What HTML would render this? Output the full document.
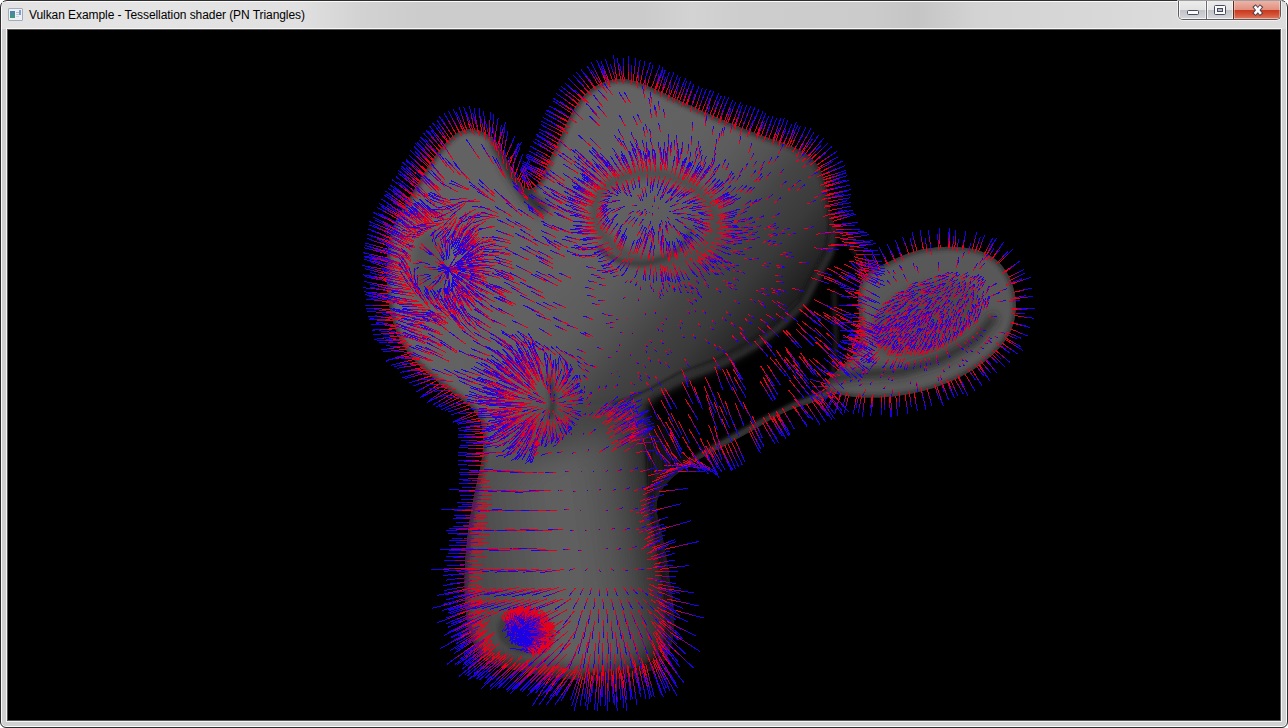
<!DOCTYPE html>
<html><head><meta charset="utf-8"><title>Vulkan Example - Tessellation shader (PN Triangles)</title>
<style>
html,body{margin:0;padding:0;background:#fff;}
body{width:1288px;height:728px;overflow:hidden;position:relative;font-family:"Liberation Sans",sans-serif;}
#win{position:absolute;left:0;top:0;width:1286px;height:726px;border:1px solid #2e2e2e;border-radius:7px 7px 6px 6px;
 background:#d1d1d1;box-shadow:inset 0 0 0 1px #fafafa;}
#tb{position:absolute;left:1px;top:1px;width:1284px;height:27px;background:linear-gradient(90deg,#e3e3e3 0,#e4e4e4 150px,#e0e0e0 300px,#d2d2d2 360px,#cccccc 420px,#cbcbcb 640px,#d3d3d3 690px,#cdcdcd 740px,#cbcbcb 870px,#c5c5c5 915px,#d3d3d3 975px,#d8d8d8 1100px,#dcdcdc 1180px,#dddddd 1284px);}
#title{position:absolute;left:28px;top:7px;font-size:12px;line-height:15px;color:#000;white-space:nowrap;letter-spacing:-0.07px;}
#icon{position:absolute;left:7px;top:7px;width:13px;height:11px;border:1px solid #a4abb9;background:#eef0f5;border-radius:1px;}
#icon i{position:absolute;left:1px;top:2px;width:5px;height:7px;background:linear-gradient(180deg,#4f7fb5,#3f9a74);}
#icon b{position:absolute;left:10px;top:1px;width:2px;height:5px;background:#7aa0d0;}
#icon u{position:absolute;left:7px;top:3px;width:3px;height:1px;background:#b8bcc6;box-shadow:0 2px 0 #c4c8d0,0 4px 0 #d0d3da;}
#client{position:absolute;left:6px;top:28px;width:1272px;height:690px;border:1px solid #555;outline:1px solid #f6f6f6;background:#000;}
#client svg{position:absolute;left:0;top:0;}
#btns{position:absolute;left:1177px;top:0px;width:101px;height:18px;border:1px solid #5a5a5f;border-top:none;border-radius:0 0 5px 5px;overflow:hidden;
 box-shadow:0 0 0 1px rgba(255,255,255,.55);}
#btns div{position:absolute;top:0;height:18px;box-sizing:border-box;}
.gb{background:linear-gradient(180deg,#ececec 0,#e2e2e3 9px,#c3c4c9 9.5px,#cfd0d4 15px,#dadbde 19px);box-shadow:inset 1px 0 0 rgba(255,255,255,.8),inset -1px 0 0 rgba(255,255,255,.5),inset 0 -1px 0 rgba(255,255,255,.7);}
#bmin{left:0;width:28px;border-right:1px solid #6a6a70;}
#bmax{left:28px;width:27px;border-right:1px solid #5a2a22;}
#bcls{left:55px;width:46px;background:linear-gradient(180deg,#eeb3a6 0,#e08f7f 9px,#c9391c 9.5px,#d4553a 14px,#e0846c 19px);box-shadow:inset 1px 0 0 rgba(255,255,255,.35),inset -1px 0 0 rgba(255,255,255,.35),inset 0 -1px 0 rgba(255,220,200,.6);}
#btns svg{position:absolute;left:0;top:0;}
</style></head><body>
<div id="win">
<div id="tb"></div>
<div id="icon"><i></i><u></u><b></b></div>
<div id="title">Vulkan Example - Tessellation shader (PN Triangles)</div>
<div id="btns"><div id="bmin" class="gb"></div><div id="bmax" class="gb"></div><div id="bcls"></div><svg width="101" height="18" viewBox="1179 1 101 18">
<rect x="1187.5" y="10.5" width="11" height="4" rx="1" fill="#fbfbfb" stroke="#454a5e" stroke-width="1"/>
<rect x="1214.5" y="5.5" width="11" height="9" rx="1" fill="#fbfbfb" stroke="#454a5e" stroke-width="1"/>
<rect x="1217.5" y="8.5" width="5" height="3" fill="#b9bbc4" stroke="#454a5e" stroke-width="1"/>
<g stroke-linecap="butt" fill="none"><line x1="1254.0" y1="5.6" x2="1261.6" y2="14.7" stroke="#4d414b" stroke-width="4.4"/><line x1="1261.6" y1="5.6" x2="1254.0" y2="14.7" stroke="#4d414b" stroke-width="4.4"/><line x1="1254.7" y1="6.4" x2="1260.9" y2="13.9" stroke="#fdfdfd" stroke-width="2.5"/><line x1="1260.9" y1="6.4" x2="1254.7" y2="13.9" stroke="#fdfdfd" stroke-width="2.5"/></g>
</svg></div>
<div id="client"><svg width="1272" height="690" viewBox="8 30 1272 690">
<defs>
<filter id="b1" filterUnits="userSpaceOnUse" x="300" y="30" width="800" height="700"><feGaussianBlur stdDeviation="0.8"/></filter>
<filter id="b2" filterUnits="userSpaceOnUse" x="300" y="30" width="800" height="700"><feGaussianBlur stdDeviation="2"/></filter>
<filter id="b4" filterUnits="userSpaceOnUse" x="300" y="30" width="800" height="700"><feGaussianBlur stdDeviation="4"/></filter>
<filter id="b8" filterUnits="userSpaceOnUse" x="300" y="30" width="800" height="700"><feGaussianBlur stdDeviation="8"/></filter>
<filter id="b14" filterUnits="userSpaceOnUse" x="300" y="30" width="800" height="700"><feGaussianBlur stdDeviation="14"/></filter>
<clipPath id="ch"><path d="M386.9 261.5 L387.1 258.4 L387.3 255.3 L387.6 252.3 L387.9 249.2 L388.3 246.2 L388.8 243.2 L389.3 240.3 L390.0 237.3 L390.7 234.4 L391.6 231.5 L392.5 228.6 L393.6 225.8 L394.8 223.0 L396.1 220.2 L397.5 217.4 L399.1 214.6 L400.7 211.9 L402.4 209.2 L404.1 206.5 L405.8 203.8 L407.5 201.0 L409.1 198.3 L410.7 195.6 L412.3 192.9 L413.9 190.3 L415.5 187.6 L417.1 184.9 L418.6 182.2 L420.2 179.6 L421.7 176.9 L423.3 174.3 L424.9 171.6 L426.5 169.0 L428.1 166.4 L429.7 163.8 L431.4 161.3 L433.1 158.7 L434.9 156.2 L436.7 153.7 L438.6 151.2 L440.5 148.8 L442.6 146.4 L444.7 144.0 L446.9 141.7 L449.2 139.4 L451.6 137.2 L454.1 135.2 L456.7 133.3 L459.4 131.7 L462.2 130.5 L465.2 129.7 L468.2 129.3 L471.3 129.2 L474.4 129.5 L477.5 130.1 L480.5 131.1 L483.4 132.2 L486.1 133.7 L488.7 135.3 L491.0 137.2 L493.2 139.2 L495.3 141.4 L497.2 143.7 L499.1 146.2 L500.8 148.8 L502.4 151.5 L504.0 154.2 L505.5 157.0 L507.0 159.9 L508.4 162.8 L509.9 165.7 L511.4 168.6 L512.9 171.5 L514.5 174.3 L516.1 177.1 L517.8 179.8 L519.7 182.4 L521.6 184.8 L523.7 186.9 L526.0 188.3 L528.4 189.0 L531.0 188.7 L533.6 187.7 L536.0 186.0 L538.2 183.9 L540.0 181.4 L541.6 178.6 L543.1 175.6 L544.3 172.5 L545.6 169.3 L546.8 166.1 L548.0 163.1 L549.3 160.1 L550.6 157.3 L551.9 154.6 L553.3 151.9 L554.7 149.3 L556.0 146.6 L557.4 143.9 L558.7 141.1 L560.0 138.3 L561.2 135.4 L562.5 132.6 L563.8 129.7 L565.0 126.8 L566.4 123.9 L567.7 121.1 L569.1 118.2 L570.5 115.4 L571.9 112.6 L573.5 109.9 L575.1 107.3 L576.8 104.7 L578.5 102.1 L580.4 99.7 L582.4 97.4 L584.4 95.1 L586.6 93.0 L588.9 91.0 L591.3 89.1 L593.8 87.3 L596.5 85.7 L599.3 84.2 L602.2 82.9 L605.3 81.7 L608.4 80.7 L611.6 80.0 L614.7 79.4 L617.9 79.1 L621.0 79.1 L624.0 79.2 L627.1 79.6 L630.1 80.1 L633.1 80.8 L636.0 81.6 L639.0 82.6 L641.9 83.7 L644.8 84.8 L647.6 86.1 L650.5 87.3 L653.4 88.6 L656.2 89.9 L659.1 91.2 L661.9 92.5 L664.8 93.8 L667.6 95.2 L670.4 96.5 L673.2 97.8 L676.1 99.1 L678.9 100.4 L681.7 101.7 L684.5 103.0 L687.3 104.2 L690.1 105.5 L693.0 106.8 L695.8 108.1 L698.6 109.4 L701.4 110.6 L704.2 111.9 L707.0 113.1 L709.9 114.4 L712.7 115.6 L715.5 116.9 L718.3 118.1 L721.2 119.3 L724.0 120.5 L726.9 121.7 L729.7 122.9 L732.6 124.1 L735.5 125.3 L738.3 126.5 L741.2 127.7 L744.1 128.8 L747.0 129.9 L749.9 131.1 L752.8 132.2 L755.8 133.3 L758.7 134.4 L761.7 135.5 L764.6 136.6 L767.6 137.6 L770.6 138.7 L773.6 139.7 L776.6 140.7 L779.6 141.8 L782.6 142.8 L785.6 143.9 L788.5 145.0 L791.4 146.2 L794.3 147.4 L797.0 148.7 L799.8 150.1 L802.4 151.5 L804.9 153.1 L807.4 154.8 L809.7 156.6 L811.9 158.6 L814.0 160.7 L815.9 163.0 L817.7 165.5 L819.3 168.1 L820.8 170.9 L822.1 173.8 L823.3 176.8 L824.4 179.9 L825.3 183.1 L826.2 186.3 L826.9 189.5 L827.6 192.8 L828.1 196.0 L828.6 199.2 L829.0 202.3 L829.4 205.4 L829.7 208.4 L830.2 211.3 L830.7 214.2 L831.4 217.0 L832.3 219.8 L833.5 222.5 L834.9 225.2 L836.6 227.8 L838.5 230.4 L840.5 232.9 L842.6 235.4 L844.8 237.8 L846.9 240.2 L849.0 242.5 L851.0 244.9 L852.9 247.3 L854.7 249.7 L856.3 252.3 L857.8 254.9 L859.0 257.7 L860.1 260.6 L861.0 263.6 L861.7 266.7 L862.3 269.8 L862.7 273.0 L863.1 276.2 L863.3 279.5 L863.5 282.6 L863.5 285.8 L863.5 289.0 L863.5 292.1 L863.4 295.2 L863.2 298.3 L862.9 301.4 L862.6 304.4 L862.3 307.5 L861.9 310.5 L861.4 313.6 L860.9 316.6 L860.3 319.6 L859.7 322.6 L859.1 325.6 L858.4 328.6 L857.7 331.6 L856.9 334.6 L856.2 337.6 L855.4 340.6 L854.6 343.6 L853.7 346.6 L852.8 349.6 L852.0 352.6 L851.1 355.6 L850.2 358.7 L849.3 361.7 L848.3 364.8 L847.4 367.8 L846.5 370.9 L845.6 374.0 L844.6 377.1 L843.6 380.1 L842.4 382.9 L841.1 385.6 L839.6 388.1 L837.8 390.4 L835.8 392.3 L833.6 394.0 L831.2 395.4 L828.6 396.8 L825.9 398.0 L823.1 399.2 L820.1 400.2 L817.1 401.2 L814.1 402.1 L811.0 403.1 L807.8 404.0 L804.7 404.9 L801.6 405.8 L798.5 406.8 L795.4 407.8 L792.4 408.9 L789.5 410.1 L786.6 411.4 L783.8 412.7 L781.0 414.1 L778.2 415.5 L775.5 417.0 L772.8 418.5 L770.1 420.0 L767.5 421.6 L764.8 423.1 L762.1 424.7 L759.5 426.3 L756.8 427.8 L754.1 429.4 L751.4 431.0 L748.7 432.5 L746.0 434.0 L743.3 435.6 L740.5 437.1 L737.8 438.6 L735.1 440.1 L732.3 441.6 L729.6 443.1 L726.8 444.6 L724.1 446.0 L721.3 447.5 L718.6 448.9 L715.8 450.3 L713.1 451.8 L710.4 453.2 L707.6 454.6 L704.9 456.0 L702.2 457.5 L699.5 459.0 L696.8 460.5 L694.1 462.1 L691.5 463.7 L688.9 465.3 L686.3 467.0 L683.7 468.8 L681.1 470.7 L678.6 472.6 L676.1 474.6 L673.6 476.6 L671.2 478.8 L668.9 481.1 L666.7 483.4 L664.7 485.8 L662.8 488.3 L661.2 490.8 L659.7 493.5 L658.5 496.2 L657.6 499.0 L656.9 501.8 L656.6 504.8 L656.5 507.8 L656.7 510.8 L657.1 513.9 L657.6 517.0 L658.3 520.2 L659.1 523.4 L659.9 526.5 L660.7 529.7 L661.4 532.8 L662.2 535.9 L662.8 539.0 L663.5 542.1 L664.1 545.2 L664.7 548.3 L665.2 551.3 L665.8 554.4 L666.3 557.4 L666.8 560.4 L667.3 563.5 L667.7 566.5 L668.2 569.5 L668.6 572.5 L669.1 575.6 L669.5 578.6 L670.0 581.7 L670.4 584.7 L670.9 587.8 L671.3 590.9 L671.8 593.9 L672.2 597.0 L672.6 600.1 L673.0 603.2 L673.3 606.3 L673.6 609.5 L673.8 612.6 L673.9 615.7 L674.0 618.8 L674.1 621.9 L674.0 625.0 L673.8 628.1 L673.6 631.3 L673.2 634.4 L672.8 637.5 L672.2 640.6 L671.5 643.7 L670.7 646.7 L669.7 649.8 L668.6 652.8 L667.3 655.7 L665.7 658.4 L664.0 661.0 L662.0 663.3 L659.8 665.3 L657.3 667.0 L654.6 668.6 L651.8 669.9 L648.9 671.1 L645.9 672.2 L642.9 673.2 L639.9 674.1 L636.9 674.9 L633.8 675.7 L630.8 676.4 L627.7 677.1 L624.7 677.6 L621.6 678.1 L618.5 678.6 L615.4 679.0 L612.3 679.3 L609.2 679.6 L606.1 679.8 L603.0 680.0 L599.9 680.1 L596.8 680.2 L593.7 680.2 L590.6 680.2 L587.5 680.1 L584.3 680.0 L581.2 679.9 L578.1 679.7 L575.0 679.5 L571.9 679.2 L568.8 679.0 L565.7 678.7 L562.6 678.3 L559.5 678.0 L556.4 677.6 L553.3 677.2 L550.3 676.7 L547.2 676.3 L544.1 675.8 L541.1 675.3 L538.1 674.8 L535.0 674.3 L532.0 673.8 L529.0 673.2 L525.9 672.6 L522.9 672.0 L519.9 671.3 L516.8 670.6 L513.8 669.8 L510.7 669.1 L507.6 668.2 L504.6 667.3 L501.5 666.4 L498.4 665.4 L495.4 664.2 L492.5 663.0 L489.7 661.5 L487.1 660.0 L484.6 658.2 L482.3 656.2 L480.2 654.0 L478.3 651.6 L476.6 649.1 L475.1 646.3 L473.7 643.5 L472.5 640.5 L471.4 637.5 L470.5 634.5 L469.6 631.4 L468.8 628.3 L468.1 625.2 L467.5 622.2 L467.0 619.1 L466.5 616.0 L466.1 612.9 L465.8 609.8 L465.5 606.7 L465.3 603.6 L465.1 600.5 L464.9 597.4 L464.8 594.4 L464.7 591.3 L464.7 588.2 L464.7 585.1 L464.7 582.0 L464.7 578.8 L464.7 575.7 L464.8 572.6 L464.9 569.5 L465.1 566.4 L465.2 563.3 L465.4 560.2 L465.6 557.1 L465.9 554.0 L466.1 550.9 L466.4 547.8 L466.7 544.7 L467.0 541.6 L467.4 538.5 L467.7 535.4 L468.1 532.4 L468.5 529.3 L468.9 526.2 L469.4 523.1 L469.8 520.0 L470.3 516.9 L470.8 513.9 L471.3 510.8 L471.9 507.7 L472.4 504.7 L473.0 501.6 L473.6 498.6 L474.3 495.5 L474.9 492.5 L475.6 489.4 L476.2 486.4 L476.9 483.4 L477.6 480.3 L478.3 477.3 L479.0 474.3 L479.6 471.2 L480.2 468.2 L480.8 465.2 L481.3 462.1 L481.8 459.0 L482.3 456.0 L482.6 452.9 L482.9 449.8 L483.1 446.7 L483.3 443.5 L483.3 440.4 L483.2 437.2 L483.1 434.1 L482.8 430.9 L482.3 427.7 L481.7 424.6 L480.8 421.6 L479.7 418.8 L478.3 416.2 L476.7 413.7 L474.8 411.4 L472.8 409.1 L470.6 407.0 L468.3 405.0 L465.9 403.0 L463.4 401.1 L460.9 399.2 L458.4 397.3 L455.8 395.4 L453.3 393.5 L450.7 391.6 L448.1 389.7 L445.6 387.8 L443.1 385.9 L440.6 383.9 L438.1 382.0 L435.6 380.0 L433.1 378.0 L430.7 376.0 L428.3 374.0 L426.0 371.9 L423.7 369.8 L421.5 367.7 L419.3 365.5 L417.1 363.3 L415.0 361.1 L413.0 358.8 L411.0 356.4 L409.2 354.0 L407.3 351.6 L405.6 349.1 L404.0 346.6 L402.4 344.0 L400.9 341.3 L399.5 338.6 L398.2 335.8 L397.0 333.0 L395.8 330.2 L394.8 327.3 L393.8 324.3 L392.8 321.3 L392.0 318.3 L391.2 315.3 L390.5 312.2 L389.9 309.1 L389.3 306.0 L388.8 302.8 L388.3 299.7 L387.9 296.5 L387.6 293.3 L387.3 290.1 L387.1 286.9 L386.9 283.7 L386.8 280.5 L386.7 277.3 L386.6 274.1 L386.7 271.0 L386.7 267.8 L386.8 264.7Z"/></clipPath>
<clipPath id="ce"><path d="M865.8 274.8 L867.1 273.7 L868.5 272.5 L870.0 271.4 L871.6 270.4 L873.3 269.4 L875.0 268.5 L876.8 267.6 L878.6 266.7 L880.4 265.9 L882.2 265.0 L884.0 264.2 L885.8 263.3 L887.5 262.5 L889.2 261.7 L891.0 260.8 L892.7 260.0 L894.4 259.3 L896.1 258.5 L897.7 257.7 L899.4 257.0 L901.1 256.2 L902.7 255.5 L904.4 254.9 L906.1 254.2 L907.7 253.6 L909.4 253.0 L911.1 252.4 L912.8 251.9 L914.4 251.4 L916.1 250.9 L917.8 250.4 L919.6 250.0 L921.3 249.6 L923.0 249.3 L924.8 248.9 L926.5 248.6 L928.3 248.4 L930.1 248.1 L931.9 247.9 L933.7 247.7 L935.5 247.5 L937.3 247.3 L939.2 247.2 L941.0 247.1 L942.9 247.0 L944.8 246.9 L946.7 246.8 L948.6 246.8 L950.6 246.8 L952.5 246.8 L954.4 246.9 L956.4 247.0 L958.3 247.1 L960.2 247.2 L962.1 247.4 L964.0 247.6 L966.0 247.9 L967.8 248.2 L969.7 248.5 L971.6 248.8 L973.4 249.3 L975.3 249.7 L977.1 250.2 L978.8 250.7 L980.6 251.3 L982.3 252.0 L984.0 252.7 L985.7 253.4 L987.3 254.2 L988.9 255.0 L990.5 255.9 L992.0 256.9 L993.5 257.9 L994.9 259.0 L996.3 260.1 L997.6 261.3 L998.9 262.5 L1000.2 263.8 L1001.4 265.1 L1002.5 266.5 L1003.6 267.9 L1004.7 269.4 L1005.7 270.9 L1006.7 272.4 L1007.6 274.0 L1008.5 275.6 L1009.4 277.3 L1010.1 278.9 L1010.9 280.6 L1011.6 282.4 L1012.2 284.1 L1012.8 285.9 L1013.3 287.7 L1013.8 289.5 L1014.3 291.3 L1014.6 293.1 L1015.0 295.0 L1015.3 296.8 L1015.5 298.7 L1015.7 300.6 L1015.8 302.4 L1015.9 304.3 L1015.9 306.2 L1015.9 308.1 L1015.8 309.9 L1015.6 311.8 L1015.4 313.6 L1015.2 315.5 L1014.9 317.3 L1014.5 319.1 L1014.1 320.9 L1013.6 322.7 L1013.1 324.4 L1012.5 326.1 L1011.9 327.9 L1011.2 329.5 L1010.5 331.2 L1009.7 332.8 L1008.8 334.4 L1007.9 336.0 L1007.0 337.6 L1006.0 339.1 L1005.0 340.7 L1003.9 342.1 L1002.8 343.6 L1001.6 345.1 L1000.5 346.5 L999.2 347.9 L998.0 349.3 L996.7 350.6 L995.4 352.0 L994.1 353.3 L992.7 354.6 L991.3 355.9 L989.9 357.1 L988.4 358.3 L987.0 359.5 L985.5 360.7 L984.0 361.9 L982.5 363.0 L981.0 364.2 L979.5 365.3 L977.9 366.3 L976.4 367.4 L974.8 368.4 L973.2 369.4 L971.7 370.4 L970.1 371.4 L968.5 372.4 L966.9 373.3 L965.3 374.2 L963.6 375.1 L962.0 376.0 L960.4 376.8 L958.7 377.6 L957.1 378.5 L955.4 379.3 L953.8 380.0 L952.1 380.8 L950.4 381.5 L948.7 382.3 L947.0 383.0 L945.3 383.6 L943.6 384.3 L941.9 385.0 L940.2 385.6 L938.5 386.2 L936.8 386.8 L935.0 387.4 L933.3 387.9 L931.6 388.5 L929.8 389.0 L928.1 389.5 L926.3 390.0 L924.5 390.5 L922.8 390.9 L921.0 391.4 L919.2 391.8 L917.5 392.2 L915.7 392.6 L913.9 393.0 L912.1 393.4 L910.3 393.7 L908.5 394.1 L906.7 394.4 L904.9 394.7 L903.1 395.0 L901.3 395.3 L899.5 395.5 L897.7 395.8 L895.9 396.0 L894.1 396.3 L892.3 396.5 L890.5 396.7 L888.6 396.8 L886.8 397.0 L885.0 397.1 L883.1 397.3 L881.3 397.4 L879.5 397.5 L877.6 397.5 L875.8 397.6 L873.9 397.6 L872.1 397.7 L870.2 397.6 L868.3 397.6 L866.5 397.6 L864.6 397.5 L862.7 397.4 L860.8 397.3 L858.9 397.2 L857.0 397.0 L855.1 396.9 L853.2 396.7 L851.2 396.4 L849.3 396.2 L847.4 395.9 L845.4 395.6 L843.5 395.3 L841.5 394.9 L839.5 394.5 L837.5 394.1 L835.6 393.7 L833.7 393.2 L831.9 392.7 L830.2 392.1 L828.7 391.4 L827.4 390.6 L826.3 389.8 L825.6 388.8 L825.2 387.8 L825.1 386.6 L825.3 385.3 L825.8 383.9 L826.5 382.5 L827.5 381.0 L828.6 379.5 L829.9 377.9 L831.3 376.3 L832.8 374.7 L834.4 373.2 L835.9 371.7 L837.5 370.2 L839.1 368.7 L840.6 367.3 L842.1 365.9 L843.6 364.6 L845.0 363.2 L846.4 361.9 L847.8 360.5 L849.1 359.2 L850.4 357.8 L851.6 356.5 L852.7 355.1 L853.8 353.7 L854.7 352.3 L855.6 350.8 L856.4 349.3 L857.2 347.8 L857.8 346.2 L858.3 344.6 L858.8 343.0 L859.2 341.3 L859.5 339.6 L859.7 337.8 L859.9 336.0 L860.0 334.2 L860.1 332.4 L860.2 330.5 L860.1 328.7 L860.1 326.8 L860.0 324.8 L859.9 322.9 L859.8 321.0 L859.6 319.0 L859.4 317.0 L859.3 315.0 L859.1 313.1 L858.9 311.1 L858.7 309.1 L858.6 307.1 L858.4 305.1 L858.3 303.2 L858.3 301.2 L858.2 299.3 L858.2 297.4 L858.3 295.5 L858.4 293.7 L858.5 291.9 L858.7 290.1 L859.0 288.3 L859.4 286.6 L859.9 285.0 L860.4 283.4 L861.0 281.8 L861.8 280.3 L862.6 278.8 L863.5 277.4 L864.6 276.1Z"/></clipPath>
<linearGradient id="gf" gradientUnits="userSpaceOnUse" x1="425.6" y1="364.0" x2="623.2" y2="533.0"><stop offset="0.000" stop-color="rgb(98,98,98)"/><stop offset="0.192" stop-color="rgb(97,97,97)"/><stop offset="0.346" stop-color="rgb(92,92,92)"/><stop offset="0.473" stop-color="rgb(82,82,82)"/><stop offset="0.577" stop-color="rgb(69,69,69)"/><stop offset="0.731" stop-color="rgb(58,58,58)"/><stop offset="0.827" stop-color="rgb(44,44,44)"/><stop offset="0.923" stop-color="rgb(30,30,30)"/><stop offset="1.000" stop-color="rgb(22,22,22)"/></linearGradient>
<linearGradient id="gm" gradientUnits="userSpaceOnUse" x1="466" y1="500" x2="672" y2="475"><stop offset="0.000" stop-color="rgb(72,72,72)"/><stop offset="0.092" stop-color="rgb(78,78,78)"/><stop offset="0.262" stop-color="rgb(88,88,88)"/><stop offset="0.437" stop-color="rgb(98,98,98)"/><stop offset="0.641" stop-color="rgb(88,88,88)"/><stop offset="0.777" stop-color="rgb(70,70,70)"/><stop offset="0.859" stop-color="rgb(46,46,46)"/><stop offset="0.922" stop-color="rgb(26,26,26)"/><stop offset="1.000" stop-color="rgb(14,14,14)"/></linearGradient>
<radialGradient id="ge" gradientUnits="userSpaceOnUse" cx="940" cy="320" r="90"><stop offset="0" stop-color="#626262"/><stop offset="1" stop-color="#505050"/></radialGradient>
</defs>
<path d="M386.9 261.5 L387.1 258.4 L387.3 255.3 L387.6 252.3 L387.9 249.2 L388.3 246.2 L388.8 243.2 L389.3 240.3 L390.0 237.3 L390.7 234.4 L391.6 231.5 L392.5 228.6 L393.6 225.8 L394.8 223.0 L396.1 220.2 L397.5 217.4 L399.1 214.6 L400.7 211.9 L402.4 209.2 L404.1 206.5 L405.8 203.8 L407.5 201.0 L409.1 198.3 L410.7 195.6 L412.3 192.9 L413.9 190.3 L415.5 187.6 L417.1 184.9 L418.6 182.2 L420.2 179.6 L421.7 176.9 L423.3 174.3 L424.9 171.6 L426.5 169.0 L428.1 166.4 L429.7 163.8 L431.4 161.3 L433.1 158.7 L434.9 156.2 L436.7 153.7 L438.6 151.2 L440.5 148.8 L442.6 146.4 L444.7 144.0 L446.9 141.7 L449.2 139.4 L451.6 137.2 L454.1 135.2 L456.7 133.3 L459.4 131.7 L462.2 130.5 L465.2 129.7 L468.2 129.3 L471.3 129.2 L474.4 129.5 L477.5 130.1 L480.5 131.1 L483.4 132.2 L486.1 133.7 L488.7 135.3 L491.0 137.2 L493.2 139.2 L495.3 141.4 L497.2 143.7 L499.1 146.2 L500.8 148.8 L502.4 151.5 L504.0 154.2 L505.5 157.0 L507.0 159.9 L508.4 162.8 L509.9 165.7 L511.4 168.6 L512.9 171.5 L514.5 174.3 L516.1 177.1 L517.8 179.8 L519.7 182.4 L521.6 184.8 L523.7 186.9 L526.0 188.3 L528.4 189.0 L531.0 188.7 L533.6 187.7 L536.0 186.0 L538.2 183.9 L540.0 181.4 L541.6 178.6 L543.1 175.6 L544.3 172.5 L545.6 169.3 L546.8 166.1 L548.0 163.1 L549.3 160.1 L550.6 157.3 L551.9 154.6 L553.3 151.9 L554.7 149.3 L556.0 146.6 L557.4 143.9 L558.7 141.1 L560.0 138.3 L561.2 135.4 L562.5 132.6 L563.8 129.7 L565.0 126.8 L566.4 123.9 L567.7 121.1 L569.1 118.2 L570.5 115.4 L571.9 112.6 L573.5 109.9 L575.1 107.3 L576.8 104.7 L578.5 102.1 L580.4 99.7 L582.4 97.4 L584.4 95.1 L586.6 93.0 L588.9 91.0 L591.3 89.1 L593.8 87.3 L596.5 85.7 L599.3 84.2 L602.2 82.9 L605.3 81.7 L608.4 80.7 L611.6 80.0 L614.7 79.4 L617.9 79.1 L621.0 79.1 L624.0 79.2 L627.1 79.6 L630.1 80.1 L633.1 80.8 L636.0 81.6 L639.0 82.6 L641.9 83.7 L644.8 84.8 L647.6 86.1 L650.5 87.3 L653.4 88.6 L656.2 89.9 L659.1 91.2 L661.9 92.5 L664.8 93.8 L667.6 95.2 L670.4 96.5 L673.2 97.8 L676.1 99.1 L678.9 100.4 L681.7 101.7 L684.5 103.0 L687.3 104.2 L690.1 105.5 L693.0 106.8 L695.8 108.1 L698.6 109.4 L701.4 110.6 L704.2 111.9 L707.0 113.1 L709.9 114.4 L712.7 115.6 L715.5 116.9 L718.3 118.1 L721.2 119.3 L724.0 120.5 L726.9 121.7 L729.7 122.9 L732.6 124.1 L735.5 125.3 L738.3 126.5 L741.2 127.7 L744.1 128.8 L747.0 129.9 L749.9 131.1 L752.8 132.2 L755.8 133.3 L758.7 134.4 L761.7 135.5 L764.6 136.6 L767.6 137.6 L770.6 138.7 L773.6 139.7 L776.6 140.7 L779.6 141.8 L782.6 142.8 L785.6 143.9 L788.5 145.0 L791.4 146.2 L794.3 147.4 L797.0 148.7 L799.8 150.1 L802.4 151.5 L804.9 153.1 L807.4 154.8 L809.7 156.6 L811.9 158.6 L814.0 160.7 L815.9 163.0 L817.7 165.5 L819.3 168.1 L820.8 170.9 L822.1 173.8 L823.3 176.8 L824.4 179.9 L825.3 183.1 L826.2 186.3 L826.9 189.5 L827.6 192.8 L828.1 196.0 L828.6 199.2 L829.0 202.3 L829.4 205.4 L829.7 208.4 L830.2 211.3 L830.7 214.2 L831.4 217.0 L832.3 219.8 L833.5 222.5 L834.9 225.2 L836.6 227.8 L838.5 230.4 L840.5 232.9 L842.6 235.4 L844.8 237.8 L846.9 240.2 L849.0 242.5 L851.0 244.9 L852.9 247.3 L854.7 249.7 L856.3 252.3 L857.8 254.9 L859.0 257.7 L860.1 260.6 L861.0 263.6 L861.7 266.7 L862.3 269.8 L862.7 273.0 L863.1 276.2 L863.3 279.5 L863.5 282.6 L863.5 285.8 L863.5 289.0 L863.5 292.1 L863.4 295.2 L863.2 298.3 L862.9 301.4 L862.6 304.4 L862.3 307.5 L861.9 310.5 L861.4 313.6 L860.9 316.6 L860.3 319.6 L859.7 322.6 L859.1 325.6 L858.4 328.6 L857.7 331.6 L856.9 334.6 L856.2 337.6 L855.4 340.6 L854.6 343.6 L853.7 346.6 L852.8 349.6 L852.0 352.6 L851.1 355.6 L850.2 358.7 L849.3 361.7 L848.3 364.8 L847.4 367.8 L846.5 370.9 L845.6 374.0 L844.6 377.1 L843.6 380.1 L842.4 382.9 L841.1 385.6 L839.6 388.1 L837.8 390.4 L835.8 392.3 L833.6 394.0 L831.2 395.4 L828.6 396.8 L825.9 398.0 L823.1 399.2 L820.1 400.2 L817.1 401.2 L814.1 402.1 L811.0 403.1 L807.8 404.0 L804.7 404.9 L801.6 405.8 L798.5 406.8 L795.4 407.8 L792.4 408.9 L789.5 410.1 L786.6 411.4 L783.8 412.7 L781.0 414.1 L778.2 415.5 L775.5 417.0 L772.8 418.5 L770.1 420.0 L767.5 421.6 L764.8 423.1 L762.1 424.7 L759.5 426.3 L756.8 427.8 L754.1 429.4 L751.4 431.0 L748.7 432.5 L746.0 434.0 L743.3 435.6 L740.5 437.1 L737.8 438.6 L735.1 440.1 L732.3 441.6 L729.6 443.1 L726.8 444.6 L724.1 446.0 L721.3 447.5 L718.6 448.9 L715.8 450.3 L713.1 451.8 L710.4 453.2 L707.6 454.6 L704.9 456.0 L702.2 457.5 L699.5 459.0 L696.8 460.5 L694.1 462.1 L691.5 463.7 L688.9 465.3 L686.3 467.0 L683.7 468.8 L681.1 470.7 L678.6 472.6 L676.1 474.6 L673.6 476.6 L671.2 478.8 L668.9 481.1 L666.7 483.4 L664.7 485.8 L662.8 488.3 L661.2 490.8 L659.7 493.5 L658.5 496.2 L657.6 499.0 L656.9 501.8 L656.6 504.8 L656.5 507.8 L656.7 510.8 L657.1 513.9 L657.6 517.0 L658.3 520.2 L659.1 523.4 L659.9 526.5 L660.7 529.7 L661.4 532.8 L662.2 535.9 L662.8 539.0 L663.5 542.1 L664.1 545.2 L664.7 548.3 L665.2 551.3 L665.8 554.4 L666.3 557.4 L666.8 560.4 L667.3 563.5 L667.7 566.5 L668.2 569.5 L668.6 572.5 L669.1 575.6 L669.5 578.6 L670.0 581.7 L670.4 584.7 L670.9 587.8 L671.3 590.9 L671.8 593.9 L672.2 597.0 L672.6 600.1 L673.0 603.2 L673.3 606.3 L673.6 609.5 L673.8 612.6 L673.9 615.7 L674.0 618.8 L674.1 621.9 L674.0 625.0 L673.8 628.1 L673.6 631.3 L673.2 634.4 L672.8 637.5 L672.2 640.6 L671.5 643.7 L670.7 646.7 L669.7 649.8 L668.6 652.8 L667.3 655.7 L665.7 658.4 L664.0 661.0 L662.0 663.3 L659.8 665.3 L657.3 667.0 L654.6 668.6 L651.8 669.9 L648.9 671.1 L645.9 672.2 L642.9 673.2 L639.9 674.1 L636.9 674.9 L633.8 675.7 L630.8 676.4 L627.7 677.1 L624.7 677.6 L621.6 678.1 L618.5 678.6 L615.4 679.0 L612.3 679.3 L609.2 679.6 L606.1 679.8 L603.0 680.0 L599.9 680.1 L596.8 680.2 L593.7 680.2 L590.6 680.2 L587.5 680.1 L584.3 680.0 L581.2 679.9 L578.1 679.7 L575.0 679.5 L571.9 679.2 L568.8 679.0 L565.7 678.7 L562.6 678.3 L559.5 678.0 L556.4 677.6 L553.3 677.2 L550.3 676.7 L547.2 676.3 L544.1 675.8 L541.1 675.3 L538.1 674.8 L535.0 674.3 L532.0 673.8 L529.0 673.2 L525.9 672.6 L522.9 672.0 L519.9 671.3 L516.8 670.6 L513.8 669.8 L510.7 669.1 L507.6 668.2 L504.6 667.3 L501.5 666.4 L498.4 665.4 L495.4 664.2 L492.5 663.0 L489.7 661.5 L487.1 660.0 L484.6 658.2 L482.3 656.2 L480.2 654.0 L478.3 651.6 L476.6 649.1 L475.1 646.3 L473.7 643.5 L472.5 640.5 L471.4 637.5 L470.5 634.5 L469.6 631.4 L468.8 628.3 L468.1 625.2 L467.5 622.2 L467.0 619.1 L466.5 616.0 L466.1 612.9 L465.8 609.8 L465.5 606.7 L465.3 603.6 L465.1 600.5 L464.9 597.4 L464.8 594.4 L464.7 591.3 L464.7 588.2 L464.7 585.1 L464.7 582.0 L464.7 578.8 L464.7 575.7 L464.8 572.6 L464.9 569.5 L465.1 566.4 L465.2 563.3 L465.4 560.2 L465.6 557.1 L465.9 554.0 L466.1 550.9 L466.4 547.8 L466.7 544.7 L467.0 541.6 L467.4 538.5 L467.7 535.4 L468.1 532.4 L468.5 529.3 L468.9 526.2 L469.4 523.1 L469.8 520.0 L470.3 516.9 L470.8 513.9 L471.3 510.8 L471.9 507.7 L472.4 504.7 L473.0 501.6 L473.6 498.6 L474.3 495.5 L474.9 492.5 L475.6 489.4 L476.2 486.4 L476.9 483.4 L477.6 480.3 L478.3 477.3 L479.0 474.3 L479.6 471.2 L480.2 468.2 L480.8 465.2 L481.3 462.1 L481.8 459.0 L482.3 456.0 L482.6 452.9 L482.9 449.8 L483.1 446.7 L483.3 443.5 L483.3 440.4 L483.2 437.2 L483.1 434.1 L482.8 430.9 L482.3 427.7 L481.7 424.6 L480.8 421.6 L479.7 418.8 L478.3 416.2 L476.7 413.7 L474.8 411.4 L472.8 409.1 L470.6 407.0 L468.3 405.0 L465.9 403.0 L463.4 401.1 L460.9 399.2 L458.4 397.3 L455.8 395.4 L453.3 393.5 L450.7 391.6 L448.1 389.7 L445.6 387.8 L443.1 385.9 L440.6 383.9 L438.1 382.0 L435.6 380.0 L433.1 378.0 L430.7 376.0 L428.3 374.0 L426.0 371.9 L423.7 369.8 L421.5 367.7 L419.3 365.5 L417.1 363.3 L415.0 361.1 L413.0 358.8 L411.0 356.4 L409.2 354.0 L407.3 351.6 L405.6 349.1 L404.0 346.6 L402.4 344.0 L400.9 341.3 L399.5 338.6 L398.2 335.8 L397.0 333.0 L395.8 330.2 L394.8 327.3 L393.8 324.3 L392.8 321.3 L392.0 318.3 L391.2 315.3 L390.5 312.2 L389.9 309.1 L389.3 306.0 L388.8 302.8 L388.3 299.7 L387.9 296.5 L387.6 293.3 L387.3 290.1 L387.1 286.9 L386.9 283.7 L386.8 280.5 L386.7 277.3 L386.6 274.1 L386.7 271.0 L386.7 267.8 L386.8 264.7Z" fill="url(#gf)"/>
<g clip-path="url(#ch)">
<path transform="translate(-4 0)" filter="url(#b4)" fill="#060606" d="M836 100 L840 225 L836 255 L824 278 L810 305 L788 328 L760 349 L728 367 L690 382 L660 397 L648 410 L652 440 L658 480 L900 480 L900 100Z"/>
<path transform="translate(-4 0)" filter="url(#b2)" fill="none" stroke="#333" stroke-width="4" d="M835 160 L839 225 L835 252 L823 274 L808 303 L786 325 L759 346 L728 363 L688 378 L660 393"/>
<path transform="translate(-4 0)" fill="none" stroke="#1c1c1c" stroke-width="1.6" opacity=".9" d="M822 110 L827 150 L831 190 L833 225 L829 250 L818 269 L803 299 L782 320 L755 340 L725 357 L685 372 L655 388 L637 397 L615 404" filter="url(#b1)"/>
<path filter="url(#b2)" fill="none" stroke="#484848" stroke-width="9" d="M668 478 L690 464 L720 447 L760 425 L795 407 L832 393"/>
<path filter="url(#b2)" fill="none" stroke="#2c2c2c" stroke-width="3" d="M834 290 L836 340 L832 388"/>
<path filter="url(#b14)" fill="url(#gm)" d="M430 468 L540 458 L590 432 L640 420 L668 445 L700 470 L700 720 L430 720Z"/>
<path filter="url(#b8)" fill="#000" opacity=".45" d="M455 640 L480 652 L520 662 L580 668 L640 660 L660 640 L700 700 L440 700Z"/>
<path filter="url(#b2)" fill="none" stroke="#0c0c0c" stroke-width="5" d="M648 440 L652 505 L660 546 L666 583 L670 621 L667 646 L659 659 L645 669 L620 675 L585 677"/>
<path d="M386.9 261.5 L387.1 258.4 L387.3 255.3 L387.6 252.3 L387.9 249.2 L388.3 246.2 L388.8 243.2 L389.3 240.3 L390.0 237.3 L390.7 234.4 L391.6 231.5 L392.5 228.6 L393.6 225.8 L394.8 223.0 L396.1 220.2 L397.5 217.4 L399.1 214.6 L400.7 211.9 L402.4 209.2 L404.1 206.5 L405.8 203.8 L407.5 201.0 L409.1 198.3 L410.7 195.6 L412.3 192.9 L413.9 190.3 L415.5 187.6 L417.1 184.9 L418.6 182.2 L420.2 179.6 L421.7 176.9 L423.3 174.3 L424.9 171.6 L426.5 169.0 L428.1 166.4 L429.7 163.8 L431.4 161.3 L433.1 158.7 L434.9 156.2 L436.7 153.7 L438.6 151.2 L440.5 148.8 L442.6 146.4 L444.7 144.0 L446.9 141.7 L449.2 139.4 L451.6 137.2 L454.1 135.2 L456.7 133.3 L459.4 131.7 L462.2 130.5 L465.2 129.7 L468.2 129.3 L471.3 129.2 L474.4 129.5 L477.5 130.1 L480.5 131.1 L483.4 132.2 L486.1 133.7 L488.7 135.3 L491.0 137.2 L493.2 139.2 L495.3 141.4 L497.2 143.7 L499.1 146.2 L500.8 148.8 L502.4 151.5 L504.0 154.2 L505.5 157.0 L507.0 159.9 L508.4 162.8 L509.9 165.7 L511.4 168.6 L512.9 171.5 L514.5 174.3 L516.1 177.1 L517.8 179.8 L519.7 182.4 L521.6 184.8 L523.7 186.9 L526.0 188.3 L528.4 189.0 L531.0 188.7 L533.6 187.7 L536.0 186.0 L538.2 183.9 L540.0 181.4 L541.6 178.6 L543.1 175.6 L544.3 172.5 L545.6 169.3 L546.8 166.1 L548.0 163.1 L549.3 160.1 L550.6 157.3 L551.9 154.6 L553.3 151.9 L554.7 149.3 L556.0 146.6 L557.4 143.9 L558.7 141.1 L560.0 138.3 L561.2 135.4 L562.5 132.6 L563.8 129.7 L565.0 126.8 L566.4 123.9 L567.7 121.1 L569.1 118.2 L570.5 115.4 L571.9 112.6 L573.5 109.9 L575.1 107.3 L576.8 104.7 L578.5 102.1 L580.4 99.7 L582.4 97.4 L584.4 95.1 L586.6 93.0 L588.9 91.0 L591.3 89.1 L593.8 87.3 L596.5 85.7 L599.3 84.2 L602.2 82.9 L605.3 81.7 L608.4 80.7 L611.6 80.0 L614.7 79.4 L617.9 79.1 L621.0 79.1 L624.0 79.2 L627.1 79.6 L630.1 80.1 L633.1 80.8 L636.0 81.6 L639.0 82.6 L641.9 83.7 L644.8 84.8 L647.6 86.1 L650.5 87.3 L653.4 88.6 L656.2 89.9 L659.1 91.2 L661.9 92.5 L664.8 93.8 L667.6 95.2 L670.4 96.5 L673.2 97.8 L676.1 99.1 L678.9 100.4 L681.7 101.7 L684.5 103.0 L687.3 104.2 L690.1 105.5 L693.0 106.8 L695.8 108.1 L698.6 109.4 L701.4 110.6 L704.2 111.9 L707.0 113.1 L709.9 114.4 L712.7 115.6 L715.5 116.9 L718.3 118.1 L721.2 119.3 L724.0 120.5 L726.9 121.7 L729.7 122.9 L732.6 124.1 L735.5 125.3 L738.3 126.5 L741.2 127.7 L744.1 128.8 L747.0 129.9 L749.9 131.1 L752.8 132.2 L755.8 133.3 L758.7 134.4 L761.7 135.5 L764.6 136.6 L767.6 137.6 L770.6 138.7 L773.6 139.7 L776.6 140.7 L779.6 141.8 L782.6 142.8 L785.6 143.9 L788.5 145.0 L791.4 146.2 L794.3 147.4 L797.0 148.7 L799.8 150.1 L802.4 151.5 L804.9 153.1 L807.4 154.8 L809.7 156.6 L811.9 158.6 L814.0 160.7 L815.9 163.0 L817.7 165.5 L819.3 168.1 L820.8 170.9 L822.1 173.8 L823.3 176.8 L824.4 179.9 L825.3 183.1 L826.2 186.3 L826.9 189.5 L827.6 192.8 L828.1 196.0 L828.6 199.2 L829.0 202.3 L829.4 205.4 L829.7 208.4 L830.2 211.3 L830.7 214.2 L831.4 217.0 L832.3 219.8 L833.5 222.5 L834.9 225.2 L836.6 227.8 L838.5 230.4 L840.5 232.9 L842.6 235.4 L844.8 237.8 L846.9 240.2 L849.0 242.5 L851.0 244.9 L852.9 247.3 L854.7 249.7 L856.3 252.3 L857.8 254.9 L859.0 257.7 L860.1 260.6 L861.0 263.6 L861.7 266.7 L862.3 269.8 L862.7 273.0 L863.1 276.2 L863.3 279.5 L863.5 282.6 L863.5 285.8 L863.5 289.0 L863.5 292.1 L863.4 295.2 L863.2 298.3 L862.9 301.4 L862.6 304.4 L862.3 307.5 L861.9 310.5 L861.4 313.6 L860.9 316.6 L860.3 319.6 L859.7 322.6 L859.1 325.6 L858.4 328.6 L857.7 331.6 L856.9 334.6 L856.2 337.6 L855.4 340.6 L854.6 343.6 L853.7 346.6 L852.8 349.6 L852.0 352.6 L851.1 355.6 L850.2 358.7 L849.3 361.7 L848.3 364.8 L847.4 367.8 L846.5 370.9 L845.6 374.0 L844.6 377.1 L843.6 380.1 L842.4 382.9 L841.1 385.6 L839.6 388.1 L837.8 390.4 L835.8 392.3 L833.6 394.0 L831.2 395.4 L828.6 396.8 L825.9 398.0 L823.1 399.2 L820.1 400.2 L817.1 401.2 L814.1 402.1 L811.0 403.1 L807.8 404.0 L804.7 404.9 L801.6 405.8 L798.5 406.8 L795.4 407.8 L792.4 408.9 L789.5 410.1 L786.6 411.4 L783.8 412.7 L781.0 414.1 L778.2 415.5 L775.5 417.0 L772.8 418.5 L770.1 420.0 L767.5 421.6 L764.8 423.1 L762.1 424.7 L759.5 426.3 L756.8 427.8 L754.1 429.4 L751.4 431.0 L748.7 432.5 L746.0 434.0 L743.3 435.6 L740.5 437.1 L737.8 438.6 L735.1 440.1 L732.3 441.6 L729.6 443.1 L726.8 444.6 L724.1 446.0 L721.3 447.5 L718.6 448.9 L715.8 450.3 L713.1 451.8 L710.4 453.2 L707.6 454.6 L704.9 456.0 L702.2 457.5 L699.5 459.0 L696.8 460.5 L694.1 462.1 L691.5 463.7 L688.9 465.3 L686.3 467.0 L683.7 468.8 L681.1 470.7 L678.6 472.6 L676.1 474.6 L673.6 476.6 L671.2 478.8 L668.9 481.1 L666.7 483.4 L664.7 485.8 L662.8 488.3 L661.2 490.8 L659.7 493.5 L658.5 496.2 L657.6 499.0 L656.9 501.8 L656.6 504.8 L656.5 507.8 L656.7 510.8 L657.1 513.9 L657.6 517.0 L658.3 520.2 L659.1 523.4 L659.9 526.5 L660.7 529.7 L661.4 532.8 L662.2 535.9 L662.8 539.0 L663.5 542.1 L664.1 545.2 L664.7 548.3 L665.2 551.3 L665.8 554.4 L666.3 557.4 L666.8 560.4 L667.3 563.5 L667.7 566.5 L668.2 569.5 L668.6 572.5 L669.1 575.6 L669.5 578.6 L670.0 581.7 L670.4 584.7 L670.9 587.8 L671.3 590.9 L671.8 593.9 L672.2 597.0 L672.6 600.1 L673.0 603.2 L673.3 606.3 L673.6 609.5 L673.8 612.6 L673.9 615.7 L674.0 618.8 L674.1 621.9 L674.0 625.0 L673.8 628.1 L673.6 631.3 L673.2 634.4 L672.8 637.5 L672.2 640.6 L671.5 643.7 L670.7 646.7 L669.7 649.8 L668.6 652.8 L667.3 655.7 L665.7 658.4 L664.0 661.0 L662.0 663.3 L659.8 665.3 L657.3 667.0 L654.6 668.6 L651.8 669.9 L648.9 671.1 L645.9 672.2 L642.9 673.2 L639.9 674.1 L636.9 674.9 L633.8 675.7 L630.8 676.4 L627.7 677.1 L624.7 677.6 L621.6 678.1 L618.5 678.6 L615.4 679.0 L612.3 679.3 L609.2 679.6 L606.1 679.8 L603.0 680.0 L599.9 680.1 L596.8 680.2 L593.7 680.2 L590.6 680.2 L587.5 680.1 L584.3 680.0 L581.2 679.9 L578.1 679.7 L575.0 679.5 L571.9 679.2 L568.8 679.0 L565.7 678.7 L562.6 678.3 L559.5 678.0 L556.4 677.6 L553.3 677.2 L550.3 676.7 L547.2 676.3 L544.1 675.8 L541.1 675.3 L538.1 674.8 L535.0 674.3 L532.0 673.8 L529.0 673.2 L525.9 672.6 L522.9 672.0 L519.9 671.3 L516.8 670.6 L513.8 669.8 L510.7 669.1 L507.6 668.2 L504.6 667.3 L501.5 666.4 L498.4 665.4 L495.4 664.2 L492.5 663.0 L489.7 661.5 L487.1 660.0 L484.6 658.2 L482.3 656.2 L480.2 654.0 L478.3 651.6 L476.6 649.1 L475.1 646.3 L473.7 643.5 L472.5 640.5 L471.4 637.5 L470.5 634.5 L469.6 631.4 L468.8 628.3 L468.1 625.2 L467.5 622.2 L467.0 619.1 L466.5 616.0 L466.1 612.9 L465.8 609.8 L465.5 606.7 L465.3 603.6 L465.1 600.5 L464.9 597.4 L464.8 594.4 L464.7 591.3 L464.7 588.2 L464.7 585.1 L464.7 582.0 L464.7 578.8 L464.7 575.7 L464.8 572.6 L464.9 569.5 L465.1 566.4 L465.2 563.3 L465.4 560.2 L465.6 557.1 L465.9 554.0 L466.1 550.9 L466.4 547.8 L466.7 544.7 L467.0 541.6 L467.4 538.5 L467.7 535.4 L468.1 532.4 L468.5 529.3 L468.9 526.2 L469.4 523.1 L469.8 520.0 L470.3 516.9 L470.8 513.9 L471.3 510.8 L471.9 507.7 L472.4 504.7 L473.0 501.6 L473.6 498.6 L474.3 495.5 L474.9 492.5 L475.6 489.4 L476.2 486.4 L476.9 483.4 L477.6 480.3 L478.3 477.3 L479.0 474.3 L479.6 471.2 L480.2 468.2 L480.8 465.2 L481.3 462.1 L481.8 459.0 L482.3 456.0 L482.6 452.9 L482.9 449.8 L483.1 446.7 L483.3 443.5 L483.3 440.4 L483.2 437.2 L483.1 434.1 L482.8 430.9 L482.3 427.7 L481.7 424.6 L480.8 421.6 L479.7 418.8 L478.3 416.2 L476.7 413.7 L474.8 411.4 L472.8 409.1 L470.6 407.0 L468.3 405.0 L465.9 403.0 L463.4 401.1 L460.9 399.2 L458.4 397.3 L455.8 395.4 L453.3 393.5 L450.7 391.6 L448.1 389.7 L445.6 387.8 L443.1 385.9 L440.6 383.9 L438.1 382.0 L435.6 380.0 L433.1 378.0 L430.7 376.0 L428.3 374.0 L426.0 371.9 L423.7 369.8 L421.5 367.7 L419.3 365.5 L417.1 363.3 L415.0 361.1 L413.0 358.8 L411.0 356.4 L409.2 354.0 L407.3 351.6 L405.6 349.1 L404.0 346.6 L402.4 344.0 L400.9 341.3 L399.5 338.6 L398.2 335.8 L397.0 333.0 L395.8 330.2 L394.8 327.3 L393.8 324.3 L392.8 321.3 L392.0 318.3 L391.2 315.3 L390.5 312.2 L389.9 309.1 L389.3 306.0 L388.8 302.8 L388.3 299.7 L387.9 296.5 L387.6 293.3 L387.3 290.1 L387.1 286.9 L386.9 283.7 L386.8 280.5 L386.7 277.3 L386.6 274.1 L386.7 271.0 L386.7 267.8 L386.8 264.7Z" fill="none" stroke="#202020" stroke-width="6" filter="url(#b2)" opacity=".75"/>
<ellipse cx="430" cy="267" rx="17" ry="36" fill="#555" filter="url(#b4)"/>
<path d="M452 250 Q457 268 450 288" fill="none" stroke="#6a6a6a" stroke-width="5" filter="url(#b2)"/>
<ellipse cx="655" cy="218" rx="61" ry="44" transform="rotate(12 655 218)" fill="none" stroke="#484848" stroke-width="9" filter="url(#b4)"/>
<path d="M692 230 Q682 258 642 264 Q612 264 598 246" fill="none" stroke="#3a3a3a" stroke-width="5" filter="url(#b2)"/>
<path filter="url(#b4)" fill="none" stroke="#2c2c2c" stroke-width="12" d="M496 140 L512 172 L528 196 L545 212"/>
<path filter="url(#b2)" fill="none" stroke="#333" stroke-width="5" d="M548 376 Q557 398 550 418"/>
<ellipse cx="525" cy="632" rx="28" ry="22" transform="rotate(15 525 632)" fill="#3a3a3a" filter="url(#b2)"/>
</g>
<path d="M865.8 274.8 L867.1 273.7 L868.5 272.5 L870.0 271.4 L871.6 270.4 L873.3 269.4 L875.0 268.5 L876.8 267.6 L878.6 266.7 L880.4 265.9 L882.2 265.0 L884.0 264.2 L885.8 263.3 L887.5 262.5 L889.2 261.7 L891.0 260.8 L892.7 260.0 L894.4 259.3 L896.1 258.5 L897.7 257.7 L899.4 257.0 L901.1 256.2 L902.7 255.5 L904.4 254.9 L906.1 254.2 L907.7 253.6 L909.4 253.0 L911.1 252.4 L912.8 251.9 L914.4 251.4 L916.1 250.9 L917.8 250.4 L919.6 250.0 L921.3 249.6 L923.0 249.3 L924.8 248.9 L926.5 248.6 L928.3 248.4 L930.1 248.1 L931.9 247.9 L933.7 247.7 L935.5 247.5 L937.3 247.3 L939.2 247.2 L941.0 247.1 L942.9 247.0 L944.8 246.9 L946.7 246.8 L948.6 246.8 L950.6 246.8 L952.5 246.8 L954.4 246.9 L956.4 247.0 L958.3 247.1 L960.2 247.2 L962.1 247.4 L964.0 247.6 L966.0 247.9 L967.8 248.2 L969.7 248.5 L971.6 248.8 L973.4 249.3 L975.3 249.7 L977.1 250.2 L978.8 250.7 L980.6 251.3 L982.3 252.0 L984.0 252.7 L985.7 253.4 L987.3 254.2 L988.9 255.0 L990.5 255.9 L992.0 256.9 L993.5 257.9 L994.9 259.0 L996.3 260.1 L997.6 261.3 L998.9 262.5 L1000.2 263.8 L1001.4 265.1 L1002.5 266.5 L1003.6 267.9 L1004.7 269.4 L1005.7 270.9 L1006.7 272.4 L1007.6 274.0 L1008.5 275.6 L1009.4 277.3 L1010.1 278.9 L1010.9 280.6 L1011.6 282.4 L1012.2 284.1 L1012.8 285.9 L1013.3 287.7 L1013.8 289.5 L1014.3 291.3 L1014.6 293.1 L1015.0 295.0 L1015.3 296.8 L1015.5 298.7 L1015.7 300.6 L1015.8 302.4 L1015.9 304.3 L1015.9 306.2 L1015.9 308.1 L1015.8 309.9 L1015.6 311.8 L1015.4 313.6 L1015.2 315.5 L1014.9 317.3 L1014.5 319.1 L1014.1 320.9 L1013.6 322.7 L1013.1 324.4 L1012.5 326.1 L1011.9 327.9 L1011.2 329.5 L1010.5 331.2 L1009.7 332.8 L1008.8 334.4 L1007.9 336.0 L1007.0 337.6 L1006.0 339.1 L1005.0 340.7 L1003.9 342.1 L1002.8 343.6 L1001.6 345.1 L1000.5 346.5 L999.2 347.9 L998.0 349.3 L996.7 350.6 L995.4 352.0 L994.1 353.3 L992.7 354.6 L991.3 355.9 L989.9 357.1 L988.4 358.3 L987.0 359.5 L985.5 360.7 L984.0 361.9 L982.5 363.0 L981.0 364.2 L979.5 365.3 L977.9 366.3 L976.4 367.4 L974.8 368.4 L973.2 369.4 L971.7 370.4 L970.1 371.4 L968.5 372.4 L966.9 373.3 L965.3 374.2 L963.6 375.1 L962.0 376.0 L960.4 376.8 L958.7 377.6 L957.1 378.5 L955.4 379.3 L953.8 380.0 L952.1 380.8 L950.4 381.5 L948.7 382.3 L947.0 383.0 L945.3 383.6 L943.6 384.3 L941.9 385.0 L940.2 385.6 L938.5 386.2 L936.8 386.8 L935.0 387.4 L933.3 387.9 L931.6 388.5 L929.8 389.0 L928.1 389.5 L926.3 390.0 L924.5 390.5 L922.8 390.9 L921.0 391.4 L919.2 391.8 L917.5 392.2 L915.7 392.6 L913.9 393.0 L912.1 393.4 L910.3 393.7 L908.5 394.1 L906.7 394.4 L904.9 394.7 L903.1 395.0 L901.3 395.3 L899.5 395.5 L897.7 395.8 L895.9 396.0 L894.1 396.3 L892.3 396.5 L890.5 396.7 L888.6 396.8 L886.8 397.0 L885.0 397.1 L883.1 397.3 L881.3 397.4 L879.5 397.5 L877.6 397.5 L875.8 397.6 L873.9 397.6 L872.1 397.7 L870.2 397.6 L868.3 397.6 L866.5 397.6 L864.6 397.5 L862.7 397.4 L860.8 397.3 L858.9 397.2 L857.0 397.0 L855.1 396.9 L853.2 396.7 L851.2 396.4 L849.3 396.2 L847.4 395.9 L845.4 395.6 L843.5 395.3 L841.5 394.9 L839.5 394.5 L837.5 394.1 L835.6 393.7 L833.7 393.2 L831.9 392.7 L830.2 392.1 L828.7 391.4 L827.4 390.6 L826.3 389.8 L825.6 388.8 L825.2 387.8 L825.1 386.6 L825.3 385.3 L825.8 383.9 L826.5 382.5 L827.5 381.0 L828.6 379.5 L829.9 377.9 L831.3 376.3 L832.8 374.7 L834.4 373.2 L835.9 371.7 L837.5 370.2 L839.1 368.7 L840.6 367.3 L842.1 365.9 L843.6 364.6 L845.0 363.2 L846.4 361.9 L847.8 360.5 L849.1 359.2 L850.4 357.8 L851.6 356.5 L852.7 355.1 L853.8 353.7 L854.7 352.3 L855.6 350.8 L856.4 349.3 L857.2 347.8 L857.8 346.2 L858.3 344.6 L858.8 343.0 L859.2 341.3 L859.5 339.6 L859.7 337.8 L859.9 336.0 L860.0 334.2 L860.1 332.4 L860.2 330.5 L860.1 328.7 L860.1 326.8 L860.0 324.8 L859.9 322.9 L859.8 321.0 L859.6 319.0 L859.4 317.0 L859.3 315.0 L859.1 313.1 L858.9 311.1 L858.7 309.1 L858.6 307.1 L858.4 305.1 L858.3 303.2 L858.3 301.2 L858.2 299.3 L858.2 297.4 L858.3 295.5 L858.4 293.7 L858.5 291.9 L858.7 290.1 L859.0 288.3 L859.4 286.6 L859.9 285.0 L860.4 283.4 L861.0 281.8 L861.8 280.3 L862.6 278.8 L863.5 277.4 L864.6 276.1Z" fill="#585858"/>
<g clip-path="url(#ce)">
<ellipse cx="925" cy="318" rx="58" ry="34" transform="rotate(-24 925 318)" fill="#4a4a4a" filter="url(#b4)"/>
<path filter="url(#b4)" fill="none" stroke="#262626" stroke-width="8" d="M826 380 L860 374 L900 372 L940 360 L975 340 L995 316"/>
<path d="M865.8 274.8 L867.1 273.7 L868.5 272.5 L870.0 271.4 L871.6 270.4 L873.3 269.4 L875.0 268.5 L876.8 267.6 L878.6 266.7 L880.4 265.9 L882.2 265.0 L884.0 264.2 L885.8 263.3 L887.5 262.5 L889.2 261.7 L891.0 260.8 L892.7 260.0 L894.4 259.3 L896.1 258.5 L897.7 257.7 L899.4 257.0 L901.1 256.2 L902.7 255.5 L904.4 254.9 L906.1 254.2 L907.7 253.6 L909.4 253.0 L911.1 252.4 L912.8 251.9 L914.4 251.4 L916.1 250.9 L917.8 250.4 L919.6 250.0 L921.3 249.6 L923.0 249.3 L924.8 248.9 L926.5 248.6 L928.3 248.4 L930.1 248.1 L931.9 247.9 L933.7 247.7 L935.5 247.5 L937.3 247.3 L939.2 247.2 L941.0 247.1 L942.9 247.0 L944.8 246.9 L946.7 246.8 L948.6 246.8 L950.6 246.8 L952.5 246.8 L954.4 246.9 L956.4 247.0 L958.3 247.1 L960.2 247.2 L962.1 247.4 L964.0 247.6 L966.0 247.9 L967.8 248.2 L969.7 248.5 L971.6 248.8 L973.4 249.3 L975.3 249.7 L977.1 250.2 L978.8 250.7 L980.6 251.3 L982.3 252.0 L984.0 252.7 L985.7 253.4 L987.3 254.2 L988.9 255.0 L990.5 255.9 L992.0 256.9 L993.5 257.9 L994.9 259.0 L996.3 260.1 L997.6 261.3 L998.9 262.5 L1000.2 263.8 L1001.4 265.1 L1002.5 266.5 L1003.6 267.9 L1004.7 269.4 L1005.7 270.9 L1006.7 272.4 L1007.6 274.0 L1008.5 275.6 L1009.4 277.3 L1010.1 278.9 L1010.9 280.6 L1011.6 282.4 L1012.2 284.1 L1012.8 285.9 L1013.3 287.7 L1013.8 289.5 L1014.3 291.3 L1014.6 293.1 L1015.0 295.0 L1015.3 296.8 L1015.5 298.7 L1015.7 300.6 L1015.8 302.4 L1015.9 304.3 L1015.9 306.2 L1015.9 308.1 L1015.8 309.9 L1015.6 311.8 L1015.4 313.6 L1015.2 315.5 L1014.9 317.3 L1014.5 319.1 L1014.1 320.9 L1013.6 322.7 L1013.1 324.4 L1012.5 326.1 L1011.9 327.9 L1011.2 329.5 L1010.5 331.2 L1009.7 332.8 L1008.8 334.4 L1007.9 336.0 L1007.0 337.6 L1006.0 339.1 L1005.0 340.7 L1003.9 342.1 L1002.8 343.6 L1001.6 345.1 L1000.5 346.5 L999.2 347.9 L998.0 349.3 L996.7 350.6 L995.4 352.0 L994.1 353.3 L992.7 354.6 L991.3 355.9 L989.9 357.1 L988.4 358.3 L987.0 359.5 L985.5 360.7 L984.0 361.9 L982.5 363.0 L981.0 364.2 L979.5 365.3 L977.9 366.3 L976.4 367.4 L974.8 368.4 L973.2 369.4 L971.7 370.4 L970.1 371.4 L968.5 372.4 L966.9 373.3 L965.3 374.2 L963.6 375.1 L962.0 376.0 L960.4 376.8 L958.7 377.6 L957.1 378.5 L955.4 379.3 L953.8 380.0 L952.1 380.8 L950.4 381.5 L948.7 382.3 L947.0 383.0 L945.3 383.6 L943.6 384.3 L941.9 385.0 L940.2 385.6 L938.5 386.2 L936.8 386.8 L935.0 387.4 L933.3 387.9 L931.6 388.5 L929.8 389.0 L928.1 389.5 L926.3 390.0 L924.5 390.5 L922.8 390.9 L921.0 391.4 L919.2 391.8 L917.5 392.2 L915.7 392.6 L913.9 393.0 L912.1 393.4 L910.3 393.7 L908.5 394.1 L906.7 394.4 L904.9 394.7 L903.1 395.0 L901.3 395.3 L899.5 395.5 L897.7 395.8 L895.9 396.0 L894.1 396.3 L892.3 396.5 L890.5 396.7 L888.6 396.8 L886.8 397.0 L885.0 397.1 L883.1 397.3 L881.3 397.4 L879.5 397.5 L877.6 397.5 L875.8 397.6 L873.9 397.6 L872.1 397.7 L870.2 397.6 L868.3 397.6 L866.5 397.6 L864.6 397.5 L862.7 397.4 L860.8 397.3 L858.9 397.2 L857.0 397.0 L855.1 396.9 L853.2 396.7 L851.2 396.4 L849.3 396.2 L847.4 395.9 L845.4 395.6 L843.5 395.3 L841.5 394.9 L839.5 394.5 L837.5 394.1 L835.6 393.7 L833.7 393.2 L831.9 392.7 L830.2 392.1 L828.7 391.4 L827.4 390.6 L826.3 389.8 L825.6 388.8 L825.2 387.8 L825.1 386.6 L825.3 385.3 L825.8 383.9 L826.5 382.5 L827.5 381.0 L828.6 379.5 L829.9 377.9 L831.3 376.3 L832.8 374.7 L834.4 373.2 L835.9 371.7 L837.5 370.2 L839.1 368.7 L840.6 367.3 L842.1 365.9 L843.6 364.6 L845.0 363.2 L846.4 361.9 L847.8 360.5 L849.1 359.2 L850.4 357.8 L851.6 356.5 L852.7 355.1 L853.8 353.7 L854.7 352.3 L855.6 350.8 L856.4 349.3 L857.2 347.8 L857.8 346.2 L858.3 344.6 L858.8 343.0 L859.2 341.3 L859.5 339.6 L859.7 337.8 L859.9 336.0 L860.0 334.2 L860.1 332.4 L860.2 330.5 L860.1 328.7 L860.1 326.8 L860.0 324.8 L859.9 322.9 L859.8 321.0 L859.6 319.0 L859.4 317.0 L859.3 315.0 L859.1 313.1 L858.9 311.1 L858.7 309.1 L858.6 307.1 L858.4 305.1 L858.3 303.2 L858.3 301.2 L858.2 299.3 L858.2 297.4 L858.3 295.5 L858.4 293.7 L858.5 291.9 L858.7 290.1 L859.0 288.3 L859.4 286.6 L859.9 285.0 L860.4 283.4 L861.0 281.8 L861.8 280.3 L862.6 278.8 L863.5 277.4 L864.6 276.1Z" fill="none" stroke="#202020" stroke-width="5" filter="url(#b2)" opacity=".75"/>
</g>
<g fill="none" stroke-width="1" shape-rendering="crispEdges" transform="scale(0.25)">
<path stroke="#e6001c" stroke-width="4" d="M0 0m2437 329l-11-29m2 70l-14-19m204 25l6-26m65 45l11-29m7 36l12-29m-2 37l10-29m-99 85l-2-12m154-16l10-29m0 46l8-25m-6 13l11-29m36 47l12-29m-983 89l-11-31m418-3l-28-15m319 21l-6-13m350 14l11-29m33 45l11-30m-1174 90l-20-26m77 1l-16-28m34 21l-14-29m125 57l5-32m255 42l-27-16m39-16l-28-15m384 24l-2-12m281 5l2-11m73 10l6-20m-1206 81l-22-25m491 5l-28-16m41 25l-25-16m146 5l-16-15m195 40l-7-16m15 30l-8-16m40 1l-4-15m127-15l0-12m47 50l1-13m39-4l1-12m65 36l1-11m136 0l4-10m116-16l10-24m3 28l11-24m-4 14l11-28m26 56l13-22m-4 8l15-28m1 34l16-29m9 46l18-26m-1504 50l-22-24m47 13l-20-25m48 62l-19-25m43-3l-17-27m123 23l-18-26m305 22l-28-16m110 42l-19-14m83 27l-18-15m102 15l-16-17m28 10l-15-17m53-1l-12-18m69 41l-8-22m15 1l-7-19m78 34l-1-21m86 14l2-17m9 18l3-17m92 24l5-13m72 20l5-11m341-34l21-25m-1546 112l-22-23m39-13l-22-24m112 38l-19-24m247 12l12-30m123 40l-29-14m267 15l-16-18m30 30l-19-17m28-6l-15-18m78 59l4 11m21-39l-12-23m26 24l-8-25m19 38l2 14m17-32l-5-25m9 10l-5-23m14 23l-4-23m8 39l-2-25m4 32l-1 16m13-28l-3-24m41 21l2-23m24 27l2-23m17 33l5-23m8 30l6-24m12 28l8-23m23 34l11-21m14 4l8-17m23 9l7-15m-1131 52l-25-21m103 58l-21-22m42 3l-22-20m28 19l-20-22m320 19l10-30m2 42l-1-32m33 32l-13-30m44 8l-26-19m124 10l-20-14m74 25l-20-13m88 17l-20-16m44 35l-22-17m70 7l7 7m4-5l7 8m16-10l6 9m-5-25l5 11m13-1l6 11m56 1l3 12m31-37l0 15m113-1l-10 13m63-31l11-20m12 24l13-17m45 56l15-14m289 9l9-8m13-10l9-8m110-16l30-10m-1673 95l-25-20m49 12l-24-21m52 17l-22-23m33 13l-21-23m93 56l-24-12m190-19l-23-15m51 35l-24-13m24-5l-22-18m138 0l-10-28m27 54l-18-21m112 11l-20-14m48 34l-21-12m149-4l-23-13m33 36l-24-12m38-13l-24-14m43 13l10 0m203-3l-1 8m181-11l-16 8m18 9l-17 6m23-12l-17 6m53-6l18-14m-3 35l20-12m-17 7l18-12m10-20l12-11m81 9l8-8m269 26l15-7m14-14l27-8m-12 22l30-7m-1709 53l-27-18m31 33l-26-19m35 19l-26-19m49-6l-25-20m106 18l-24-19m33 63l-22-21m44 4l-24-16m75 28l-18 17m60-25l-14 23m54-10l-18 19m74-46l-25-4m33 32l-24 3m235-45l-21-13m27 9l-21-13m60 34l-20-12m86 28l-21-11m44-26l-22-11m24 58l-22-9m79-30l-26-9m62 36l13-7m123 6l6-3m25-7l3-1m1 13l3-3m-2 12l3-4m186-36l-15 4m44 36l-17-1m28-32l-17 2m29 7l-18 1m77 18l22-6m97-29l10-7m-9 6l9-8m-1413 86l-28-15m40 19l-28-15m31-11l-28-16m44 15l-26-18m67 52l-25-18m48 5l-26-18m41 21l-25-20m112 0l-23-5m49-3l-16 19m81 17l-14 25m100-29l-23 7m33-5l-24 4m41-42l-24-7m318 23l-21-9m140 1l12-11m71 34l10-11m148 12l-2-7m33-11l-5-5m162 23l-18-5m50-13l23-5m-16 20l23-2m414-21l27-7m-11 19l31-10m-1773 46l-29-14m116 42l-21-2m28-34l-26-18m26 38l-25-4m31 8l-19 1m98-4l5 20m100-31l-13 26m32 4l-20 22m45-28l-19 19m23-15l-20 18m101-20l-24 1m249-34l-20-11m196 9l11-15m8 33l10-17m126 39l8-16m26-25l4-9m124 37l-9-13m73 3l-16-9m61 22l-16-11m32-3l-17-8m24 2l-18-6m35-1l24 2m-12 10l22 2m15 3l17 0m13-21l15-2m43 43l11-2m38-39l10-2m16 33l10-2m16-5l10-2m33 5l11-3m180 11l32 5m6 0l32-5m-1857 49l-32-9m125 13l-19-12m57-14l13 14m39-11l11 17m53-25l-2 22m50-16l-13 23m62-11l-26 12m41-9l-26 17m35-6l-23 10m41-6l-22 11m56-45l-23 7m35-19l-24 5m189 15l-21-12m66 15l-21-9m97 16l-19-9m69-21l-20-5m175 30l8-20m-5 0l9-18m289 54l-10-18m38-21l-15-12m54 19l22 9m54-19l16 1m133 16l10-1m-6-7l10-1m187 26l19 3m-2-2l22 0m3-14l29 1m25-15l32 4m325 26l-3-25m40 19l-2-27m33 33l1-23m26 19l2-25m-2271 64l-32-7m33 22l-32-7m103-15l-30-11m61 41l12-1m4-11l17 5m78-9l12 16m78-28l-21 18m31-14l-24 15m24 9l-28 8m82-25l-30 6m42-33l-22 10m33 14l-23 5m23-23l-23 8m125-8l-24-5m173 43l-19-12m209-17l-17-2m149-2l8-20m-1 28l-14 17m102-3l3-21m29 32l2 23m32-29l-3-21m79-10l-9-18m25 16l-10-18m249 37l10 0m408 18l31 10m-23-30l32 5m85 18l-11-23m170-23l-2-20m230 28l12-22m37 59l16-16m-2449 23l-32-8m34 44l-32-8m47-10l-30-11m40 8l-29-13m87 39l-19-19m200 13l-18-16m108 10l-29-6m36-21l-30 1m56 11l-21-1m27-18l-22 2m43 8l-23 2m71 18l-23-6m55-23l-23-7m31 25l-23-9m422 12l-11 2m65-2l-8 9m102-31l-1 21m21-12l1 20m132-23l11 15m102 4l9 5m33-28l10 4m4-5l10 2m-4 20l9 3m15 3l9 2m141-26l11 1m151 31l29 10m41-38l29 13m12-22l29 15m36-11l33 5m-32 11l32 7m19-2l-13-22m100 38l-3-6m96 0l-3-9m82-1l0-12m-2206 44l-33-5m97 11l-30-8m218 38l-3-22m60 24l-18-21m33-10l-24-14m27 33l-23-16m55 8l-27-13m35 8l-28-13m36-4l-30-6m145 11l-23-7m35-2l-23-8m157 27l-20-10m399 28l-1 6m79-2l2 7m131-13l6 6m114-26l7 4m547 8l-23-10m53-17l-14-14m165 35l-5-11m132 32l8-4m6-28l8-4m66 8l6-5m-3 29l6-5m45-24l6-5m6 11l5-6m15 22l5-6m96-21l22-11m-6 37l25-9m-2430 32l-31-3m56 1l-4-21m17 52l-12-24m209 13l-21-20m43 1l-24-19m150 21l-23-9m502 37l-4 2m137-24l2 6m9-4l2 6m92-20l4 6m28 31l4 5m1-41l5 6m81-6l6 5m154 2l9 3m11-12l9 3m30-2l10 3m-3 2l10 4m495 14l10-5m2 3l11-4m68 15l10-4m12-6l9-4m12 23l8-5m-8-28l8-4m22 10l7-4m0 36l6-6m-2-27l7-4m37 20l5-6m1-10l6-5m-5-6l6-5m-5 37l5-7m55 11l4-7m13-22l4-7m3 18l4-7m86-2l10-4m-2349 57l-31-4m47-7l-31-2m49 17l-31-2m80 13l-15-25m37 25l-14-24m45 28l-15-25m19 29l-16-25m41-6l-5-24m18 28l-14-24m31 42l-8-23m12 39l-10-23m19-13l-15-27m29 41l-13-19m335 32l-19-10m80 2l-17-8m504 19l4 5m832-35l11-5m25 34l11-6m-9-30l10-5m3 28l11-5m-5-17l10-5m3 6l10-5m32 22l9-5m-7-1l9-6m17 8l8-6m1-9l8-5m26 2l7-6m-1 20l6-7m47 4l5-7m18 23l3-9m39 24l3-10m7-26l3-9m1 34l3-10m0 19l3-10m10-26l4-9m-1 27l3-9m61-7l11-2m59 27l26 0m-2511 48l-32-2m49 1l-31-6m61-7l-30-6m56-1l-29-9m42 4l-30-7m52 9l-30-5m53 13l-30-3m61-5l-30 0m83 35l-21-15m50-1l-15-20m78 34l-14-22m335 13l-20-7m275 17l-6 0m269-9l3 5m489-38l25 20m56-19l28 17m14 15l26 19m-2-31l30 13m35-15l30 13m-14 6l-27 1m73-11l11-6m3-2l11-6m-8 19l12-7m24-23l11-6m-4 45l12-7m6-7l11-8m6 5l11-8m16-8l10-7m-10 31l10-8m15 14l10-8m-5-7l10-8m10 29l9-9m50-21l7-9m10-1l7-8m23 4l5-9m7 36l5-10m44 24l3-11m57-28l3-10m8 10l3-10m-2302 62l-31-5m88 27l-29-9m90-11l-29-5m73 28l-26-10m35-14l-25-11m36 6l-23-13m91 30l-16-20m97 15l-19-17m53 17l-22-14m171 13l-22-10m401 27l-3 1m227-28l3 5m350-4l16 15m327 3l27 18m-8-25l29 15m-4-2l-23 0m28 8l-21 2m32 0l-19 1m25-3l9-9m4-13l11-8m2 20l11-9m21 14l10-10m11 3l11-9m1 31l10-10m-7-1l10-10m14-1l10-10m11-10l10-9m0 51l9-11m48 9l7-12m22-20l6-11m14 33l5-12m19-4l5-12m-1 29l4-13m22-7l4-12m26 7l5-11m37 29l4-12m5-6l4-12m36 12l12 5m-2135 62l-24-14m102 15l-21-16m72 5l-22-15m246 35l-20-17m255-22l-12-6m462 16l5 7m190 0l18 21m227-36l25 20m10 11l23 22m119-15l-23-6m27-12l-25-2m27-13l-25-1m41-5l-21 1m34 30l-13 6m34-39l11-9m12 35l11-10m-8 2l10-10m6 39l10-11m47-14l8-12m19 30l8-12m-1 14l8-12m11 1l8-12m-4-20l9-11m10 35l7-12m10 0l7-12m63 43l6-13m28 0l5-13m9-7l5-13m139 6l6 2m-3 16l5 2m64-16l22 13m-2385 48l-31-3m514 22l-15-25m31-7l-15-22m103 46l-14-13m34 9l-14-11m92 4l-12-6m116 26l-5-1m32-27l-3 1m109-9l3 5m335 33l15 28m204-24l19 26m-11-64l19 26m31-2l20 25m180-11l26 20m82-29l-9 7m43-41l9-12m1 38l8-12m27-13l9-12m11 42l7-13m-6 24l-4 12m54-36l8-12m-5 22l7-13m22-7l7-13m31 5l6-13m14 12l6-13m-4 39l3 10m96 3l3 4m29-41l5 4m70 14l13 13m2-28l13 13m3-11l19 16m-2280 27l-28-10m32 49l-30-1m328 5l-25-18m27 19l-25-17m57-7l-23-20m54 35l-21-23m23 5l-20-24m22 49l-23-22m25-10l-20-23m34 54l-19-25m23 12l-18-25m62-5l-10-28m31 56l-13-23m93 28l-7-17m22-3l-11-12m101 23l-9-6m1003-13l24 22m170-22l-7 9m230 21l1 4m21-21l2 4m-2057 49l-30 11m39-2l-29 15m203-33l-26-9m54 38l-27-9m103 0l-28-14m72 19l-26-18m33 16l-26-18m61 5l-18-25m30 26l-17-25m23 26l-19-24m94 42l1-26m12 20l3-26m31 6l3-21m12 26l1-19m27-1l-5-13m160 18l-3-2m133-5l6 8m34 6l7 12m309-7l16 28m240-11l21 25m63-27l21 24m2-36l22 24m470-13l9 23m1-28l10 22m-2036 2l-29 14m47-21l-30 1m39 26l-29 14m136-21l-25-11m97 14l-29-9m77 0l-30-11m48 3l-28-15m38 46l-30-9m43 2l-29-12m60 12l-27-13m77 25l-19-17m90-15l8-24m7 20l12-22m0 21l12-21m-8 58l20-11m-14-15l15-17m14 32l11-12m38 10l0-7m485 20l11 30m4-64l12 30m456-7l20 25m4-38l-10 17m42 3l-7 24m242-30l0 20m40-23l3 21m-1799 3l-29 13m131 2l-27-8m72 25l-30-6m58-19l-31-4m91-1l-30-6m33 12l-31-3m126 1l-14-9m20 29l-12-4m18 2l-10-4m32 2l3-3m-2-7l3-8m55 13l21-3m8 2l13-4m33 4l4-6m2 27l6-6m3-34l2-6m2 8l2-6m579 32l11 30m18-37l14 29m185-12l20 26m-12-23l17 28m-5-50l21 25m49-35l21 25m-7-21l18 27m264-39l2 27m-1657 32l-30 14m41-2l-31 10m40 4l-32 7m146-23l-31 3m38-25l-31 2m35 31l-31 6m42 4l-30 10m43-36l-30 8m68-7l-27 11m38-25l-28 6m46-1l-24 10m36 8l-16 21m96-21l13 18m-9-43l18 8m2 30l11 15m122-40l15-13m-9 30l19-14m35 24l26-17m-20 12l28-15m-9 21l28-16m130-6l16 28m39-30l15 29m53-26l16 28m119-8l13 30m17-53l13 30m144-30l16 28m15-21l17 28m-1191 15l-33 3m44-23l-31 1m44 15l-30 2m98-11l-29 10m111 14l-21 24m37-58l-21 22m45 6l-14 27m40-14l-12 21m17-34l-11 23m18-31l-6 25m10-34l-4 25m16 5l-6 20m43-59l10 19m28-6l5 9m143-5l26-17m45 25l28-17m-11 23l30-13m90-1l14 29m-493 14l-12 28m87-33l-7 13m28 0l-6 8m214-28l28-17m-3 56l28-17m-17-18l28-17m-4 56l28-16m-18-26l31-9m16 31l9 30m33-31l12 30m12-31l15 30m258-7l15 32m-1-41l15 32m-978 14l-28 0m78-3l-27 2m221-2l-14 4m267-24l26-17m281 43l22 27m60-54l17 30m34-37l14 32m-256 52l36-2m10-3l36 4m-794 51l-37 1m40-15l-36-1m49-12l-35 1m251 0l-27 0m317-1l7-3m87 3l19-5m41 2l33-3m-740 83l-39-2m72-28l-38 0m55 33l-38-1m85-3l-38 0m279 0l-7 0m365-37l30-11m-4 52l39-4m-717 18l-39 0m641 24l19-7m-7-19l22-9m-654 74l-41-1m88-1l-40-1m86 1l-40 1m93 1l-39-2m278-2l-2 0m47 2l1 0m194-18l20-8m-31 73l17-6m18 17l27-11m-462 28l-37 1m328 0l5-2m141 18l25-10m-485 71l-41 0m-175 80l-46 3m142-2l-45 2m142-2l-43 4m190-2l-31 4m267-5l7 2m-585 42l-46 7m49 8l-46 9m366 5l-36 10m390-48l20 4m12 5l27 5m-764 26l-46 10m62 36l-44 15m65-48l-45 11m52 20l-44 15m62-56l-45 11m144-12l-45 10m188 31l-39 15m308-57l4 10m92-11l13 10m24-8l19 10m-6 35l21 14m7-47l29 11m-743 47l-44 16m159-2l14 46m19-62l-3 26m7-9l0 21m1-35l1 37m11-29l-20 17m22-23l-6 26m9-6l-12 19m17-36l0 29m17-31l-17 21m19-22l-26 27m26-27l-7 27m10-30l-23 32m27-14l-8 12m28-25l-9 32m23-26l-14 22m31-12l-24 27m344-33l6 19m26-15l8 19m96-35l26 17m-25 1l25 20m32-28l45 12m-827 32l-42 20m145-36l16 12m-14-7l10 13m1-35l7 25m15 7l-11 17m28-17l8 18m-2-39l-13 9m14 12l-1 14m2-33l8 27m0-26l1 18m0 11l-4 11m14-17l-5 7m28-26l-5 19m23-24l-14 9m34 9l-11 24m11-35l-16 28m17-7l-19 9m41-5l-16 10m17-16l-22 13m25-16l-34 11m40-42l-15 21m24 4l-26 7m28-30l-23 23m36 0l-26 13m27-18l-35 13m54 1l-37 25m131-27l-7 24m331-52l28 21m-730 45l-40 25m220-34l-3 4m10 4l-20 7m36-21l-13 8m34 6l-31 2m40 0l-27-4m31-8l-13 8m29-17l-31 3m31 9l-23 15m26 6l-42 6m45-16l-51 15m60-37l-21-1m23-6l-32 3m123 29l-21 30m86-32l-5 29m253-23l19 29m3-62l25 26m-8 5l31 28m-547 26l-20-19m21 13l-8-6m43-21l-15 4m18-10l-27 6m28 26l-24-3m25-28l-29 8m34 30l-21-11m26-22l-14-3m17 12l-26 4m27-20l-36-4m39 27l-38 12m48 0l-47-6m48 16l-34-4m38-30l-26-4m29 27l-42-5m114-2l-34 32m134-33l-3 34m31-32l0 34m30-33l1 34m192-25l24 35m-680-5l-36 30m147-18l-34 32m87-38l-34 32m35-24l-15-12m15-14l-8 1m17-2l-22-14m36 10l-17-9m120 27l-33 33m222-29l1 39m35-40l4 39m28-40l7 39m64-15l16 41m4-64l18 40m-542 2l-34 32m53-37l-34 33m69-27l-33 33m43-34l-33 33m37-33l-33 33m50-30l-33 33m141-38l-29 36m92-36l-7 42m18-11l-6 45m21-56l-5 44m21-53l-4 43m122-45l5 44m-5-51l5 43m25-43l8 43m54-51l15 43m-10-36l16 43m1-60l19 42m-310 24l-12 45m79-48l-3 46m64-45l3 47"/>
<path stroke="#800080" stroke-width="4" d="M0 0m2426 300l-12-29m0 80l-13-19m223 18l6-26m70 42l11-29m8 36l11-30m-3 38l10-28m-111 101l-2-12m166-33l10-29m-2 50l8-25m-3 9l11-28m37 46l12-30m-1006 88l-11-31m401 13l-28-15m341 23l-5-12m366-3l11-29m33 44l11-30m-1205 94l-20-26m81-1l-15-29m35 21l-13-30m143 55l6-32m222 58l-27-16m38-15l-28-15m410 27l-2-13m285 7l2-11m77 1l6-19m-1234 75l-21-24m484 13l-27-17m43 26l-25-15m155 5l-16-14m204 38l-8-15m15 29l-7-17m43 3l-4-16m131-11l0-13m48 50l1-13m39-3l0-12m66 37l2-11m138 1l4-10m122-30l11-24m3 28l11-23m-4 9l11-29m28 63l14-23m-3 3l15-29m2 34l16-28m11 48l19-26m-1545 52l-22-24m49 12l-21-25m50 62l-18-26m44-4l-17-26m122 23l-17-26m294 32l-28-15m119 43l-19-14m84 26l-18-14m104 12l-15-17m28 10l-15-17m56-2l-11-17m72 36l-8-22m16 4l-8-19m85 32l-2-21m90 18l2-18m10 19l4-17m93 28l4-13m73 22l4-10m358-49l21-25m-1589 114l-22-24m39-13l-22-23m115 37l-19-24m278 6l12-29m82 55l-30-14m281 11l-16-18m27 31l-18-17m31-7l-15-19m97 89l4 12m5-74l-12-23m30 22l-7-25m28 77l2 15m10-72l-4-25m8 12l-4-23m14 23l-4-23m10 37l-3-26m6 74l0 16m10-68l-3-25m46 23l3-23m23 27l1-23m21 33l4-24m10 30l6-23m14 28l8-22m26 35l10-21m12 8l9-17m21 11l7-14m-1163 45l-25-21m107 57l-22-21m42 4l-22-20m30 17l-21-21m351 10l10-31m-9 41l-1-32m21 34l-12-30m30 19l-25-20m129 16l-20-14m74 26l-20-14m88 15l-21-15m43 33l-21-16m98 30l7 7m4-4l7 7m15-8l6 10m-6-24l5 10m14 0l5 10m54 3l3 12m28-34l-1 15m104-3l-10 14m84-65l11-20m14 27l12-18m48 60l15-13m283 14l9-7m13-11l9-8m131-18l31-9m-1729 84l-25-20m50 11l-24-21m54 15l-21-22m33 12l-22-22m91 66l-24-12m191-22l-23-14m50 36l-24-14m26-9l-22-17m150-11l-11-28m20 61l-17-22m109 19l-19-15m46 37l-20-12m146-5l-23-14m32 38l-25-12m39-15l-24-14m77 27l9-1m193 6l0 9m165-12l-16 7m17 8l-16 6m22-12l-16 6m87-26l19-14m-2 37l19-12m-18 7l19-13m3-18l13-12m76 13l9-8m275 27l16-8m25-14l27-7m-9 22l30-7m-1766 42l-27-19m32 33l-25-19m34 19l-26-18m50-8l-25-20m107 19l-24-20m35 62l-22-21m42 9l-23-16m80 61l-18 16m64-18l-15 24m51-15l-18 20m67-70l-25-3m34 38l-25 2m239-60l-21-12m27 8l-20-13m60 35l-21-12m86 29l-21-10m43-27l-22-10m24 59l-23-9m76-30l-26-9m101 38l13-7m116 10l5-4m23-4l4-2m0 12l3-3m-2 11l3-3m168-29l-16 4m43 31l-17-1m28-29l-18 3m29 5l-18 1m117 11l21-5m86-31l10-6m-10 4l9-7m-1450 78l-29-15m41 19l-28-15m31-12l-27-16m45 13l-26-17m68 51l-26-19m48 6l-26-18m42 19l-24-19m113 14l-22-5m55 21l-15 19m82 23l-13 25m90-47l-24 7m33-8l-24 4m41-53l-24-6m321 20l-21-9m173-1l12-11m69 34l10-12m136 17l-1-6m29-10l-5-4m149 22l-18-5m91-13l24-6m-17 24l23-3m418-25l28-6m-8 15l31-10m-1833 42l-29-13m124 53l-21-2m23-50l-25-18m26 52l-24-4m36 13l-20 0m123 16l4 21m83-26l-14 26m26 0l-21 22m47-31l-18 20m21-17l-19 18m96-37l-24 0m253-45l-20-11m227 5l11-14m7 30l10-16m124 39l7-16m23-18l4-10m111 34l-8-13m65 7l-15-9m60 20l-16-11m31 0l-18-8m24 4l-18-6m77 7l24 1m-14 11l22 2m10 1l18-1m10-22l15-1m39 42l11-1m37-40l10-3m16 34l10-2m16-5l10-1m34 3l11-3m201 19l32 5m6-10l33-5m-1922 45l-31-9m137 10l-18-12m88 12l14 14m36-8l11 17m40-20l-2 22m39-15l-13 23m49-22l-27 11m42-3l-25 16m37-12l-23 11m42-6l-22 10m55-48l-24 8m35-22l-24 5m192-2l-20-12m65 18l-21-10m99 17l-18-10m67-16l-20-5m203 15l8-19m-4 1l10-19m269 55l-10-17m33-16l-16-12m92 40l22 9m48-27l16 0m127 15l11 0m-7-8l10-1m196 30l18 3m2-5l23 1m9-14l28 1m29-12l32 4m290-3l-4-25m42 17l-2-26m36 36l0-23m28 17l1-25m-2304 82l-32-7m33 22l-32-6m105-20l-30-10m103 50l12-2m9-4l16 5m74 2l12 15m45-25l-22 19m29-18l-24 15m20 2l-27 7m79-26l-29 5m49-28l-22 11m32 8l-23 4m23-19l-22 8m123-21l-24-4m178 35l-18-13m210-6l-16-1m173-21l7-20m-22 65l-13 18m118-42l3-21m28 76l3 22m26-72l-3-20m73-8l-9-19m24 17l-10-17m269 54l10 0m429 28l31 10m-22-35l33 5m41-10l-10-22m178-21l-3-19m245 25l11-21m42 64l15-17m-2496 32l-31-9m33 45l-31-7m48-14l-30-11m41 6l-29-13m97 33l-18-20m200 17l-19-16m98 20l-28-6m34-14l-29 0m64 10l-21-1m26-15l-23 2m43 8l-23 1m71 11l-24-7m56-23l-24-6m32 22l-23-8m434 22l-11 3m68 4l-7 8m108-18l-2 21m24-13l0 20m143-28l11 14m100-5l10 6m33-30l10 4m4-7l11 2m-6 21l9 3m15 2l9 3m143-28l10 1m170 40l29 11m41-36l30 14m11-21l29 15m40-21l32 4m-32 14l32 6m-26-30l-14-21m111 53l-4-6m97-3l-2-10m84-3l0-11m-2239 50l-32-5m99 8l-31-7m246 23l-2-23m44 26l-17-21m26-3l-25-15m29 32l-23-17m51 12l-28-12m35 7l-28-13m34 3l-31-6m153 10l-24-7m36-3l-23-8m160 25l-20-9m418 43l-1 6m82-1l2 7m135-14l6 6m115-28l8 4m516-6l-22-11m61-20l-13-15m173 39l-5-10m145 38l8-3m6-29l8-4m64 7l6-4m-3 28l6-4m45-25l6-6m5 11l6-6m14 22l5-7m113-25l22-11m-3 39l26-9m-2487 38l-31-3m83-17l-3-20m8 48l-11-25m199 18l-22-19m41 1l-24-19m151 31l-23-8m521 47l-3 2m142-20l2 6m9-4l2 6m94-20l4 7m28 29l5 5m1-40l5 6m82-7l6 4m157 1l9 3m11-12l10 3m30-2l10 4m-3 2l11 4m494 5l11-5m2 4l10-4m68 15l9-3m12-7l9-4m11 22l8-5m-8-27l9-4m20 10l8-5m-2 35l7-7m-2-24l7-5m35 19l5-6m2-9l6-5m-5-6l6-4m-6 34l4-6m55 10l5-7m12-22l5-6m2 17l4-7m92 1l11-3m-2391 56l-30-3m46-6l-31-2m49 17l-30-2m95-10l-16-24m39 25l-14-24m44 27l-14-25m17 29l-16-25m52-5l-6-23m10 27l-15-23m38 42l-7-23m9 39l-9-23m13-17l-15-27m31 49l-12-20m328 42l-19-9m82 3l-18-7m526 31l3 4m840-44l11-5m25 33l10-6m-9-29l11-6m3 29l10-6m-5-16l11-5m2 6l10-5m31 22l9-6m-7-1l9-5m16 7l8-6m1-8l8-6m25 2l7-6m-2 19l6-7m46 4l6-7m15 21l4-9m38 23l4-10m6-25l3-8m1 32l3-9m0 18l3-10m11-25l3-8m-1 26l4-10m68 1l11-2m74 29l26 0m-2569 46l-33-2m51-3l-31-6m62-7l-30-7m57-3l-29-9m41 6l-29-7m51 11l-30-5m53 15l-30-4m61-1l-29 0m91 20l-21-15m56-6l-15-20m79 32l-13-21m328 27l-20-8m289 25l-6-1m278-3l3 4m511-22l26 20m58-22l27 17m13 17l26 19m2-37l30 12m35-14l29 14m-70-7l-27 2m111-19l12-7m2-1l12-7m-8 19l11-6m24-23l12-6m-4 44l11-7m6-8l11-8m6 5l11-7m15-8l11-8m-11 31l11-8m14 14l10-9m-5-6l9-8m10 28l9-10m48-20l8-8m9-1l7-9m21 4l6-9m6 35l6-10m41 23l3-12m57-26l4-10m7 10l3-10m-2336 67l-31-6m90 24l-29-8m90-8l-30-4m77 22l-27-11m37-14l-26-10m39 3l-24-13m99 23l-17-20m95 18l-20-17m51 20l-21-14m170 17l-21-10m419 38l-3 2m233-25l3 4m363 7l16 14m338 7l27 18m-6-28l29 15m-56-17l-22 0m29 10l-22 1m35 0l-18 1m52-13l8-9m7-12l11-7m2 18l10-9m21 13l10-10m12 4l10-9m1 30l10-11m-7 0l11-9m13-2l9-10m12-9l10-9m-1 49l8-12m47 9l6-12m22-19l6-12m13 33l6-12m18-4l6-11m-3 27l5-12m21-7l4-12m27 8l4-12m37 29l4-12m5-6l4-11m44 28l12 6m-2171 42l-24-14m105 13l-22-16m72 6l-22-15m248 33l-20-17m263-11l-12-5m479 28l6 7m202 14l19 21m233-37l26 20m7 13l24 22m72-43l-23-7m25-7l-24-3m26-11l-25 0m45-4l-20 2m41 34l-13 6m58-54l11-9m12 34l10-9m-8 1l11-10m5 38l9-11m46-15l9-12m18 30l8-13m-1 15l8-13m11 2l9-12m-4-19l9-11m8 34l7-13m10 1l7-12m62 42l6-12m27-1l4-13m10-7l4-12m141 20l6 3m-4 15l6 2m80-5l21 12m-2437 33l-31-3m530 0l-16-26m32-3l-15-23m104 56l-14-12m34 10l-14-11m94 9l-13-5m124 30l-6-2m35-24l-3 2m115-6l2 4m348 57l16 27m207-25l19 26m-11-64l19 26m32-3l20 26m186-17l26 20m47-42l-10 8m62-61l9-11m0 37l9-12m27-13l9-12m9 41l7-13m-17 49l-5 13m67-61l7-13m-5 22l7-12m22-8l7-12m30 4l6-13m14 12l5-13m-6 62l2 11m97-4l4 3m30-40l5 4m78 23l14 13m1-28l14 12m8-7l19 16m-2327 1l-28-10m30 58l-31 0m334-13l-25-17m27 19l-26-17m60-10l-23-20m56 32l-21-23m24 4l-20-23m19 50l-23-21m28-12l-21-23m36 52l-20-24m25 11l-18-26m70-7l-10-29m28 62l-12-23m98 34l-7-17m18 2l-12-13m104 30l-9-5m1036 14l23 22m140-35l-7 9m238 16l2 5m21-22l2 5m-2089 55l-30 10m40 3l-28 16m205-58l-26-8m53 37l-27-9m102-5l-28-13m74 14l-26-18m33 16l-26-17m69-3l-18-26m31 27l-18-26m22 28l-19-24m114 40l1-27m14 21l3-26m31 11l3-21m10 28l1-19m21 5l-6-12m163 28l-2-1m141 4l6 8m35 10l8 12m317 9l17 28m244-14l20 25m64-28l22 25m2-37l22 24m457-14l8 23m3-29l10 22m-2075-6l-29 15m46-35l-30 0m40 40l-28 15m139-47l-25-12m93 17l-29-10m76-1l-29-11m49-1l-28-15m36 52l-30-9m44-1l-29-12m62 11l-27-13m85 21l-18-16m116-23l8-23m11 21l11-22m1 22l11-21m1 68l20-11m-19-21l14-17m11 37l10-12m28 15l1-7m495 57l11 31m5-65l12 30m464-12l21 25m-27-46l-10 16m45 11l-7 24m249-34l1 20m42-22l3 22m-1831-6l-28 14m132-20l-28-8m70 27l-30-7m57-16l-31-3m92-4l-31-6m33 15l-30-4m142-4l-15-9m23 34l-13-3m21 1l-10-4m45 3l3-4m-2-11l3-7m73 17l20-2m1 0l13-4m24 2l3-6m5 27l5-6m0-34l2-7m2 9l1-7m589 69l12 31m20-39l15 29m190-15l19 26m-14-21l18 28m-2-53l21 25m49-35l20 25m-9-19l19 27m247-39l3 26m-1690 20l-29 14m39-6l-31 10m39 1l-31 7m146-27l-32 2m39-25l-32 2m36 35l-31 6m43 8l-30 11m43-39l-31 7m72-3l-28 11m38-30l-27 6m49 3l-24 10m44 19l-17 20m126-23l12 18m-3-53l18 9m-5 36l11 15m126-68l16-12m-6 28l20-15m41 22l27-18m-19 15l28-14m-9 19l27-16m119 38l16 28m38-29l14 29m55-27l16 29m116-7l13 30m17-53l12 30m148-32l16 29m16-22l17 28m-1241-10l-33 4m46-26l-30 0m44 17l-30 2m99-3l-30 9m120 29l-20 23m36-59l-21 21m52 12l-13 28m41-21l-12 21m18-32l-11 23m23-29l-6 24m12-33l-5 24m15 1l-6 21m59-61l9 18m24-15l4 8m165-30l25-17m48 25l28-18m-9 28l31-12m73 40l15 30m-520 12l-12 29m92-49l-7 12m29-4l-6 8m248-53l29-16m-4 55l28-18m-17-17l29-18m-5 58l29-15m-16-20l32-9m-7 70l8 30m37-31l11 30m16-31l15 29m258-4l15 31m-1-40l14 31m-1020-17l-29 1m80-2l-27 2m234 0l-14 5m307-46l26-17m277 87l23 27m54-51l17 30m31-35l15 32m-235 18l35-2m11 3l35 5m-866 47l-37 1m41-17l-36 0m50-11l-36 0m260 0l-28 1m352-5l8-4m98 2l18-5m56 4l34-4m-813 85l-40-2m74-26l-37 0m54 32l-39-1m86-2l-37-1m309 1l-7 0m402-48l31-12m4 60l39-5m-795 23l-39 1m699 16l19-8m-4-20l21-9m-716 82l-41-1m89-1l-41-1m87 3l-39 1m93-2l-39-2m315 0l-3 0m51 2l1-1m213-25l19-8m-33 75l16-7m29 13l27-11m-526 40l-37 2m370-4l5-2m161 10l25-9m-551 80l-40 0m-181 83l-46 4m143-4l-45 2m144 0l-43 5m202-3l-32 4m306-7l7 2m-638 47l-47 7m50 10l-46 8m376 7l-36 11m446-55l20 4m19 6l28 4m-838 32l-45 10m63 41l-45 15m65-52l-46 12m54 23l-44 16m61-61l-46 11m145-13l-44 9m193 37l-39 14m351-61l4 10m101-11l12 9m31-7l19 10m-4 39l21 15m15-51l29 11m-816 52l-44 16m217 28l14 45m2-81l-3 26m10-14l0 21m2-19l0 38m-9-50l-20 17m36-14l-7 27m4-14l-12 19m29-26l0 30m0-40l-17 21m10-16l-26 27m45-27l-7 28m-6-26l-22 32m41-34l-7 13m26-6l-8 31m17-35l-13 22m20-7l-24 27m374-41l5 19m29-15l8 20m114-38l25 18m-25 3l25 19m52-35l44 12m-913 40l-42 21m203-45l17 11m-21-5l11 13m-3-23l6 24m-2 0l-12 17m48-16l9 18m-24-48l-14 10m27 16l-1 14m11-20l9 27m-8-35l1 17m-5 5l-3 11m12-21l-6 7m29-14l-5 19m14-34l-13 8m36 25l-10 24m5-31l-16 28m14-26l-19 8m44-3l-16 10m11-13l-23 13m14-18l-34 10m59-31l-15 21m13-10l-25 7m30-14l-24 22m34-9l-25 13m17-18l-36 13m53 13l-38 26m162-29l-8 25m367-56l28 21m-798 49l-40 24m257-54l-4 3m-6 8l-19 6m42-19l-12 9m15-1l-30 2m43-6l-27-4m45 4l-14 8m12-22l-32 4m40 20l-24 15m8-3l-42 5m36-6l-51 14m90-52l-20-2m11-1l-31 3m133 56l-22 29m103-32l-6 29m278-23l20 30m8-66l25 26m-2 7l31 29m-598-22l-21-20m34 27l-7-6m35-11l-14 3m5-7l-26 7m30 16l-24-2m20-18l-29 8m42 11l-21-10m33-15l-14-2m5 18l-26 4m17-28l-36-4m37 43l-38 11m39-17l-48-5m62 17l-34-5m46-29l-26-4m13 26l-42-5m122 35l-34 33m165-32l-3 34m34-32l0 34m31-33l1 34m215-24l24 35m-740-10l-36 30m149-16l-35 31m88-37l-34 32m54-68l-15-12m22-1l-9 1m4-17l-21-13m40 14l-17-9m104 69l-33 34m256-24l2 39m37-40l4 39m31-40l7 38m73-12l15 41m7-65l17 39m-593-5l-34 32m53-36l-33 32m69-26l-33 33m43-34l-34 32m38-32l-33 33m50-30l-33 34m145-36l-30 37m115-31l-7 43m19-9l-6 45m22-57l-5 44m22-54l-3 44m130-45l5 44m-5-52l5 43m28-43l8 44m61-52l15 42m-9-35l15 44m5-62l20 41m-342 28l-12 46m88-48l-3 47m70-45l3 47"/>
<path stroke="#1c00e6" stroke-width="4" d="M0 0m2414 271l-11-29m-2 90l-14-19m243 11l6-26m75 39l11-29m8 35l12-29m-5 39l10-29m-123 118l-2-12m178-50l10-28m-4 53l9-25m-1 6l11-29m38 45l12-29m-1029 86l-10-31m383 29l-28-15m364 26l-6-13m383-19l11-28m33 42l11-29m-1236 97l-20-26m86-4l-16-28m38 19l-14-29m163 52l5-32m190 74l-27-16m37-14l-28-15m436 29l-2-12m289 8l2-11m81-7l6-20m-1261 71l-22-25m479 21l-28-16m46 27l-26-16m165 7l-17-15m213 38l-7-16m15 28l-8-16m47 3l-4-15m135-9l0-12m49 49l1-13m38-2l1-11m67 37l1-12m141 3l3-10m130-44l10-23m4 28l11-24m-4 4l11-28m31 68l13-22m-1-4l14-28m4 34l15-29m15 51l18-26m-1585 54l-23-24m51 11l-20-25m52 61l-19-25m46-5l-17-27m122 24l-18-26m284 43l-29-16m129 45l-19-14m85 26l-18-15m107 10l-16-18m29 11l-16-17m61-2l-12-18m76 32l-8-21m16 6l-7-19m90 30l-1-21m93 21l2-17m12 19l3-16m94 31l5-12m72 24l5-11m374-63l20-24m-1631 114l-22-23m39-13l-22-24m118 37l-19-25m309 2l12-30m40 71l-29-14m294 7l-17-17m26 31l-19-16m35-10l-15-18m116 119l5 11m-12-108l-13-23m36 20l-8-25m38 117l2 14m4-111l-5-25m9 14l-5-23m15 23l-3-23m10 34l-2-25m8 115l-1 15m8-108l-3-24m52 24l2-24m22 28l2-23m23 32l5-23m11 30l6-24m16 30l8-23m28 37l11-20m10 11l8-17m20 14l7-15m-1195 39l-25-22m110 58l-21-22m41 6l-22-21m31 17l-20-22m381 1l10-30m-20 39l-2-31m11 35l-13-30m18 29l-26-19m135 21l-19-14m73 26l-20-13m87 13l-20-16m42 33l-22-17m127 54l6 8m5-5l7 8m14-6l7 9m-8-23l5 11m14-1l6 11m51 4l3 11m24-30l0 15m94-4l-10 13m105-98l12-20m14 29l13-17m50 64l14-14m278 21l8-8m14-11l10-8m152-19l30-10m-1784 74l-25-21m51 11l-24-21m57 14l-22-23m33 13l-21-23m88 77l-24-12m192-24l-23-15m49 37l-23-13m27-13l-22-18m161-21l-10-27m13 66l-18-21m108 25l-20-14m46 39l-21-11m144-8l-23-13m30 39l-24-12m39-17l-24-13m110 39l10 0m183 15l-1 8m150-13l-16 8m17 6l-17 6m23-12l-17 6m123-46l18-14m-1 39l20-12m-19 6l18-12m-2-18l12-11m73 16l8-9m283 28l15-7m37-14l27-8m-6 23l29-7m-1822 30l-27-18m34 32l-26-19m34 20l-25-19m50-9l-24-20m107 19l-24-19m37 60l-23-21m42 14l-24-16m86 93l-18 17m67-11l-14 23m47-18l-18 19m60-92l-24-4m33 44l-24 3m242-75l-21-13m28 8l-21-13m60 36l-20-12m85 31l-21-11m42-26l-23-11m24 61l-22-9m72-30l-26-9m140 40l12-7m109 13l6-3m21-3l3-1m0 10l3-2m-2 10l3-4m149-21l-15 4m41 26l-17-1m27-25l-17 2m28 4l-17 1m155 5l22-6m74-31l10-7m-11 4l10-8m-1489 71l-28-15m41 19l-27-16m31-12l-28-16m47 12l-27-18m69 50l-25-18m47 6l-25-18m43 18l-25-20m116 29l-23-4m63 44l-16 20m85 28l-14 25m80-65l-23 7m32-11l-24 3m41-62l-24-7m324 18l-22-9m207-3l12-11m67 33l11-11m124 22l-2-7m26-7l-5-5m136 22l-18-5m133-14l23-5m-17 26l23-2m423-29l27-7m-4 12l32-10m-1894 39l-29-14m132 65l-21-2m19-66l-26-19m28 67l-25-5m41 18l-19 1m146 36l5 20m64-20l-13 25m18-3l-20 22m49-33l-19 19m21-18l-20 18m92-55l-25 1m258-57l-21-11m259 2l11-15m6 29l10-17m121 40l8-15m19-13l4-9m99 30l-9-13m59 11l-16-9m60 18l-16-11m29 3l-17-8m23 6l-18-6m119 14l24 2m-16 11l22 3m6-3l17 0m8-23l15-2m35 43l12-2m35-41l11-2m15 34l10-2m16-4l11-2m34 2l12-3m221 27l32 5m7-20l32-5m-1985 41l-32-8m151 6l-19-12m121 38l13 15m34-6l11 17m27-15l-2 22m28-14l-13 24m35-35l-26 12m43 1l-26 17m40-18l-23 10m43-6l-23 11m54-51l-23 7m34-24l-24 5m196-19l-21-12m65 20l-21-9m102 16l-19-9m66-12l-20-5m231 1l7-20m-1 2l9-18m250 56l-10-18m27-10l-15-12m129 61l22 9m42-36l16 1m122 14l10-1m-7-8l11-1m203 34l19 3m6-7l22 0m15-13l29 1m32-9l32 4m254-32l-3-25m43 16l-1-27m37 40l1-22m28 14l2-24m-2338 99l-33-7m34 23l-32-7m107-23l-29-11m144 59l12-1m13 2l17 5m69 12l11 16m12-22l-21 18m26-21l-24 15m17-6l-28 8m78-29l-30 6m57-23l-23 10m32 2l-22 5m23-16l-23 8m122-33l-24-5m184 27l-19-12m213 5l-17-2m197-39l8-21m-43 104l-14 17m135-80l3-21m28 119l2 23m21-115l-4-21m68-6l-9-18m23 18l-10-18m289 72l10 1m450 37l30 11m-19-41l32 5m-1-37l-11-23m186-17l-2-20m258 24l12-22m45 69l16-16m-2543 39l-32-8m34 46l-32-8m50-17l-30-12m42 5l-29-12m108 25l-19-19m200 20l-18-17m88 31l-29-5m34-9l-30 1m73 8l-21-1m24-12l-22 2m42 7l-23 2m70 2l-23-6m55-23l-23-7m32 21l-23-9m446 34l-11 2m72 10l-8 9m114-6l-1 21m25-14l1 19m153-33l11 15m99-14l9 5m34-31l10 5m5-10l10 2m-7 22l8 3m16 2l8 2m145-29l11 0m188 51l30 10m41-32l29 13m11-19l28 15m44-32l33 5m-33 15l32 7m-72-58l-13-22m120 69l-3-6m98-7l-3-9m87-5l0-12m-2271 57l-33-5m101 6l-30-8m274 8l-3-22m30 27l-18-21m19 3l-24-14m30 29l-23-16m46 16l-27-13m34 7l-28-13m31 10l-30-6m159 9l-23-8m36-3l-24-7m164 23l-20-10m437 59l0 5m84 1l1 7m140-15l6 6m117-30l7 5m487-22l-23-10m71-25l-14-14m182 43l-5-11m158 46l8-4m6-29l8-4m62 7l7-5m-4 29l6-5m45-26l5-5m6 10l5-5m14 20l5-6m130-30l22-11m1 41l25-9m-2543 44l-31-3m111-34l-4-21m1 44l-12-24m189 23l-21-20m38 2l-23-19m151 42l-23-9m541 58l-4 2m148-16l1 6m10-4l1 6m97-19l4 6m29 28l4 5m2-39l5 5m83-8l6 5m160-1l9 3m12-12l9 3m31-1l11 3m-3 3l10 4m495-4l10-4m2 4l11-4m66 16l10-4m11-7l9-4m10 21l8-6m-7-25l8-5m20 10l7-4m-2 32l6-6m-1-23l8-4m32 17l6-6m2-8l6-6m-5-4l6-5m-8 33l5-7m55 10l4-8m13-20l4-7m2 17l4-7m99 5l10-4m-2431 57l-31-4m46-4l-30-2m49 17l-31-2m110-32l-15-25m40 26l-14-24m44 26l-15-25m16 29l-16-26m62-2l-5-24m0 28l-14-24m45 43l-8-23m8 39l-10-23m8-21l-14-27m33 56l-13-19m322 52l-19-10m83 6l-17-8m546 43l4 5m847-54l11-5m24 32l11-6m-9-29l10-5m3 28l11-5m-5-16l10-5m2 6l10-5m30 21l9-5m-7-1l8-6m16 7l8-6m1-8l8-5m24 1l6-6m-2 18l6-7m46 4l5-7m14 19l3-9m39 22l3-9m6-24l3-9m1 32l3-10m0 18l2-10m12-23l4-9m-1 25l3-9m76 8l11-3m89 32l26 0m-2628 44l-32-2m52-7l-31-6m63-8l-30-6m58-6l-29-8m41 7l-30-7m51 13l-30-5m53 16l-29-3m61 2l-30 0m100 5l-21-15m62-11l-15-20m81 31l-14-22m322 41l-19-7m302 31l-6 0m287 1l3 5m534-7l25 20m60-25l28 17m11 19l27 19m5-44l30 13m34-13l30 13m-127-18l-27 1m150-27l11-6m3-2l11-6m-8 19l12-7m24-22l11-7m-4 44l12-7m5-9l10-7m7 5l10-8m16-8l10-7m-10 30l10-8m14 13l10-8m-6-6l10-8m9 26l9-9m47-19l7-9m9-1l7-8m20 3l5-9m7 34l5-10m39 21l3-11m58-25l3-10m7 10l4-10m-2371 71l-31-5m92 21l-28-9m88-3l-29-5m79 16l-26-10m37-14l-25-11m40 1l-23-12m105 15l-16-20m91 21l-19-17m49 23l-22-14m171 21l-22-9m438 49l-3 1m239-22l3 5m376 16l15 15m350 10l27 17m-4-30l29 16m-107-33l-23 0m30 11l-21 2m38-1l-19 1m79-23l9-9m9-10l12-8m0 17l11-9m20 12l9-10m13 5l11-10m0 29l10-10m-6 1l10-10m12-2l10-10m12-8l9-10m-2 47l9-11m44 8l7-12m21-19l6-11m13 32l5-13m19-2l5-12m-3 27l4-13m21-6l5-12m26 8l5-11m36 28l4-12m5-5l3-12m53 46l12 5m-2207 23l-25-13m108 10l-21-16m71 7l-22-14m250 30l-19-16m270 0l-12-6m497 41l5 7m216 28l18 22m241-39l25 21m6 14l23 23m26-73l-23-6m24-4l-25-2m26-9l-25-1m50-1l-21 1m49 39l-14 6m83-69l11-8m11 33l11-10m-8 1l10-10m4 37l10-11m45-16l8-12m18 29l8-12m-1 14l8-12m12 2l8-11m-3-19l9-10m6 31l7-12m10 1l8-12m60 42l6-13m25-1l5-13m9-6l5-13m142 36l6 2m-4 15l5 2m96 5l22 13m-2490 17l-31-3m545-23l-15-25m32-1l-15-22m105 66l-14-13m34 12l-13-11m94 15l-12-6m130 34l-5-1m37-21l-3 1m120-3l3 5m361 79l15 28m211-27l19 27m-11-65l19 26m33-3l20 25m192-22l26 19m11-53l-9 7m80-79l8-12m1 37l8-12m28-13l8-11m8 39l7-12m-29 74l-4 12m78-86l8-12m-6 22l7-13m22-7l7-13m29 4l6-13m13 12l6-13m-10 86l3 10m98-11l3 4m32-40l5 3m87 33l13 13m2-29l13 13m14-4l19 16m-2374-25l-27-11m26 69l-30-1m339-29l-25-18m26 20l-25-17m62-13l-24-20m59 29l-21-24m25 5l-20-24m16 53l-22-22m29-13l-20-23m36 51l-19-25m26 10l-18-25m78-11l-10-28m26 67l-13-24m104 41l-7-18m13 7l-11-12m106 37l-9-6m1068 42l24 22m109-48l-7 8m247 13l1 4m22-21l2 4m-2121 61l-30 11m42 8l-29 15m208-81l-26-9m52 37l-27-10m101-8l-29-14m77 10l-26-18m33 17l-26-18m77-11l-18-25m31 26l-17-25m20 29l-19-24m134 37l1-26m16 21l4-26m30 16l3-21m8 30l1-18m14 11l-5-13m166 40l-3-2m150 14l6 7m37 15l7 13m327 24l16 28m248-17l21 25m65-28l21 24m3-37l22 23m443-14l9 23m4-30l10 22m-2114-13l-28 14m44-49l-29 1m41 54l-29 14m143-73l-25-11m89 18l-29-9m76-3l-30-10m51-6l-28-15m34 58l-30-10m45-3l-29-13m64 11l-28-14m95 19l-19-17m143-29l8-24m14 23l12-22m0 23l12-20m9 77l20-11m-25-27l15-18m6 43l11-12m18 20l0-7m506 95l12 30m5-65l12 30m473-17l20 25m-57-55l-10 17m48 18l-7 24m257-38l0 20m45-20l2 21m-1861-13l-29 13m133-41l-27-7m67 27l-30-6m56-13l-32-4m93-6l-30-6m33 17l-31-3m158-10l-14-8m24 39l-12-4m23 1l-10-4m58 3l4-3m-3-15l3-8m90 23l21-3m-7-1l12-4m15 0l4-6m6 27l6-6m-4-35l1-6m2 8l2-6m599 106l11 30m24-40l14 29m195-18l20 26m-16-19l17 27m2-55l20 24m49-34l21 25m-11-17l18 27m232-40l2 27m-1721 7l-30 15m38-11l-31 10m39-2l-32 7m146-32l-31 3m38-26l-31 2m36 39l-31 6m44 13l-29 10m41-42l-30 8m74 0l-27 12m38-36l-28 5m53 8l-24 10m51 29l-16 21m154-26l13 17m2-61l18 8m-12 43l10 15m132-95l15-13m-1 26l19-14m49 18l26-17m-17 18l28-15m-10 18l28-17m107 83l16 29m36-29l15 29m56-27l16 28m113-5l14 30m15-53l13 30m151-33l16 28m17-22l17 29m-1291-35l-33 3m49-29l-31 1m45 18l-30 2m99 4l-29 10m129 42l-21 24m36-62l-21 22m60 18l-14 27m43-27l-12 21m19-30l-10 23m27-28l-6 25m13-34l-4 25m13-3l-6 20m74-63l10 19m18-26l5 9m185-56l26-17m50 24l28-17m-6 33l30-13m58 83l14 29m-546 12l-11 28m96-65l-7 13m30-9l-7 9m284-78l28-17m-4 54l28-17m-16-18l28-17m-4 60l28-16m-12-13l31-8m-30 108l9 30m39-31l12 30m19-32l16 30m257-3l14 32m-1-41l15 32m-1064-48l-28 0m81 0l-28 2m248 3l-13 4m346-67l27-17m273 131l22 27m49-48l17 31m29-34l14 32m-214-16l36-2m10 10l36 4m-939 44l-37 0m42-17l-37-1m51-10l-35 1m267 0l-27 0m387-9l7-3m109 0l19-5m71 5l33-3m-886 86l-39-1m76-25l-38 0m53 31l-38-1m87-2l-38 0m340 1l-7 1m118-2l1 0m321-59l30-11m13 66l40-4m-874 28l-39 0m757 8l19-7m-2-22l22-9m-779 90l-41 0m89-2l-40-1m88 5l-40 1m94-5l-39-1m351 1l-2 0m286-32l20-8m-37 76l17-6m39 8l27-10m-590 52l-37 1m412-7l4-2m182 3l25-10m-616 90l-41-1m-186 88l-46 3m144-5l-45 2m146 3l-43 4m213-3l-31 5m344-10l8 2m-693 52l-46 7m50 11l-46 9m386 9l-36 10m502-61l20 4m27 6l27 5m-910 37l-46 10m64 46l-44 15m63-55l-45 11m55 28l-45 15m60-65l-45 11m146-15l-45 10m199 41l-40 15m395-66l4 11m109-13l13 10m37-7l19 9m-2 45l20 14m24-54l29 11m-889 57l-44 16m275 57l15 46m-16-101l-2 26m12-19l0 21m2-2l1 37m-30-70l-20 17m49-4l-6 26m-2-21l-11 19m40-15l0 29m-17-48l-16 21m0-10l-26 26m64-25l-7 27m-21-21l-23 32m57-53l-8 12m26 13l-9 32m13-45l-14 22m10-2l-25 27m404-49l6 19m31-14l8 19m131-39l26 17m-26 5l25 20m71-43l45 12m-1000 49l-42 20m262-54l16 12m-26-4l10 13m-7-12l7 25m-21-8l-11 16m68-14l8 18m-46-56l-13 9m39 21l-1 14m21-7l8 27m-15-45l1 18m-9-2l-4 11m10-25l-5 7m29-2l-4 18m5-44l-14 9m40 40l-11 24m0-27l-16 29m11-47l-18 9m46-2l-16 10m4-10l-22 13m2-21l-35 11m79-21l-15 21m3-24l-26 6m32 2l-23 23m32-19l-26 13m7-18l-35 13m50 26l-37 25m191-29l-7 24m402-59l29 20m-867 53l-39 25m292-76l-3 4m-22 10l-20 7m50-17l-13 8m-2-7l-31 2m47-12l-27-4m58 16l-13 9m-7-27l-31 3m47 32l-23 15m-11-13l-42 6m27 2l-51 15m121-69l-21-1m1 3l-32 2m143 83l-21 30m118-33l-5 29m303-22l19 29m14-69l25 26m4 10l30 28m-649-70l-20-19m47 40l-8-5m29-3l-15 4m-6-4l-27 6m33 8l-24-3m15-7l-28 8m49-7l-21-11m40-6l-14-3m-7 25l-26 4m7-36l-36-4m35 58l-38 12m29-34l-47-6m75 18l-35-4m55-29l-26-3m-3 24l-42-5m130 73l-33 32m195-30l-2 34m36-32l0 34m32-33l0 35m239-24l24 35m-800-15l-36 30m150-15l-34 32m88-37l-34 32m73-112l-15-12m28 12l-8 1m-9-31l-22-14m45 19l-17-8m88 111l-32 33m290-18l1 39m40-40l4 39m34-41l7 39m81-10l16 41m8-67l18 40m-645-13l-35 32m55-36l-34 33m70-26l-34 33m43-35l-33 33m38-32l-33 33m50-29l-32 33m147-32l-29 36m137-24l-7 42m20-6l-6 45m23-58l-5 44m24-54l-4 43m139-44l5 44m-5-53l5 43m31-42l7 43m69-53l15 43m-9-34l16 43m9-64l19 42m-373 32l-12 45m97-46l-3 46m76-44l3 47"/>
<path stroke="#e6001c" stroke-width="4" d="M0 0m2451 326l-10-30m71 25l1-32m-170 92l-23-22m120-18l-12-26m23 66l-11-16m55-28l-5-27m70 27l7-31m38 46l12-30m4 43l11-29m15 40l10-29m-332 81l-23-18m54 3l-19-18m96 10l-13-15m101 21l-8-14m66-4l-3-16m-268 78l-23-17m117 40l-14-15m-476 64l-5-32m350 24l-28-16m770 23l12-30m-1190 64l-18-27m141 25l-8-31m30 27l3-32m612 25l-3-13m314 9l2-11m26 2l5-18m102 40l10-24m20 26l10-27m-8 21l11-29m34 40l11-31m-1347 62l-22-25m249 25l3-32m217 53l-27-16m41-7l-27-16m201 20l-14-15m113 18l-9-16m24 29l-9-16m133 19l-3-15m126-20l0-12m31 53l2-12m201-7l4-10m-1005 37l-6-31m202 61l-29-15m47 18l-24-16m217 5l-16-16m24 2l-15-16m197 27l-3-19m11 42l-1-23m13-10l-2-18m2 36l-2-20m6 33l-3-22m39 7l0-19m126-5l2-13m13 19l4-12m1 38l3-14m47 20l3-12m1-9l3-11m145 5l5-9m4 38l5-9m192-14l14-16m-10 39l12-11m4-18l19-20m-6 39l21-16m-1565 58l-24-22m37 5l-25-21m74 35l-19-24m128 39l-19-23m353 12l-25-13m272 24l-18-20m32 17l-17-21m32 15l-16-21m46 9l-14-22m28 29l-12-24m14 17l-11-24m19 43l4 13m166-43l4-21m13 35l8-21m2 15l6-20m0 50l10-23m-10 7l9-21m30 33l10-19m55-12l5-13m-2 35l8-13m52-12l5-10m2 45l6-11m63-27l5-9m81 44l6-9m45-4l7-8m146 14l25-11m-1633 71l-26-20m32 6l-25-21m124 28l-23-19m375 20l-10-30m152 10l-20-13m201-4l-18-20m282 27l-9 14m12-19l-10 14m26 6l-11 12m15-30l-11 13m25 5l-12 12m19-3l-13 11m20-32l13-22m-11 48l-14 10m36-11l-15 9m71-41l10-14m99 54l9-9m65-29l7-8m256 20l26-9m-11-1l31-9m-24 25l31-8m-29 23l31-7m-1703 55l-27-19m78-3l-25-20m134 33l-24-11m86 15l-22 10m268-24l-17-22m155 12l-20-12m40 46l-21-11m27 2l-21-12m36 18l-21-11m69 3l-22-12m60 11l-24-12m31-8l-24-13m62 16l10 1m29 14l10 1m255-31l-11 10m127-2l18-15m3 42l20-12m36 13l14-10m-10-18l11-10m370 28l28-6m-12-13l32-7m-30 37l30-6m-1740 62l-28-17m44-11l-27-19m156 43l-23-21m210 12l-23 9m33-9l-24 6m254 3l-21-13m248-4l11-8m147 19l5-3m45 11l1-4m1-38l1 2m24 9l-1 1m114 22l-13 0m108-30l-18 2m49 11l20-9m8 26l19-6m50-23l11-7m322 44l28-7m-19-29l30-5m-1735 54l-27-17m56 21l-26-17m102 43l-24-20m33 13l-24-20m29-3l-23-21m30 38l-22-22m39 30l-23 6m27-12l-27 1m47-14l-24-16m60 39l-19 15m54-11l-12 27m68-36l-17 21m72-48l-24 7m156 32l-22-12m303-4l-26-3m49-17l12-11m27 28l13-12m68 16l9-10m33 19l6-10m316-24l23-4m-19 37l23 0m28-12l16-3m38 10l12-4m26-17l11-5m54-3l10-6m195 2l26-8m5 17l31-8m-1788 69l-30-12m40 17l-29-14m111 28l-28-16m94-8l7 18m45-7l1 21m57-48l-17 19m49 14l-19 19m21-45l-13 26m28-26l-16 24m17-19l-14 25m14-15l-17 23m26-46l-15 23m20-25l-16 22m257 21l-20-13m171-6l-20-9m114 9l-24-2m27-12l-26 1m44 3l11-15m5 11l11-15m239 31l-2-13m19-12l-6-9m199 40l21 2m75-30l13-3m81 27l10-2m217-7l24-1m44 12l33-4m-1842 47l-31-11m33-7l-31-10m46 23l-30-12m51 27l-29-12m49 7l-29-13m37 30l-29-13m33-31l-28-15m40 45l-28-15m32 6l-28-14m94 27l14 14m183-48l-20 18m49 1l-23 12m69-19l-24 5m74 10l-24-4m30-23l-24-6m108 9l-22-12m124 26l-19-12m35 33l-18-12m188-2l-21 2m45-18l-24 8m39 13l-20 11m55 1l8-20m85 15l5-20m69 0l-1-18m96 7l-11-15m24 30l-10-17m21 29l-12-16m83 6l21 10m13 7l16 6m484-27l32 4m389 5l0-26m-2245 52l-32-8m48 43l-30-10m81-11l-29-12m40-6l-29-12m36 18l-30-11m35 40l-10-14m257 14l-27 10m99-11l-23 3m147-22l-22-11m256 5l-17-6m103 2l-17 2m65-9l-19 8m109-7l6-20m107 42l-1-21m25 28l-2-21m7 5l-3-20m31 26l-6-20m21-1l-7-19m21 51l12 20m4-30l15 19m8-12l15 15m-3-42l-13-15m26 33l16 13m-6-30l18 13m-11-1l16 11m20-10l15 7m21 7l11 5m490 0l32 7m151-8l-10-22m67-3l-9-24m223 38l2-8m95-4l13-22m0 46l13-15m-2363 42l-30-10m50 6l-30-9m51 29l9-7m54-3l16 0m70-15l-7 11m125 2l-30-3m559-15l-13 3m17 6l-12 3m231-6l2 21m24-24l8 20m11-13l7 18m128-3l9 6m248-17l11 0m316 6l31 8m-22-15l32 6m-32 15l31 11m43-35l-12-24m55 53l-3-5m46-16l-3-6m59 5l-2-7m261 10l7-8m87 24l18-12m-2457 37l-30-9m77 4l-30-10m34 37l-31-7m49-24l-13-21m26 62l-12-23m95-13l16-10m7 26l11-17m117 8l-25-13m35 3l-27-9m28 18l-27-11m62 17l-18-7m24 27l-19-9m135-22l-22-10m163 20l-19-10m107-1l-17-8m244 14l-5 4m103 26l1 7m36-47l2 11m40 24l3 7m17-17l3 8m0-22l4 9m40 4l5 7m17-27l6 8m34 14l6 6m78-17l8 4m13 6l7 3m0-26l8 3m165 9l11 2m401-15l-4-5m52 35l-5-7m111 10l10-4m11 2l9-4m2 13l9-4m-2-8l9-3m35-24l8-4m47 2l7-4m24 3l7-4m4 11l6-5m12 27l6-5m-3 14l5-6m4-19l6-5m17 21l5-6m9 17l4-7m-2370 19l-33-3m34 18l-33-3m38 19l-32-4m36 3l-32-7m45-13l-31-8m71 11l-30-9m44 7l-30-7m46-8l-30-8m57 13l-1-21m20 57l-12-24m195 20l-21-22m55 9l-14-13m24 15l-15-14m58 29l-20-13m42-32l-22-10m121 18l-22-11m656 3l4 7m73 16l5 5m648-8l-22-4m173 25l11-5m21-35l10-4m-9 32l11-4m0-23l10-4m12 44l10-5m-2-26l10-3m1 8l10-4m34 5l9-3m29 18l7-5m3 17l6-6m15-36l7-4m1 12l6-5m26 1l5-5m15 41l5-7m17 7l4-8m5-8l4-7m55-7l5-7m1-4l13-7m90 23l25-6m-2516 74l-33-2m48-20l-31-7m48-1l-30-8m125 19l-31-2m41 12l-30-1m37-10l-17-24m50 17l8-19m34 12l3-21m2 27l2-21m12 34l-7-23m26 31l-13-26m53 2l-17-24m44 36l-13-19m14 7l-13-17m54 11l-17-16m141 39l-22-11m34 5l-22-11m991-6l8 6m409 14l-20-2m36 18l-14-3m52 13l11-6m14-22l11-6m2 34l12-5m18-10l11-5m-2 13l12-5m-3-2l11-6m1-25l11-4m28 17l10-5m54-6l9-5m18 13l7-6m0 36l7-8m34-10l6-8m14 28l5-9m17-7l5-8m108 16l3-10m-2302 45l-29-9m72 0l-30-6m88 25l-29-2m30-21l-30 0m55 5l-28-2m31 32l-26-8m43 8l-24-11m34-32l-21-12m30 41l-17-18m49 25l-12-22m16-9l-10-23m107 32l-18-18m42 30l-21-14m36-13l-21-14m104 31l-22-11m408 39l-7-1m41-16l-5 0m825-17l26 19m110 15l30 12m2-31l-18-2m76 13l12-7m-3 3l11-8m6 5l11-7m35 13l11-7m21 2l10-8m18-17l10-7m30 45l8-10m29-15l7-9m5-3l6-9m-2 25l6-10m127 7l4-11m2 30l4-11m1-3l4-11m12-14l3-10m8 15l3-10m126 48l24 6m-2491 2l-32 0m38 15l-32 1m154 5l-28-9m92 29l-26-11m106-9l-15-21m40 4l-14-22m411 16l-17-7m55 25l-16-6m160-1l-6 0m387-2l6 5m114-3l9 8m-7 12l9 10m62-30l14 11m85-1l22 24m277-14l30 14m-17-19l-27 0m37-2l-23 0m65 14l11-9m28-25l11-8m26 29l10-9m5 12l10-10m5-5l10-9m-4 37l9-11m-4-17l10-9m-10 22l10-10m13-16l10-9m-6 37l9-11m-7-4l9-10m4 11l9-10m7 5l8-10m6 19l8-11m3 34l7-12m0-21l7-11m20 48l6-12m-4-5l6-12m0-3l6-11m3 14l5-12m22 8l5-12m39 33l4-12m197 16l17 7m-2420 28l-32 1m37 14l-32 5m36-38l-31-5m56 37l-30-6m80-12l-28-11m56 25l-27-11m73 14l-25-12m217-4l-23-13m88 33l-23-12m478 2l-3 1m101-2l3 4m31 12l3 5m236-22l7 9m111-38l11 13m155 28l20 25m235-22l27 17m14-20l-25-7m38-4l-22-1m49-13l-16 4m32 23l10-10m-2-23l10-10m25 36l9-11m11 8l9-11m2-4l9-11m5 29l8-12m-3 4l9-11m42 15l7-13m43 16l7-13m7 22l5-13m-4-10l6-13m18 14l6-13m2 36l6-13m9-24l6-13m10 31l5-13m40 6l4-13m108 36l5 2m83-18l21 15m-2393 27l-31 10m178-14l-25-13m72 17l-23-15m151 25l-25-10m588-3l1 4m331 14l10 17m38-36l13 16m191-26l18 27m90 5l19 26m4-23l23 23m130-43l24 22m43-42l-17 2m63 21l-10 9m25-3l-9 9m102-23l7-13m2 25l8-12m2-6l8-13m-3 27l7-13m2 15l6-13m-5-2l7-13m-3 4l7-13m15 32l5-14m13 21l6-13m11 7l6-13m-2 10l7-13m-3 1l5-13m38 13l5-13m96 8l5 5m-2191 47l-31 6m59 5l-31-1m66-13l-27-11m91 12l-25-12m285 23l-24-19m48 5l-21-21m33 45l-19-25m63 26l-15-27m23 46l-12-28m16-5l-12-28m436 30l4 6m83-15l6 8m192 12l11 30m35-22l14 29m408-58l25 21m26-21l24 22m64 9l-6 5m200-40l-2 11m191 1l3 3m63 4l15 22m-2122 21l-27-9m30 33l-28-5m122 12l-26-9m121-31l-26-15m45 40l-27-15m98-8l-22-23m26 15l-22-23m46 61l-22-22m39-1l-16-26m28 29l-10-29m18 50l-13-27m65 21l3-27m1-1l-4-26m145 50l-6-6m238 16l9 12m446-18l17 27m6-50l17 28m304-2l-6 4m198-19l-3 5m95 13l-1 5m95-13l5 15m64-39l9 17m-2013 68l-28 16m173-49l-27-12m201 3l-16-24m75 68l-1-15m35-9l14-19m203 11l6-5m183 8l14 28m158-38l13 30m-5-11l13 30m440-14l20 25m13-67l-23-7m26 16l-22 1m22 35l20 26m62-29l-6 24m38-20l-5 24m25-25l-5 23m48-30l-2 19m133-17l3 26m84-50l6 24m-1833 41l-30 10m101-2l-28-7m97-16l-31-4m47 18l-32 0m43 6l-31 0m59-2l-31-1m106 7l-21 7m118-18l21 1m39-19l8-6m171 38l27-11m19-21l6 20m1023-33l2 27m-1576 43l-30-2m42 8l-31 1m34-8l-31 0m71 2l-31 5m33-13l-31 5m50-20l-31 3m58 26l-27 15m29-40l-30 5m83 8l-20 15m33-9l-15 19m53 3l2 24m23-29l9 21m25-35l15 13m0-36l18 4m93 34l17-13m35 6l26-16m23 16l28-16m498 12l13 30m70-30l16 29m-1181-9l-32 5m56 28l-31 0m76-15l-29 3m47-4l-29 8m46-5l-29 9m83 9l-24 20m26-40l-25 19m29-25l-25 19m33-25l-25 18m25 20l-21 23m23-39l-22 22m35-41l-21 23m65-6l-10 29m259-42l23-17m2 37l28-16m-3-13l29-14m-2 54l29-16m-9-30l30-12m-18 28l31-10m133 40l16 29m302-49l15 30m-1073 28l-32-1m96-13l-27 4m110 10l-23 19m82-20l-13 27m23-21l-10 27m184-55l2-3m178 22l29-16m140-5l15 30m134-11l15 31m30-32l13 32m-936 30l-31 0m166-36l-23 15m49 6l-23 13m407-11l25-15m23 19l25-4m228-19l20 28m-118 37l35 6m-313 29l4-2m191-1l32-4m-443 81l-30 0m415 1l27-8m-16-13l28-11m-680 80l-40 0m61 7l-40 0m299 23l-28 0m363 12l19-7m-646 27l-42 0m44 30l-43 0m28 12l-43-1m134 6l-42 0m88-1l-41 1m473 2l9-3m42 2l13-5m17 7l20-8m-7 8l23-9m-715 82l-45 0m80-32l-44 0m46 35l-45 0m52-3l-45 0m529-1l3-1m41 6l6-2m187-1l45-10m-117 27l22-7m-10 1l25-9m-714 90l-46 4m50-20l-46 1m193 2l-44 3m188-1l-37 4m454 6l30-1m-718 29l-46 7m710 15l21 8m-710 35l-45 12m65 5l-45 13m273-12l-42 13m56-57l-40 11m135-11l-31 11m49 29l-21 14m52-16l-7 14m118-53l2 10m18 34l3 15m92-18l11 14m71-10l25 15m-767 26l-44 17m98-17l-43 19m117-19l-43 19m69-27l20 30m-14-21l3 10m4-17l1 25m15-36l8 23m-7-1l-7 28m9-28l-2 18m6-29l-7 40m9-49l3 31m18-20l-12 37m14-51l-2 25m26-5l-20 20m20-31l-17 20m31-7l-11 20m16-34l-30 33m161-25l-34 19m62-14l-15 19m47-22l-6 19m230-17l11 20m55-24l24 19m-723-4l-43 19m137-23l15 12m-9-11l8 12m10 7l0 23m8-34l-7 11m21 22l-2 16m8-57l-15 18m22-3l-3 12m4-6l-4 7m14-12l-11 29m33-35l-17 21m28-1l-10 15m18-39l-20 16m48 11l-38 9m41-30l-26 15m29 16l-41 12m46-40l-17 26m26-40l-20 16m22 16l-38 14m47-28l-44 22m56-24l-30 21m84-6l-36 24m134-21l-5 24m261-24l19 24m12-23l26 24m6-25l39 20m-763 1l-40 23m52 14l-39 26m56-30l-39 26m262-48l-19 11m21 13l-38 3m38-15l-33 11m36-41l-57 14m61 29l-33-4m37-26l-30-1m31 25l-26 2m27-39l-36-3m38 16l-31 12m33-11l-36 16m39-30l-46 13m48 15l-29 6m30-26l-44 14m45 21l-50 1m52-6l-33 3m239-12l1 29m156-26l14 29m17-31l21 29m-19-35l21 29m-19-43l22 27m-702 40l-38 28m80-18l-37 28m48-39l-37 28m201-36l-27 11m28 2l-19-9m35-7l-35-13m37 27l-39-4m55 14l-25-4m26-35l-45-1m45 43l-16-7m18 6l-47-16m50 2l-24 0m25 7l-24-6m43-21l-29-1m126 19l-14 34m271-36l11 34m-620-2l-37 29m75-29l-36 30m46-8l-36 30m76-26l-35 31m117-54l-4-18m5 15l-10-12m14 1l-16-12m21 29l-34-6m39-9l-24-6m24 33l-23-22m32 13l-18-11m21-9l-20-9m22 29l-17-16m43-2l-30-17m41 19l-30-3m67 25l-33 33m98-34l-26 39m55-41l-7 39m72-36l-2 39m158-41l9 39m3-23l11 40m35-42l18 40m5-78l26 35m-575 22l-34 32m74-19l-33 33m37-28l-33 33m123-31l-32 34m97-22l-29 37m156-58l-2 43m5-43l-1 43m65-42l5 43m55-47l8 43m37-44l11 44m-104 3l6 47"/>
<path stroke="#800080" stroke-width="4" d="M0 0m2441 296l-9-29m81 22l2-32m-195 102l-23-22m131-22l-12-25m24 75l-12-15m62-40l-6-26m83 22l6-30m44 46l11-31m4 45l10-28m15 39l10-29m-365 92l-22-19m57 4l-20-18m103 13l-13-14m106 21l-8-14m71-6l-3-16m-288 77l-24-18m127 43l-14-15m-467 47l-6-32m328 40l-28-17m810 10l13-30m-1221 67l-17-27m150 21l-7-31m40 26l4-33m605 45l-3-13m319 11l2-11m29-5l4-19m108 35l10-23m20 22l11-26m-8 18l11-29m34 38l12-30m-1381 67l-22-24m274 17l4-32m186 69l-28-16m42-7l-27-17m214 22l-15-15m119 17l-9-15m24 28l-8-16m138 20l-3-15m129-17l1-12m32 53l2-12m203-5l3-11m-1014 17l-7-30m180 76l-28-14m51 16l-25-16m226 5l-15-16m24 2l-14-16m208 24l-3-20m13 39l-2-22m13-6l-1-18m1 34l-2-20m5 31l-3-22m42 10l-1-19m129 1l2-13m15 20l3-13m1 37l3-13m47 21l4-12m0-8l2-12m148 8l4-10m5 39l6-9m200-21l15-16m-13 44l11-11m12-27l18-19m-3 42l21-16m-1610 52l-25-22m37 6l-24-21m79 32l-20-25m129 41l-18-24m346 23l-26-13m280 17l-18-19m33 15l-16-21m32 15l-16-21m48 8l-13-22m29 27l-13-24m16 17l-10-24m33 80l3 13m167-77l5-21m16 35l7-21m1 16l6-20m4 47l9-23m-10 9l8-21m32 35l9-19m51-6l6-12m0 34l8-13m49-9l5-11m3 45l6-10m62-26l4-10m83 45l6-8m46-4l7-9m164 12l25-10m-1684 61l-25-20m32 5l-25-21m126 30l-23-20m388 10l-10-30m142 27l-21-13m204-11l-18-20m291 61l-9 14m11-19l-10 13m25 5l-11 13m15-30l-10 14m23 3l-12 13m18-5l-14 10m47-64l13-21m-38 79l-14 10m35-12l-15 9m96-64l10-14m98 59l9-9m63-28l7-8m275 19l27-8m-7-2l30-10m-23 27l32-9m-30 25l32-7m-1762 43l-26-19m79-4l-24-20m134 42l-24-11m88 36l-21 11m272-57l-18-22m153 22l-21-12m40 47l-21-11m27 1l-20-12m35 19l-22-11m69 2l-22-12m58 11l-24-12m31-9l-23-13m95 30l10 0m29 15l11 0m233-21l-12 10m157-27l18-14m5 44l20-11m30 14l13-10m-12-18l11-11m387 33l27-7m-7-13l31-6m-31 37l30-6m-1798 51l-28-16m45-14l-26-18m159 40l-22-21m209 42l-23 10m32-13l-24 6m257-16l-21-12m280 0l12-8m140 24l4-3m42 10l1-3m1-33l0 3m23 7l-2 1m103 21l-14 0m104-28l-18 2m87 0l21-9m6 29l19-6m42-24l11-8m339 45l29-7m-18-27l30-5m-1792 42l-28-16m58 20l-27-17m105 40l-24-21m33 14l-24-21m30-3l-23-21m31 37l-23-22m39 58l-24 7m24-18l-26 1m49-31l-23-15m64 69l-19 14m61 2l-11 27m62-42l-18 21m66-62l-23 7m157 13l-22-13m299 6l-25-4m86-24l12-11m28 27l12-11m65 17l10-10m29 19l6-10m333-18l22-4m-18 41l22-1m22-14l17-3m33 9l12-4m25-18l11-5m53-4l10-5m211-1l25-8m11 17l31-7m-1849 64l-31-12m42 15l-29-13m112 25l-27-15m128 25l7 19m39-5l1 21m39-50l-16 20m46 13l-18 19m26-38l-13 26m25-28l-16 24m19-18l-15 24m12-16l-17 23m28-46l-16 24m20-27l-16 23m253-15l-21-13m172-2l-19-8m109 15l-25-1m26-10l-25 1m80-13l11-16m5 12l11-16m226 34l-3-13m16-8l-6-9m226 51l21 2m67-35l12-2m79 27l10-2m231-6l24-2m53 10l32-5m-1905 41l-31-10m33-7l-31-10m47 21l-29-12m51 27l-29-13m49 7l-28-13m36 30l-29-13m34-33l-27-15m39 45l-28-15m32 7l-29-14m137 55l14 13m149-43l-20 19m46-6l-22 12m67-26l-24 5m74 1l-24-4m30-25l-24-5m110 2l-21-11m126 25l-18-12m35 33l-18-12m185 12l-21 1m42-11l-23 7m42 17l-21 11m84-30l7-20m83 15l5-19m63 1l-1-18m86 10l-10-16m24 29l-10-17m19 30l-12-16m116 32l20 9m9 4l17 6m499-29l32 5m357-26l1-27m-2278 71l-32-9m50 42l-31-10m83-13l-30-11m41-7l-30-12m36 19l-30-11m55 37l-11-15m241 39l-27 9m103-17l-23 2m148-35l-22-11m261 10l-18-6m104 10l-18 1m64-2l-19 9m134-36l6-21m100 42l-1-21m24 28l-2-21m6 6l-3-21m28 27l-5-20m19 0l-7-19m40 90l12 20m7-31l15 18m8-15l15 14m-31-71l-13-16m55 62l16 13m-4-30l18 12m-13-2l17 11m18-14l15 7m17 5l12 6m510 1l31 7m110-37l-10-22m68-5l-8-23m233 53l3-8m105-18l13-23m0 54l13-15m-2406 47l-29-11m49 8l-31-9m91 31l9-7m61 4l16 0m47-4l-6 12m101-13l-30-2m576-10l-13 3m18 6l-12 2m245 13l1 21m31-25l8 19m10-14l8 17m129-14l10 7m249-24l11 0m336 14l32 9m-22-18l33 5m-34 21l30 12m1-71l-11-24m63 72l-4-6m47-16l-2-6m59 4l-2-7m270 9l7-9m98 21l18-12m-2505 40l-31-10m78 4l-29-10m32 40l-30-7m66-38l-12-22m26 61l-13-24m124 1l16-11m2 20l11-17m81 12l-26-13m34 7l-27-9m28 16l-26-12m70 22l-18-6m23 24l-19-9m132-23l-23-10m167 20l-20-10m110 1l-17-7m256 25l-5 5m109 28l1 6m37-42l1 12m42 19l3 7m17-16l3 9m1-22l5 9m40 2l5 7m18-26l7 8m33 12l6 5m80-18l7 3m13 6l8 4m0-27l8 3m168 8l11 2m386-22l-5-4m52 32l-6-7m127 13l9-3m11 1l10-3m1 12l9-3m-2-8l9-4m34-24l9-4m45 2l8-4m23 3l6-5m4 11l7-4m11 26l5-5m-3 13l5-6m5-18l7-4m15 19l5-6m8 16l5-6m-2408 22l-32-4m33 19l-33-3m39 18l-33-4m37 0l-31-6m45-15l-31-8m72 10l-30-8m44 8l-31-6m47-10l-31-7m87-1l-1-20m9 53l-12-25m186 23l-21-21m62 17l-15-12m24 13l-15-14m53 30l-21-12m41-30l-22-9m121 16l-21-11m681 21l3 6m75 15l6 4m620-16l-22-4m206 24l11-4m20-35l10-4m-8 32l10-4m0-23l10-3m12 42l10-4m-2-25l10-4m1 8l9-4m34 6l9-4m27 17l7-5m2 16l7-6m15-34l6-5m1 12l6-5m25 1l6-6m14 40l5-7m16 6l4-7m5-8l4-7m56-7l4-8m10-3l13-8m102 25l24-6m-2573 78l-32-1m49-26l-31-8m49-1l-30-8m124 25l-30-3m41 14l-31-2m51-32l-18-23m76 21l7-19m30 10l3-20m1 26l1-21m4 32l-8-23m21 28l-13-27m49 5l-17-25m48 42l-12-18m13 8l-12-17m49 12l-16-15m135 43l-23-10m35 4l-22-10m1021 10l9 5m380 7l-20-1m42 16l-14-2m77 9l11-6m14-22l11-5m3 34l12-5m17-10l12-6m-2 14l11-5m-3-3l11-5m1-24l11-4m27 16l11-5m52-6l9-5m16 12l8-7m-1 35l7-7m33-11l5-7m14 26l5-9m17-6l4-8m107 14l2-10m-2333 46l-29-8m71 2l-29-5m88 28l-30-2m30-19l-29 0m56 3l-28-2m33 26l-27-8m46 5l-24-11m37-33l-21-11m34 34l-18-18m55 21l-13-23m19-9l-10-23m99 37l-18-17m39 33l-22-13m37-14l-20-14m102 34l-22-11m423 49l-7 0m43-16l-4 0m855 2l27 18m113 9l31 12m-47-45l-18-1m106 7l11-7m-3 2l11-7m6 5l12-7m34 13l11-8m20 2l10-8m18-16l10-7m28 42l8-9m28-15l6-10m5-2l6-9m-2 24l6-9m125 5l3-10m3 29l3-11m2-3l4-10m11-14l4-10m7 15l3-11m147 65l24 6m-2547-4l-33-1m39 17l-33 1m159-5l-29-8m95 26l-25-10m116-20l-15-22m41 4l-13-22m407 31l-17-7m56 26l-15-5m169 4l-6-1m399 4l6 4m117 1l8 7m-6 15l10 9m66-28l14 12m93 11l21 24m286-24l30 14m-74-33l-27-1m41-1l-24 1m100 4l10-9m29-24l11-9m25 29l11-10m4 12l10-10m5-4l10-10m-5 36l10-10m-4-16l10-10m-10 22l10-10m13-15l10-8m-7 34l8-11m-6-3l9-10m4 11l8-10m7 5l8-11m6 19l7-11m3 33l6-12m1-20l7-11m19 47l6-12m-4-5l7-11m-1-3l6-11m2 13l6-11m21 7l5-11m38 32l3-13m211 36l17 7m-2469 22l-32 0m37 19l-32 5m37-48l-31-6m57 37l-30-7m82-16l-27-10m56 24l-27-11m75 13l-26-13m220-4l-23-12m88 33l-23-13m498 16l-3 2m107 0l2 5m32 12l3 5m240-18l6 9m116-34l12 12m163 41l20 26m242-31l28 18m-39-45l-25-6m41 1l-22 0m55-9l-15 5m57 8l11-9m-3-24l10-10m24 35l10-11m10 8l9-12m2-3l10-11m3 28l9-12m-3 5l10-12m39 14l8-12m42 15l6-13m6 22l5-14m-3-9l6-13m18 14l5-13m3 36l5-13m10-24l5-12m10 30l6-13m38 6l5-12m108 50l5 3m99-6l21 14m-2445 23l-31 10m184-37l-25-13m74 15l-23-15m149 30l-25-10m614 11l1 3m340 28l10 18m41-38l13 17m196-16l19 26m90 5l20 26m7-26l23 23m131-44l24 21m2-61l-16 3m69 27l-10 8m26-2l-10 10m119-46l6-13m4 26l7-13m3-6l7-12m-3 26l6-13m2 15l7-13m-5-2l7-13m-3 4l7-12m13 30l5-13m14 21l6-13m11 7l7-12m-2 9l7-12m-5 0l6-13m37 13l5-13m96 26l4 5m-2226 48l-32 6m60-2l-30-2m69-22l-27-11m93 11l-26-13m287 17l-24-18m51 2l-22-22m36 42l-19-24m67 23l-15-27m26 45l-13-29m17-4l-11-29m451 65l4 6m85-13l5 8m198 34l10 31m39-24l14 29m419-66l24 21m26-20l24 22m34-8l-6 5m204-34l-1 11m195-7l3 4m75 22l16 21m-2165-9l-26-10m28 38l-29-4m125 7l-25-10m120-36l-25-16m43 41l-28-15m104-16l-22-22m26 14l-21-23m45 62l-21-22m44-5l-17-26m35 26l-10-29m15 52l-13-26m81 20l3-27m-6 0l-3-26m142 70l-6-6m253 34l9 11m454-2l17 28m6-50l17 27m281-25l-6 4m201-18l-3 5m97 13l-1 4m101-2l5 15m68-37l9 17m-2050 67l-28 16m174-77l-28-12m213-9l-17-24m91 77l-1-14m50-14l15-20m194 26l6-4m191 40l14 28m157-36l12 30m-4-11l13 29m447-18l21 25m-31-99l-23-6m27 23l-21 0m63 61l19 26m37-31l-6 25m39-21l-4 25m24-27l-4 23m50-34l-3 19m139-10l4 26m86-52l7 23m-1870 28l-29 10m102-19l-28-7m94-13l-31-4m46 22l-31-1m43 7l-32-1m60-2l-31-2m116 16l-20 6m159-23l21 1m26-26l9-6m189 33l28-10m-3 9l7 21m1018-27l1 27m-1607 14l-30-1m41 10l-30 1m33-9l-31 0m71 7l-31 5m33-13l-31 4m50-21l-31 3m62 38l-27 14m26-49l-30 5m93 18l-20 15m38-5l-15 19m70 8l1 23m31-31l9 20m31-42l15 12m3-44l18 4m92 17l18-14m43 4l26-15m25 15l28-15m483 57l14 29m72-30l17 28m-1230-32l-32 4m57 24l-30 0m77-12l-29 3m47 1l-29 8m46-4l-30 10m89 19l-24 20m25-41l-25 19m29-25l-25 19m33-26l-25 19m29 24l-22 23m23-40l-23 22m37-40l-21 23m76 0l-11 28m293-87l24-18m6 39l27-16m-1-11l29-14m-2 52l29-16m-8-26l30-12m-17 30l30-11m119 80l16 30m301-49l15 29m-1120-2l-32-2m101-7l-26 4m113 25l-22 18m91-11l-14 26m27-20l-10 28m196-86l2-3m205 9l29-15m126 40l14 31m135-11l15 30m28-30l13 31m-980-1l-31-1m174-20l-23 15m49 4l-22 12m454-38l25-14m23 29l25-3m223 12l21 28m-104 15l35 5m-344 22l5-2m218-3l31-3m-504 84l-30 0m472-7l28-8m-16-16l28-11m-748 91l-40 0m61 7l-40 1m311 22l-27 0m409 5l19-7m-707 34l-42 1m43 29l-43 1m28 10l-44-1m136 7l-42 0m89 0l-41 0m523-1l8-3m47 0l14-6m23 5l20-7m-4 6l23-9m-783 91l-46 0m82-32l-45-1m46 36l-45 1m52-4l-45-1m577-1l3-1m44 5l6-2m226-9l46-11m-141 31l21-8m-6 0l24-8m-784 102l-47 5m51-24l-46 1m195 4l-44 4m195-1l-38 3m522 2l30-1m-794 37l-46 7m777 16l21 7m-776 40l-45 12m65 6l-45 14m276-13l-42 14m58-60l-40 10m144-10l-30 11m58 32l-21 14m66-16l-8 14m128-57l2 11m19 38l3 14m100-18l11 14m85-9l25 15m-836 28l-43 17m98-15l-43 18m117-18l-43 19m132-16l21 31m-32-42l3 9m2-1l1 25m22-38l8 23m-22 4l-7 28m14-38l-3 19m2-8l-7 39m19-57l3 32m3-15l-12 38m24-64l-3 26m9-11l-19 20m22-31l-17 19m37-6l-11 20m-3-21l-30 32m157-38l-35 20m82-15l-15 20m56-23l-6 19m247-16l11 19m68-24l23 18m-789-3l-43 19m195-30l14 12m-15-11l9 12m1 18l1 23m0-46l-6 11m25 27l-2 16m-5-55l-15 17m34-8l-3 13m3-12l-4 8m7 9l-11 30m27-44l-16 20m34-6l-11 15m9-38l-21 16m31 4l-39 9m54-24l-25 14m13 14l-41 11m70-25l-17 27m23-51l-21 17m5 13l-37 14m40-20l-45 22m71-25l-30 20m78-2l-36 24m165-21l-5 25m285-25l20 23m18-22l26 25m19-30l39 20m-842 4l-41 24m54 16l-39 26m56-30l-39 26m282-63l-18 10m1 6l-38 3m43-7l-34 11m13-38l-57 14m85 11l-32-3m39-24l-30-2m35 29l-26 1m17-43l-37-3m44 31l-31 12m28-7l-37 15m30-32l-46 13m65 8l-28 6m14-18l-44 14m39 8l-51 1m70-4l-33 2m273 15l2 30m168-27l14 30m24-32l21 29m-19-35l21 29m-18-45l22 27m-762 41l-38 27m81-17l-38 29m49-40l-37 29m211-54l-27 11m36-18l-20-9m20-11l-36-14m34 37l-39-5m69 15l-24-5m5-31l-45 0m74 36l-16-6m-13-4l-46-17m72 19l-23 1m24 0l-25-6m39-16l-30 0m142 53l-14 34m296-36l12 34m-669-7l-37 29m76-28l-36 30m46-8l-36 30m77-25l-36 30m149-102l-5-19m0 22l-10-11m8 0l-15-11m2 34l-35-6m50-9l-24-6m25 17l-23-22m37 24l-18-10m19-8l-20-9m25 22l-17-16m30-3l-31-17m42 33l-29-4m63 62l-33 33m105-28l-27 38m75-40l-7 39m77-36l-2 39m169-41l10 39m4-22l10 40m43-42l18 40m13-83l26 35m-635 19l-34 32m75-18l-34 32m38-27l-33 33m124-30l-32 35m100-20l-30 36m184-51l-2 42m6-42l-1 42m71-41l4 43m59-47l9 43m39-43l12 43m-110 7l6 47"/>
<path stroke="#1c00e6" stroke-width="4" d="M0 0m2432 267l-10-30m93 20l1-32m-219 112l-23-23m142-24l-12-26m24 86l-11-16m67-50l-5-27m94 19l7-31m48 46l12-30m2 47l11-29m14 39l10-29m-397 102l-23-18m60 4l-19-17m109 16l-14-15m112 22l-8-14m76-8l-3-16m-309 75l-23-17m136 45l-13-15m-460 30l-5-33m305 56l-29-16m852-4l12-30m-1250 70l-18-28m161 18l-8-31m52 24l3-32m599 64l-3-13m324 13l2-11m31-13l5-18m113 30l10-24m21 20l10-27m-7 16l11-28m35 36l11-31m-1414 74l-21-25m299 10l3-32m155 85l-27-16m42-8l-27-16m226 23l-14-15m124 17l-9-16m25 28l-9-16m144 21l-3-15m133-14l0-11m34 52l2-12m204-4l4-10m-1025-3l-6-31m158 93l-29-15m55 15l-24-16m235 5l-16-16m26 2l-15-16m220 20l-3-19m14 36l-1-23m13-1l-2-18m1 32l-2-21m4 30l-4-22m45 13l0-20m131 8l2-12m16 19l4-12m0 36l3-14m48 23l3-12m-1-8l3-11m149 9l5-9m6 39l5-9m210-28l14-15m-16 48l12-11m18-35l19-20m-1 46l20-16m-1655 46l-24-21m37 6l-25-22m84 29l-19-24m130 41l-19-23m339 33l-25-13m287 11l-17-20m34 14l-17-21m33 15l-17-21m52 7l-14-22m30 25l-12-24m18 17l-11-24m47 117l4 14m168-112l4-20m19 34l8-21m-1 17l6-20m7 44l10-23m-12 11l9-20m32 36l10-19m47 1l5-13m3 34l8-13m46-7l4-10m5 45l7-11m59-25l5-9m84 46l6-9m47-4l7-8m182 10l25-11m-1734 52l-26-21m33 5l-26-20m129 30l-23-19m401-1l-10-30m131 44l-20-13m206-18l-18-20m300 95l-9 14m10-20l-9 14m23 4l-12 12m17-28l-11 13m22 3l-12 12m16-7l-13 11m73-96l13-22m-65 111l-13 11m33-14l-15 10m121-88l10-14m97 64l9-9m61-27l6-8m296 19l26-9m-3-3l31-9m-22 27l31-8m-29 26l31-7m-1819 31l-27-19m82-5l-25-20m135 51l-24-10m91 57l-22 10m276-89l-17-22m149 32l-20-12m39 48l-21-12m28 1l-21-12m34 20l-21-11m68 1l-22-12m56 11l-24-11m32-11l-24-12m129 42l9 1m31 14l10 1m211-12l-11 10m186-51l18-15m7 48l20-12m23 16l14-10m-15-19l11-10m403 36l28-6m-4-13l32-7m-33 38l30-5m-1856 40l-28-17m47-15l-27-19m164 38l-23-21m209 73l-23 9m31-16l-24 6m260-34l-20-13m312 5l11-8m133 29l5-3m38 10l1-4m0-26l1 2m20 6l-1 0m90 21l-13 0m99-26l-17 2m125-11l20-9m5 32l18-6m35-26l10-7m358 45l28-7m-16-25l30-5m-1850 31l-27-17m58 20l-26-17m107 36l-24-20m33 13l-24-20m31-4l-24-21m32 36l-22-22m37 87l-23 6m21-23l-27 0m53-46l-24-16m69 99l-20 15m70 14l-12 26m56-47l-17 21m60-76l-24 7m159-7l-22-12m296 14l-26-3m124-32l11-12m29 28l13-12m62 19l9-10m26 19l6-9m349-13l23-4m-19 44l23 0m16-17l16-2m29 7l11-4m25-19l10-5m53-4l10-6m226-3l26-8m16 18l31-8m-1911 60l-30-12m43 14l-29-14m114 24l-28-16m163 60l6 18m34-2l1 20m22-50l-17 19m45 13l-19 19m32-31l-13 26m22-30l-16 23m20-17l-14 25m9-18l-17 22m29-44l-15 23m19-27l-17 22m249-50l-20-13m173 3l-20-9m104 23l-24-2m25-7l-26 2m117-31l12-15m4 11l11-15m212 36l-2-13m12-4l-6-9m253 62l21 2m58-39l13-3m76 28l10-2m245-6l24-1m61 6l33-4m-1969 35l-30-11m32-6l-31-10m49 19l-30-12m52 26l-29-12m50 6l-29-14m36 31l-28-13m35-35l-28-15m39 45l-28-14m31 7l-28-14m179 82l14 14m115-38l-20 18m44-12l-23 12m66-33l-24 5m74-8l-24-4m30-26l-23-6m112-3l-22-12m130 25l-19-12m36 33l-18-12m182 25l-21 2m40-6l-24 8m45 20l-20 11m111-61l8-20m80 16l5-20m57 3l-2-18m78 12l-11-15m25 27l-10-17m17 31l-12-16m148 57l21 10m5 0l16 7m515-31l32 4m326-57l0-26m-2310 88l-31-8m50 40l-30-10m83-14l-29-12m40-7l-29-11m35 19l-29-11m73 33l-10-14m224 62l-27 10m107-25l-24 3m150-49l-22-11m265 15l-17-6m103 17l-17 2m62 5l-18 8m158-65l7-20m92 41l-1-21m23 28l-2-20m5 5l-2-20m25 27l-6-20m18 1l-7-19m59 129l12 19m10-32l15 19m8-20l16 15m-60-102l-13-15m84 90l16 13m-2-31l18 13m-14-4l16 12m17-19l15 8m14 3l11 5m530 3l32 7m68-66l-10-22m70-6l-9-24m245 69l2-7m116-34l12-22m1 61l13-14m-2448 50l-30-10m48 9l-30-10m130 34l9-7m68 11l16 0m25 8l-7 11m78-26l-30-3m593-4l-13 3m19 5l-13 3m259 31l2 20m37-26l7 20m11-17l7 18m132-25l9 6m251-30l10 1m358 22l31 8m-20-21l32 6m-36 27l31 11m-41-106l-12-23m71 89l-3-5m48-17l-3-5m60 2l-3-7m280 7l7-8m109 17l17-12m-2553 42l-30-9m79 3l-30-11m32 44l-31-7m85-53l-13-21m26 58l-12-23m152 13l16-10m-3 13l11-17m44 16l-25-12m32 10l-28-9m30 13l-27-11m79 27l-18-7m22 22l-18-9m127-24l-22-9m169 19l-19-9m112 3l-17-8m268 38l-5 4m115 30l1 7m37-37l2 11m43 15l3 8m17-15l3 8m3-21l4 10m41-1l6 7m19-25l6 8m33 9l6 6m81-21l8 4m13 6l7 3m1-27l8 3m171 7l11 2m370-28l-4-5m50 30l-5-7m141 17l10-4m11 2l9-4m1 13l10-4m-3-8l9-3m34-25l8-4m45 2l7-4m22 2l7-4m4 11l6-5m10 26l6-5m-4 12l4-6m8-16l6-5m14 18l5-6m8 16l4-7m-2444 25l-33-3m33 19l-32-3m38 17l-32-5m38-1l-32-7m46-16l-30-7m72 9l-29-9m42 11l-30-7m46-10l-30-8m116-13l-1-21m-2 49l-13-24m178 26l-21-22m68 27l-14-13m23 12l-15-14m47 32l-20-13m39-26l-21-10m121 15l-22-10m706 37l4 7m77 12l5 5m593-25l-21-4m238 24l10-5m20-34l11-4m-9 32l11-4m-1-22l11-4m11 42l10-5m-2-24l10-3m0 7l10-3m33 5l8-3m26 15l8-5m1 15l6-6m15-33l7-4m0 11l7-5m24 0l5-5m14 38l4-6m16 5l3-8m6-7l4-7m56-8l5-7m18-4l13-7m113 26l25-5m-2630 82l-33-2m51-32l-31-7m50-2l-31-8m125 30l-31-2m41 14l-30-1m63-54l-17-24m100 26l8-20m25 10l2-21m0 26l2-20m-6 29l-7-22m15 23l-12-26m44 6l-17-24m53 48l-13-19m14 10l-13-17m46 14l-17-16m129 49l-22-11m35 5l-22-11m1052 26l8 6m352 0l-21-2m49 16l-15-3m103 6l11-6m14-21l11-6m4 35l12-5m17-11l11-5m-2 14l12-5m-4-3l11-6m1-22l11-4m27 15l10-6m51-5l9-5m15 10l7-6m-1 34l7-8m31-10l6-8m13 25l5-8m16-6l5-8m104 12l3-10m-2365 48l-29-9m71 6l-30-6m88 32l-29-2m30-17l-30 1m58 0l-28-2m34 20l-26-9m48 3l-24-11m40-33l-21-12m37 28l-17-18m59 16l-12-22m21-10l-9-23m90 43l-17-18m34 38l-21-14m38-14l-21-15m101 38l-22-12m438 61l-7-1m46-15l-5 1m887 19l26 19m118 2l30 12m-95-58l-18-2m135 2l12-6m-4 1l11-8m7 6l11-8m34 13l11-7m19 1l11-8m17-15l10-6m26 39l8-10m26-15l7-9m4-2l6-9m-2 24l6-10m122 5l4-11m2 29l4-11m2-2l4-11m11-13l3-10m7 14l3-10m168 81l24 6m-2604-11l-32 0m38 18l-32 1m162-14l-28-9m98 25l-26-11m127-31l-14-21m42 3l-14-22m404 46l-17-7m58 28l-16-6m179 9l-5 0m410 8l6 5m119 3l9 8m-5 16l9 10m71-26l14 11m100 24l22 24m294-34l30 14m-131-48l-27 0m44 0l-23 0m133-5l11-9m29-24l11-8m25 27l10-9m4 11l9-10m6-4l10-9m-5 35l9-11m-3-15l10-9m-10 21l10-9m13-14l10-9m-9 32l9-10m-6-3l9-10m3 11l9-10m6 4l8-10m5 18l8-11m1 32l7-12m1-19l7-10m18 45l7-12m-4-4l6-12m-1-2l6-12m2 14l5-12m21 8l5-12m36 31l4-12m224 55l18 7m-2519 15l-32 1m37 23l-32 5m38-59l-30-5m57 35l-30-6m85-20l-28-11m57 24l-27-12m76 12l-25-12m222-4l-23-13m88 33l-24-12m519 30l-3 1m112 4l3 4m32 13l3 5m243-14l7 9m121-31l11 13m172 54l20 25m250-38l27 17m-91-68l-25-7m44 8l-22-1m62-3l-16 4m84-5l10-10m-3-24l10-10m24 34l9-12m10 8l9-11m3-3l9-11m3 27l8-12m-1 5l9-11m38 13l7-13m41 15l7-13m4 21l6-13m-3-9l6-13m17 14l6-13m2 36l6-13m9-23l6-13m10 30l5-12m38 6l4-13m109 66l5 2m115 6l20 15m-2496 18l-31 11m190-61l-25-13m76 13l-23-15m147 35l-24-10m639 24l1 4m349 42l10 17m44-38l13 16m202-6l18 27m92 4l19 25m11-28l23 23m132-46l24 22m-38-80l-17 2m76 33l-9 9m25-1l-9 9m134-68l7-13m4 26l8-12m2-6l8-13m-5 26l7-13m2 15l6-13m-4-2l7-13m-3 5l8-13m10 30l5-14m15 22l6-13m12 8l6-13m-1 10l6-13m-5 0l5-14m37 14l5-13m95 44l5 5m-2263 49l-31 6m61-10l-31-1m73-32l-27-12m94 10l-25-12m288 11l-24-19m53-1l-21-21m38 39l-19-25m71 21l-15-27m28 43l-12-28m18-5l-12-28m467 99l3 6m87-11l6 8m202 57l11 30m42-25l14 29m429-74l25 21m25-19l24 22m4-25l-6 5m209-28l-2 11m200-14l3 3m88 40l15 22m-2206-41l-27-9m26 43l-28-5m128 2l-26-9m121-43l-26-15m41 41l-27-14m109-24l-22-23m27 14l-22-23m46 63l-22-22m49-9l-16-27m41 24l-10-29m12 55l-13-27m97 20l2-27m-11 1l-4-25m140 89l-6-6m268 51l9 12m462 14l17 27m6-50l17 28m258-49l-6 4m204-17l-3 6m99 11l-1 5m107 8l5 16m72-36l9 17m-2087 66l-28 16m174-105l-27-11m223-22l-16-24m106 87l0-15m65-19l14-19m186 41l6-5m199 73l14 28m155-34l13 29m-4-11l13 30m455-23l20 26m-74-131l-23-7m29 30l-22 1m104 86l20 27m11-33l-6 24m41-20l-5 24m25-28l-5 24m52-39l-2 19m145-3l3 27m90-56l6 24m-1905 14l-30 10m104-36l-28-7m91-10l-32-4m47 25l-32 0m43 6l-31 0m60-4l-31-1m127 23l-21 7m201-29l21 1m14-33l8-5m209 28l27-11m-23 41l6 20m1013-20l2 27m-1639-14l-30-2m41 13l-31 1m33-10l-30 0m70 12l-31 5m33-14l-31 5m50-23l-31 3m66 49l-27 15m23-59l-30 4m103 29l-20 16m43-2l-15 19m86 12l2 24m38-35l9 21m37-51l15 13m6-53l18 4m92-1l17-13m52 2l26-16m27 16l27-16m470 102l13 30m76-32l16 29m-1278-57l-32 5m59 19l-31 1m79-10l-30 3m48 6l-29 9m45-3l-29 9m94 30l-24 20m24-42l-26 18m30-24l-25 19m33-26l-25 18m32 29l-21 22m21-40l-22 22m38-39l-20 22m85 6l-10 29m327-134l23-17m10 40l28-16m0-9l29-15m-2 51l29-16m-7-22l29-12m-16 31l31-10m104 120l15 29m301-49l15 30m-1167-34l-31-1m106-2l-27 3m118 40l-23 19m100-4l-13 27m30-19l-10 27m208-116l2-2m232-4l29-16m111 87l15 30m135-11l15 31m26-30l12 32m-1023-34l-30 0m181-5l-23 15m50 1l-23 13m502-65l25-15m23 41l25-4m219 44l20 28m-89-8l35 6m-374 14l4-1m245-5l32-4m-566 88l-29 0m529-15l27-9m-15-18l28-10m-816 101l-40 0m61 8l-40 0m324 22l-28 0m456-2l19-7m-768 42l-42 0m42 30l-42 0m26 9l-43-1m137 8l-42 1m90-1l-42 1m573-5l9-4m52-2l13-5m30 3l20-8m-1 5l23-9m-852 100l-45 0m82-33l-44 0m45 37l-45 0m52-5l-45 0m625-2l3-1m47 4l6-2m266-18l45-10m-165 33l22-7m-4-1l25-9m-856 116l-46 4m51-27l-47 0m198 8l-44 3m201-1l-37 4m589-3l30-2m-870 46l-47 7m845 16l21 8m-842 44l-46 12m66 8l-45 13m279-12l-41 13m59-63l-41 11m155-10l-31 10m68 36l-21 14m79-16l-7 14m137-60l2 10m20 42l2 15m109-19l10 15m100-9l25 15m-904 30l-44 17m99-14l-43 19m117-18l-43 18m196-3l20 30m-49-63l3 10m0 14l0 24m30-39l8 23m-37 9l-7 28m18-47l-2 18m-3 13l-6 40m28-65l3 31m-12-8l-12 37m33-75l-2 25m-8-16l-20 20m25-32l-17 20m43-6l-11 20m-22-9l-30 33m152-51l-34 19m101-14l-16 19m66-23l-6 20m264-17l11 20m80-26l24 19m-856-3l-43 18m252-36l15 12m-21-11l8 11m-6 30l0 22m-6-57l-7 12m30 31l-2 16m-18-54l-16 18m47-13l-4 12m3-16l-4 7m0 32l-11 29m22-53l-17 21m40-12l-10 15m-2-37l-20 17m12-4l-38 9m67-19l-26 15m-2 10l-42 12m95-10l-18 26m20-60l-20 16m-12 11l-38 14m33-12l-44 22m85-27l-30 21m72 1l-36 24m196-20l-5 24m310-26l19 24m25-21l26 24m32-34l39 20m-922 8l-40 23m55 19l-39 26m56-30l-39 26m303-79l-19 11m-18-2l-39 3m48 1l-33 11m-11-35l-56 15m109-7l-33-4m42-22l-29-1m38 31l-26 2m6-48l-36-3m49 46l-31 12m22-4l-36 16m20-35l-47 14m84 0l-29 6m-1-10l-44 14m32-5l-50 1m87-3l-33 3m308 42l1 29m181-26l14 29m31-32l21 29m-19-35l20 29m-16-47l22 28m-822 40l-38 28m81-16l-37 28m49-39l-38 28m222-71l-27 11m43-38l-19-9m3-16l-35-13m30 45l-39-4m84 14l-25-4m-15-27l-45-1m103 31l-17-7m-42-14l-47-16m96 36l-24 0m23-6l-24-6m33-10l-29-1m157 88l-13 33m321-35l11 35m-717-13l-36 29m76-27l-35 30m45-8l-36 30m77-25l-35 31m179-152l-4-18m-6 29l-10-12m3 1l-16-12m-17 40l-34-6m60-9l-24-5m26 0l-23-21m42 35l-19-11m18-6l-20-9m28 15l-17-15m16-5l-30-17m43 46l-30-3m60 98l-34 33m112-23l-26 39m94-40l-8 39m83-36l-2 39m181-41l9 38m5-20l11 40m50-42l18 41m21-89l26 35m-695 16l-35 32m76-18l-33 33m38-27l-33 33m125-28l-32 34m102-18l-29 37m211-46l-2 43m7-43l-1 43m76-41l5 43m63-47l8 44m43-44l11 44m-115 10l6 46"/>
<path stroke="#e6001c" stroke-width="4" d="M0 0m2408 336l-14-29m30 23l-12-30m85 24l-2-31m-139 79l-21-24m30 14l-20-25m22 44l-19-21m41 2l-17-23m40 13l-15-24m44 20l-12-24m122 28l1-26m22 14l9-31m36 51l11-30m-326 99l-27-18m36 4l-26-20m54 11l-22-19m185 25l-9-14m108 30l-3-12m77-28l12-29m5 54l7-25m31 25l11-30m-1 39l11-28m-460 50l-28-18m163 42l-13-15m245 19l-2-12m163-8l12-30m18 47l11-28m17 37l12-29m-1037 78l-14-30m418 18l-29-15m321 2l-6-13m331 3l9-25m-5 24l8-26m10 22l11-29m29 48l11-29m-10 43l8-25m22 19l12-30m-1154 54l-17-28m29 22l-15-29m119 37l-3-32m558 54l-8-15m102-15l-3-12m87 53l-1-13m313-10l8-21m32 11l12-29m-10 32l11-28m3 33l11-28m63 50l11-30m-1380 80l-22-24m24 25l-22-24m75-16l-18-27m195 47l-7-31m281 50l-22-16m53-1l-18-15m326 30l-3-16m70 11l-1-15m16 4l0-14m489 1l13-29m25 62l16-22m-1495 59l-22-24m40 21l-21-25m296 25l-6-30m21 23l19-27m285 16l-18-14m105 46l-16-17m161 1l-4-21m58 20l-2-20m39 35l2-21m96 5l3-15m283 34l6-9m-1362 50l-25-21m361 22l-13-27m178 27l-25-16m57 16l-20-15m166-25l-17-15m40 53l-20-15m28 3l-19-15m38 23l-18-18m54-8l-16-18m19 25l-15-19m152 19l-3-25m34 24l0-25m37 19l3-23m2 46l-7 15m26-5l-8 15m53-11l10-23m76 11l8-15m40 1l6-12m136 26l6-8m251-13l24-13m-1606 88l-24-22m73 23l-21-23m123 29l-23-12m259-13l-5-29m104 8l-27-18m82 29l-20-13m155 49l-22-14m26 0l-20-15m53-14l-19-17m51 19l-19-18m120 13l3 13m51 12l3 13m63-17l-5 14m29-4l-7 13m93-37l12-22m6 31l12-21m2 26l14-19m160 44l9-8m219 1l10-7m95-33l31-10m-30 35l29-9m-1677 42l-26-20m103 41l-23-21m79 36l-23-15m48 4l-23-8m65 11l-22 9m115-40l-22-17m61 18l-21-20m369 29l-22-12m47 23l-23-12m44 31l-25-11m35-11l-24-14m35-7l-22-17m58 55l11-2m5-39l9 5m106 1l4 9m150 29l-11 4m109-36l20-16m-19 25l-17 6m29 9l-18 3m42-34l16-14m-2 51l19-12m38 14l14-8m131-8l8-7m24 20l9-7m203-9l31-6m-1734 62l-27-18m67-13l-25-20m29 60l-27-17m120 20l-22-22m69-18l-24-9m35 23l-23 0m103 7l-17 21m51-16l-22 13m143-44l-20-20m139 50l-20-14m77 29l-20-13m135-4l-23-10m33-19l-23-10m37 38l-25-9m67-7l12-5m-2-2l12-4m4 43l13-8m270-8l-9 1m32 12l-11-1m599-14l29-6m-24 23l30-6m-1767 40l-29-15m41-1l-28-16m55 2l-26-19m75 32l-25-18m44 50l-24-20m41 2l-24-20m34 1l-23-21m23 32l-24-20m84 27l-25 8m40-5l-21 14m54-24l-14 23m18-36l-12 23m35 4l-11 27m21-25l-12 27m34-58l-13 24m41 9l-17 21m155-56l-23-13m152 24l-21-13m119 12l-21-10m125 26l-27-3m28 16l-26-1m28-33l12-11m278 50l-4-8m98-24l-15-3m49 15l-17-5m62 13l-18-5m25-13l-18-2m23-12l-18-3m23 28l25-3m-7-15l22-5m-11 44l21-1m24-26l16-3m21 1l13-5m330 22l25-2m-4 6l32-5m-1745 50l-28-15m76-4l-26-18m49 23l-16 5m27-15l-18 5m49-12l-3 17m20 0l6 20m148-8l-18 20m76-10l-23 8m111-19l-23-8m193 13l-20-10m144-17l-23-3m25 18l-22-3m45-16l-25-2m32 8l-25 1m50 22l-25 1m57-10l11-16m150 31l4-15m36-11l-1-11m5 4l-1-10m29 20l-4-11m153 3l-17-8m65 18l23 3m23-13l18 0m17 35l14 0m8-34l13-3m100-3l11-3m169 21l17-2m50-8l31 3m-3 25l32 3m-1756 22l-29-12m45 2l-28-15m62 20l14 14m52-17l10 18m-5-6l7 19m128-21l-25 13m177-21l-24-6m223 20l-19-10m116 24l-18-4m32-5l-19-4m27 8l-19-2m98-4l-21 8m38-37l9-18m176 61l1-20m143-4l-14-14m50 29l20 13m-18-26l-14-14m76-2l19 4m148-2l10-2m35 11l10-1m289-1l32-5m-21 17l33-5m-26 20l33 0m307-2l-2-22m56 25l2-19m37 21l3-20m0 11l4-24m-2302 74l-32-8m50-20l-30-10m194 9l13 14m79-15l-12 23m74-13l-26 12m47 3l-29 6m54-29l-23 8m86-6l-24-1m65 1l-24-5m196 19l-19-10m147 6l-17-5m125 24l-14 5m52-39l-17 14m21-19l-17 16m75-9l7-20m39 33l5-21m113 31l-4-20m32-5l-8-19m64 44l14 14m-4-41l19 13m-1 19l13 10m285-39l11 0m1-6l11-1m-2 16l11 0m263 1l31 9m211-19l-6-21m248 14l7-21m6 20l9-23m19 42l10-19m18 24l15-21m-2436 67l-33-6m100-16l-30-10m32 32l-30-8m31-8l-30-11m34 40l-31-6m43-29l-19-17m138 22l15 5m102-1l-28 5m68 7l-29-3m43 28l-30-7m33-26l-31 1m38 33l-18-4m25-18l-21-1m293-25l-19-10m284 53l-8 3m86-38l-6 16m30-15l-2 18m35 3l1 15m41-38l3 21m2-17l4 20m38-14l6 17m26-11l8 14m144-33l11 5m-7 2l10 5m201 29l11 1m307-11l29 14m23-5l-17-18m157 2l-3-6m178 22l8-4m56 6l7-4m-2203 19l2-15m19 38l16-9m42 15l12-16m198-13l-19-6m35 36l-21-8m134-33l-23-8m55 27l-21-11m306 17l-12-3m153-11l-4 6m228 9l5 8m672-33l29 15m-12-13l31 11m-17-15l-19-18m145 40l-5-7m93 13l10-3m15-6l9-4m30 27l8-3m2 0l8-4m-1-29l8-3m29 13l7-4m-2 16l7-4m5 0l7-4m2-15l7-4m-7 38l6-4m17-6l6-5m26-12l6-5m4 7l6-5m27 12l6-6m111 5l21-11m-2413 57l-31-4m39-14l-17-23m27 45l-31-4m38 14l-17-24m34 26l-9-23m50-8l13-15m55 19l-1-21m2 53l0-21m92-18l-23-17m27 51l-13-13m13 5l-23-20m34 12l-13-11m86 20l-21-11m60 3l-22-11m46 12l-22-10m165 31l-19-10m215-25l-12-4m19 35l-11-3m387-27l4 6m285 7l10 4m31-9l10 4m156 26l29 14m341-34l10-5m15-5l10-4m25 10l10-4m21 10l9-4m12 3l8-5m27-15l7-4m-3 24l7-5m-1 20l6-6m-1-18l7-5m85-12l5-6m0 15l5-6m12 2l4-7m20 36l4-8m-2370 29l-32-4m71-1l-30-10m150 39l-19-24m21 30l-30 1m38-20l-8-24m25 16l6-20m24 18l1-21m65 50l-9-23m22-14l-16-23m32 44l-13-19m16 15l-11-19m36 12l-14-17m18 7l-15-15m42 23l-17-15m134 20l-23-9m206 29l-19-8m187-6l-10-2m229 24l2 4m318-44l7 4m144-4l11 7m9-3l13 6m315 10l-27 0m116 16l11-6m-7 4l11-6m21-9l11-5m-10-10l11-6m-9 18l11-5m23 10l11-5m0-6l11-6m13 5l11-5m-8 37l10-7m-3 8l10-7m9-21l10-5m-7 17l10-5m34 12l8-7m65-4l6-7m30 22l5-9m9-2l4-8m5 27l3-10m37-9l3-9m27 13l4-9m16-3l4-9m8 27l4-10m101 9l20 0m-2501 15l-32-2m37 21l-33-2m41-18l-31-6m70 26l-30-8m106 16l-29-6m32-20l-30-6m61 3l-30 0m53 19l-29-1m70 28l-21-15m30-22l-18-16m23 6l-15-18m23 23l-12-21m67 34l-12-22m100 24l-21-14m219-6l-21-9m41 22l-20-10m108 41l-17-8m124-7l-12-5m93-9l-6-1m66 10l-2 2m136 12l3 4m538 1l23 22m-3-30l25 20m180-9l29 13m-25-16l29 14m9-37l-21 0m62-4l11-7m115-6l11-6m13 14l10-8m7 25l9-9m-4 1l9-8m0-8l9-7m8 5l8-8m3 49l8-10m40 2l6-10m-5 21l5-11m1 3l6-10m-3 18l5-11m10-33l6-9m-4 24l5-10m17 7l5-9m10 29l4-11m7-15l4-10m-1 35l4-11m13-5l3-10m15 16l3-11m39 26l4-11m4-10l3-11m-2327 77l-33 2m86 8l-30-7m65-27l-29-9m40-2l-29-8m179 21l-15-21m104 12l-20-17m117 22l-23-10m625 13l2 4m97 25l4 5m197-1l9 9m100-11l17 17m149-47l24 22m33-21l23 23m120-38l30 13m25 33l-22 0m65-41l11-8m-7 36l11-8m23 0l11-9m-7 15l10-10m-1-17l11-8m-4 50l11-9m1-34l11-8m-1 51l10-11m-1-34l11-8m-2 44l9-11m11 15l9-11m13-12l8-11m3 21l9-10m56-2l6-11m30 39l5-12m37-5l4-12m-4-12l4-11m36 12l4-12m-1 56l4-12m2 6l4-12m-3 17l3-12m-1 8l4-12m-3-21l4-12m16 3l4-11m22 15l4-11m100 38l8 2m-2306 45l-27-11m50-12l-28-9m71 43l-25-13m309 13l-23-13m183-27l-18-11m167 13l-13-6m252 18l3 4m274 18l9 10m163-39l19 25m196-10l24 21m179-10l-17 3m67 1l9-11m5-1l10-11m-2-4l11-9m-7 5l11-10m5 15l10-10m3 36l9-12m65 9l8-12m33 9l6-13m40 8l5-13m26 4l5-13m3 9l5-13m10 13l5-13m-4 41l5-13m45 5l7 8m94-17l5 2m5-13l6 2m22-15l6 1m4 25l13 9m-8-4l16 11m-2263 22l-27-10m247 0l-23-12m71 39l-24-14m27 22l-23-16m67-19l-22-16m76 47l-18-24m101-5l-18-12m117 41l-13-9m133-21l-8-4m271-1l4 6m242 36l16 28m393-39l22 24m67-35l-22-10m63-10l-15 4m46 29l-8 8m12-39l-12 8m33 28l-8 9m39-28l9-11m18 35l-5 12m18-19l-6 13m7-20l8-12m-4-14l9-12m7 15l9-12m55 35l7-13m-7-11l7-13m0 51l0 11m36-19l1 10m29-2l2 7m111-8l3 3m-2159 32l-31 5m458 6l-15-27m90-9l-13-19m190 43l-8-4m350 8l10 17m197-18l17 28m120-43l18 27m99 0l20 25m50-37l21 24m99-23l-17-10m149-21l-7 8m82 16l-3 8m307 0l14 22m21-56l13 16m-2175 74l-27 19m248-59l-25-15m57 44l-28-14m82 4l-25-20m34 4l-23-22m40 57l-24-20m52-12l-17-26m29 17l-16-27m20 69l-19-23m26-14l-13-28m26 46l-11-28m20 7l-10-27m19 54l-8-27m24 0l-5-27m63 69l12-21m0 19l9-20m-1-13l-2-18m4 19l-2-17m552 25l13 29m220-27l16 28m103-37l20 25m134-18l-21-15m55 11l-13-5m297 24l-2 5m119-26l1 6m71 2l12 24m-2060 18l-26 20m208 2l-28-10m90 8l-31-7m59-2l-30-10m44 3l-27-16m38 17l-29-12m32 32l-28-13m33-23l-26-17m59 40l-24-17m33 34l-25-11m35-10l-20-19m74 23l-2-20m36 26l14-17m2 17l18-14m-3 16l18-13m26-23l1-12m87 39l1-6m22 4l3-6m805-17l21 25m3-2l21 24m60-11l22 25m37-30l-7 19m55-15l-4 19m106-15l-1 21m6-55l-3 5m115 21l5 26m77-58l6 20m3-11l9 26m-1890 35l-29 12m116-4l-28-6m70-7l-30-5m38 21l-31-4m32-4l-31-3m83-18l-30-8m32 18l-31-3m82 23l-29 1m38-36l-26-11m145 49l19 4m-7-36l21-7m9 8l17-8m-9 35l16-1m290-25l14 29m572-25l20 26m50-16l18 27m192-45l-3 26m-1486 32l-29-4m70-5l-31-1m58 14l-31 4m32 16l-30 9m66-2l-28 14m30-11l-28 15m37-61l-30 5m33 41l-26 17m49-25l-25 17m75-36l-16 13m26 6l-9 22m22-46l-7 13m12 16l-2 24m10-60l0 11m118 14l5-1m104 1l25-17m-7 2l27-14m633 6l18 27m8-37l16 28m-1132 48l-29 6m52-32l-30 9m56 3l-29 13m38-4l-27 16m90-23l-18 24m87-22l0 24m223-34l26-17m10 44l29-16m22 19l31-12m71 8l16 29m32-56l16 29m1-3l16 29m61-25l17 29m84-42l9 32m128-14l16 30m0-55l15 29m-1076 17l-31 0m62 4l-27 1m147-13l-22 22m41 9l-17 24m48-17l-11 27m21-33l-15 11m21-46l-14 18m22 17l-14 10m45-27l-9 13m39-29l-5 12m14-15l-5 10m115-4l10-8m61 5l27-16m40 56l29-16m-10-7l30-13m-22 11l30-12m-24 0l31-11m104 34l16 30m54-43l17 29m116-41l12 31m-939 17l-33-1m159 24l-26 6m75-32l-20 20m210 10l-5 0m53-4l2-3m44 6l13-8m181 4l14 28m127-25l23 26m69-51l17 30m-16 3l17 31m41-61l16 31m-960 44l-35-1m845-19l32 14m-742 27l-34-2m82 4l-32 0m77 3l-30 0m124 1l-15 0m309-3l11-5m61 23l26-7m38-12l36-9m17 10l37 0m-793 78l-38 1m46-44l-37 0m185 44l-35 0m322-4l3-1m139 4l15-5m-589 38l-39 1m42-17l-39 0m32 64l-41-1m625 9l15-6m3-5l18-8m31 10l38-10m-88 55l18-7m-654 52l-44 0m61 19l-44 0m65-35l-43 0m475 1l2-1m181 39l21-8m-6-1l24-9m-660 29l-44 0m79 27l-44 1m282 5l-35 1m132-1l-4 0m196-5l10-4m-662 81l-47 2m108-18l-46 2m52-2l-46 2m412 14l-8 3m107 2l1 3m189-8l20-1m-2-3l25-2m-16-10l28-6m-4 26l39-5m-184 78l7 10m-361-8l-42 11m125 36l-37 15m115-61l-8 10m103-9l0 10m223 22l25 13m-6-4l31 13m-753 32l-43 18m155-18l14 31m15-32l-2 46m8-48l-4 24m29-18l-4 26m7-31l-9 18m11-16l-8 22m16-28l-10 19m19-28l-10 28m11-23l-17 35m23-41l-7 22m18-18l-17 29m22-18l-11 21m20-26l-2 24m7-21l-8 17m12-15l-16 21m22-17l-27 33m43-37l-41 19m517-18l35 16m-732 38l-41 23m112-61l4 21m0 2l0 1m1-17l16 21m-1-23l4 24m-2-5l4 7m-1 0l2 18m-1-17l-3 17m5-52l10 16m-8 11l11 12m-9-29l-2 26m18 1l-17 21m32-19l-8 10m36-44l-14 17m27-21l-18 37m27-43l-20 36m48-27l-25 13m26 6l-26 8m27-1l-21 16m25-5l-9 12m9-52l-27 18m33-1l-21 15m26-26l-29 27m29-6l-46 20m50-38l-47 19m52-21l-31 17m42 11l-41 10m124-16l-29 24m189-24l2 24m60-25l6 24m28-25l10 24m20-19l13 24m33-23l22 24m-22-54l22 21m-495 21l-9 8m32 6l-18 7m28-6l-23 8m29-12l-19 8m26 24l-34 2m37-6l-29 4m36-11l-28 2m33-10l-34 4m42-28l-42 15m45-9l-38 8m48 7l-25 4m26 14l-37 2m50-12l-37 29m323-27l8 29m-600 15l-38 28m66-11l-37 28m192-70l-12-1m16-1l-9-6m42 14l-22 7m46-11l-17 6m19 18l-35 2m37-18l-22 0m42 31l-19-10m33-10l-48-5m436-10l16 32m-6-3l18 35m-4-54l22 33m-11-28l27 32m5-27l35 32m-759 9l-36 30m71-17l-36 30m69-44l-36 30m55-34l-36 30m134-46l-19-12m26 28l-29-15m31 12l-19-11m23 16l-20-13m24 2l-14-13m16 15l-28-13m34 10l-19 0m32-1l-25-19m25 34l-34 33m36-45l-22-2m24 15l-29-32m57 31l-34 32m457-46l21 37m-547 13l-34 32m113-36l-34 32m42-22l-33 33m52-9l-32 34m66-60l-31 35m48-16l-30 36m49-45l-30 36m57-23l-29 37m41-31l-23 41m163-40l2 46m73-48l6 46m103-68l24 41m-361 1l-27 39m133-53l-1 45m18-45l-1 45"/>
<path stroke="#800080" stroke-width="4" d="M0 0m2394 307l-15-28m33 21l-12-29m95 22l-1-30m-159 85l-20-23m30 12l-20-25m23 48l-20-22m44 1l-17-24m42 13l-15-24m47 20l-12-24m135 26l1-25m30 8l9-30m38 51l11-30m-364 111l-26-19m36 3l-26-19m58 11l-21-20m197 31l-10-14m115 32l-2-13m91-44l11-30m1 59l7-25m35 20l10-30m0 41l11-28m-499 60l-27-17m177 44l-12-15m255 22l-2-12m177-26l11-30m18 49l11-29m18 37l11-30m-1062 78l-13-30m402 33l-29-15m344 4l-6-13m346-9l8-25m-5 23l8-27m13 20l12-30m28 49l11-28m-13 46l8-25m26 14l11-30m-1182 56l-16-29m30 22l-15-30m131 35l-2-33m552 72l-9-15m108-12l-3-13m89 53l-1-12m322-19l7-22m37 4l12-28m-11 32l10-29m4 34l10-29m64 49l12-29m-1414 85l-23-24m25 25l-22-24m79-19l-18-27m206 43l-7-31m266 65l-21-15m56-1l-18-15m341 29l-3-16m72 12l-2-14m18 4l0-14m502-14l13-28m28 68l16-22m-1533 57l-22-24m41 20l-21-24m311 19l-6-31m46 27l18-27m249 29l-17-15m106 44l-16-16m173-4l-5-20m61 20l-2-19m43 33l2-21m97 11l2-15m287 40l5-9m-1392 38l-26-21m374 16l-12-28m165 39l-26-15m63 16l-21-16m170-24l-18-16m38 54l-19-15m28 3l-19-16m39 21l-18-18m56-8l-16-18m20 24l-15-20m164 14l-2-26m36 25l1-25m39 21l3-23m-8 84l-6 15m24-5l-7 15m70-49l9-23m75 19l8-15m38 4l5-12m137 30l7-8m268-18l24-13m-1654 79l-23-21m75 21l-21-23m121 40l-23-13m277-29l-6-29m83 19l-28-17m90 33l-20-14m153 49l-21-14m27-1l-21-16m55-15l-19-17m51 18l-20-19m143 45l3 13m51 12l2 13m56-16l-6 13m28-4l-7 12m112-71l12-21m6 31l13-21m3 28l15-18m154 54l8-9m221 3l10-7m116-36l30-10m-31 36l30-9m-1733 31l-26-20m106 40l-24-20m80 41l-24-14m49 10l-24-7m67 27l-22 8m115-65l-21-16m61 14l-21-19m368 36l-21-13m45 24l-23-13m42 33l-25-10m36-15l-24-14m37-10l-22-16m91 69l11-2m3-32l8 4m102 6l3 10m136 23l-11 4m140-56l20-15m-56 46l-16 6m27 6l-17 3m75-51l15-13m2 52l18-12m34 18l14-8m125-7l9-7m24 20l8-7m226-8l32-5m-1793 49l-27-19m69-14l-25-20m27 63l-26-16m124 14l-22-21m67-6l-24-8m36 31l-23 0m109 28l-17 21m46-24l-21 14m144-78l-20-20m139 56l-21-14m78 30l-20-13m132-1l-23-9m33-20l-24-11m36 40l-24-8m103-4l12-5m-2-1l11-5m6 40l12-9m249 2l-8 0m29 11l-11-2m639-18l29-6m-23 23l31-6m-1827 31l-30-14m43-3l-28-16m57-1l-26-18m76 32l-26-18m46 48l-24-21m41 3l-25-19m36-1l-24-20m23 32l-23-21m82 56l-24 9m43 0l-22 13m62-14l-13 22m19-35l-12 24m36 7l-11 28m20-26l-12 27m33-61l-14 25m38 5l-16 22m148-91l-22-13m153 24l-20-12m118 14l-21-10m119 33l-26-2m28 17l-26 0m66-44l11-11m263 53l-3-9m86-18l-15-3m47 13l-17-4m61 12l-18-5m25-10l-19-1m24-14l-18-2m66 27l25-2m-10-18l22-5m-12 48l21-1m19-28l15-4m19 0l12-5m343 25l25-2m3 3l32-6m-1805 41l-27-15m77-7l-26-18m59 46l-16 4m25-14l-19 5m65 0l-2 17m28 3l6 20m124-8l-19 20m72-22l-24 8m112-35l-24-8m197 11l-21-10m142-10l-23-3m26 18l-22-4m42-14l-24-3m31 12l-25 1m50 22l-25 1m93-27l12-16m142 32l4-16m31-6l-1-11m5 5l0-10m25 19l-4-12m140 7l-17-9m105 30l23 3m18-16l18-1m13 36l14-1m7-36l13-3m98-3l10-3m176 22l18-2m63-3l31 3m-2 25l33 2m-1818 8l-30-11m47-2l-28-15m104 49l13 13m49-12l9 18m-7-5l8 19m95-27l-25 13m178-40l-24-5m228 15l-20-10m118 30l-18-5m31-4l-18-4m26 10l-18-3m95 7l-21 8m68-63l9-19m168 60l1-20m128 2l-13-15m83 57l19 13m-51-53l-15-13m110 15l19 4m139-8l10-2m35 12l11-1m310-5l33-4m-21 16l32-4m-25 24l32 0m273-24l-1-21m59 27l2-20m38 21l4-19m0 6l4-24m-2338 90l-31-8m51-22l-31-10m238 33l14 15m53-7l-13 24m61-25l-26 11m44-2l-28 6m59-27l-23 7m85-14l-24 0m65-4l-24-6m201 15l-20-11m150 12l-17-5m128 34l-13 4m48-29l-18 13m22-16l-17 16m99-45l7-21m37 33l5-20m104 31l-5-21m29-3l-7-19m85 77l14 14m1-42l19 13m-7 16l13 11m283-50l11 0m1-7l11 0m-2 16l12 1m282 9l31 9m174-49l-6-21m261 14l8-21m7 18l8-23m21 46l10-19m23 22l15-21m-2484 82l-32-5m102-21l-30-10m32 34l-31-8m32-11l-29-10m32 44l-31-6m55-40l-20-17m173 44l16 5m58-1l-28 4m67 0l-29-2m42 23l-30-7m32-18l-30 1m50 28l-18-5m22-14l-20-1m294-34l-20-10m296 66l-9 3m89-25l-5 16m33-13l-2 19m38-1l0 15m44-32l3 20m3-17l5 19m39-16l7 17m27-14l8 14m147-42l10 5m-7 2l10 5m202 25l11 2m325 1l29 15m-23-38l-17-17m171 13l-3-6m189 24l8-3m55 5l7-4m-2208 8l2-15m33 44l16-10m38 9l12-16m167-3l-20-6m34 34l-21-9m132-32l-23-8m57 24l-21-11m315 25l-12-2m161-3l-4 5m237 12l4 7m697-25l29 14m-10-16l30 11m-66-44l-19-18m159 51l-6-7m109 17l10-3m14-7l9-4m29 28l9-4m1 0l8-3m-1-29l9-4m27 13l8-3m-3 15l7-4m5 0l7-4m2-15l7-4m-8 38l7-5m16-6l6-4m26-13l6-4m4 6l6-5m27 11l5-5m127-1l21-11m-2465 64l-31-4m53-33l-17-23m13 64l-31-4m52-6l-17-23m42 26l-8-23m71 0l13-15m41 13l-1-22m3 54l-1-22m70-13l-23-17m37 55l-13-13m3-2l-24-20m45 21l-13-11m78 20l-22-11m60 3l-22-11m46 13l-23-10m169 31l-20-10m223-19l-12-4m20 36l-12-4m403-17l5 6m290 5l9 3m32-8l11 5m174 35l29 14m322-53l10-5m15-4l10-3m25 9l9-3m21 9l9-4m11 2l8-4m26-15l7-5m-3 24l7-4m-2 18l6-6m0-17l7-4m83-14l5-6m0 15l4-7m12 2l5-6m19 34l3-8m-2405 33l-32-4m73-7l-29-9m160 24l-18-23m9 54l-30 0m60-44l-8-24m39 20l6-19m19 16l1-21m55 48l-9-23m15-14l-17-23m36 48l-12-19m17 15l-12-20m34 15l-15-16m18 8l-14-16m39 24l-18-16m129 27l-23-8m210 29l-18-8m195 0l-11-3m242 31l2 4m323-44l7 5m148-2l10 7m12-4l13 7m275 3l-26 1m153 9l11-7m-7 5l12-5m20-9l12-5m-11-11l10-5m-8 18l12-5m22 10l11-5m0-7l10-5m14 5l10-4m-8 34l10-6m-3 7l9-7m10-19l9-6m-6 18l10-6m32 11l7-8m64-3l6-8m29 21l4-8m9-2l4-9m4 26l4-9m36-9l4-9m27 13l3-10m17-2l4-9m8 26l4-9m117 18l21 1m-2554 12l-33-2m37 21l-32-2m42-22l-32-5m72 23l-29-7m106 17l-30-6m32-20l-29-5m60 8l-30 0m54 18l-28-2m77 15l-21-15m33-23l-18-16m26 4l-15-18m26 20l-12-21m67 33l-12-22m91 32l-20-15m218 0l-20-10m41 22l-20-9m111 42l-17-8m129-4l-13-5m100-5l-7 0m71 12l-2 1m141 15l2 4m559 19l24 23m-2-33l26 20m183-16l30 14m-26-16l29 14m-41-51l-22 0m95-11l11-7m115-5l10-6m13 12l9-7m7 23l9-8m-4 1l8-9m1-6l9-8m7 5l9-7m2 46l7-9m39 1l5-11m-5 21l6-11m1 4l6-11m-4 18l4-11m12-31l5-9m-4 23l6-9m16 7l6-10m8 28l4-11m7-14l4-9m-1 33l3-11m13-4l3-11m15 16l3-11m40 26l3-11m4-10l4-10m-2364 89l-32 2m88-1l-29-6m65-30l-28-8m39-2l-29-8m193 8l-14-22m98 17l-19-16m113 28l-23-11m650 28l2 4m99 26l3 5m203 3l9 9m108-3l18 17m155-42l24 21m32-19l22 23m128-48l30 13m-27 20l-21 1m97-50l11-7m-7 35l12-8m22-1l10-9m-7 14l10-10m0-15l12-8m-5 49l10-10m2-32l11-8m-2 48l9-10m1-32l11-8m-4 41l10-10m10 14l9-11m12-12l9-10m3 21l10-10m52-3l6-12m29 39l5-13m36-4l4-12m-4-11l4-12m36 12l3-11m0 55l4-13m2 7l4-12m-4 17l4-13m-1 9l4-13m-3-20l4-11m16 3l4-12m22 16l3-12m105 52l8 2m-2341 32l-28-11m50-10l-28-9m74 39l-26-12m312 12l-22-14m187-24l-18-11m172 18l-12-6m267 28l3 4m280 24l9 10m173-24l19 25m201-14l25 22m137-29l-16 2m92-12l9-11m6-1l9-10m0-3l11-10m-7 5l10-9m5 14l10-11m2 35l8-12m65 9l8-12m31 8l7-13m38 8l5-13m26 4l5-13m3 9l5-13m10 13l5-12m-4 40l4-13m48 26l7 7m92-22l6 3m5-14l5 2m23-16l6 2m11 32l14 8m-6-1l16 12m-2306 0l-27-11m251-1l-24-13m71 38l-23-15m27 21l-23-16m68-19l-22-15m80 38l-18-23m101 6l-18-13m122 45l-13-9m138-16l-9-4m284 9l4 6m254 58l17 27m398-42l21 24m24-69l-23-11m71 5l-14 3m52 34l-8 8m8-39l-12 9m37 28l-8 9m56-48l9-12m4 59l-6 11m18-17l-6 13m21-45l8-12m-3-14l9-11m7 14l9-11m53 33l7-12m-7-12l7-12m-7 74l1 10m36-19l2 11m29-6l2 8m112-13l4 4m-2194 33l-31 6m474-27l-16-27m93-1l-12-18m194 57l-9-5m369 30l9 17m205-7l17 27m121-43l17 27m102-2l20 26m51-39l21 25m61-58l-16-9m158-4l-8 7m87 17l-4 8m325 14l13 22m21-62l14 16m-2216 77l-27 19m250-93l-25-15m54 45l-27-15m84-1l-25-19m36 1l-23-21m39 58l-24-20m59-18l-17-26m30 16l-15-27m16 73l-19-23m32-19l-14-28m29 46l-12-28m22 8l-11-26m22 53l-9-27m28 0l-5-27m80 75l12-20m-3 19l9-19m-12-12l-1-17m3 19l-2-18m209 40l1 0m357 32l13 30m223-29l15 29m108-41l20 26m93-59l-21-14m63 20l-13-4m308 33l-1 4m121-24l1 5m82 21l13 25m-2099 13l-27 19m207-27l-28-10m87 11l-30-8m59-4l-30-10m47-3l-27-16m36 21l-28-13m32 32l-28-13m35-27l-26-17m61 40l-23-17m31 40l-24-12m39-17l-20-20m92 23l-3-21m53 30l14-17m6 20l19-15m-4 18l18-14m9-21l2-11m86 44l1-6m24 4l3-7m823 15l20 25m4-3l22 25m60-11l21 24m9-35l-6 20m57-16l-5 19m110-13l-1 22m4-72l-4 4m124 43l4 25m79-63l6 20m6-5l8 26m-1927 21l-29 11m117-21l-28-6m68-6l-31-5m38 22l-31-5m32-2l-31-3m84-23l-31-9m32 24l-32-3m85 27l-29 2m41-49l-26-12m190 65l19 3m-5-46l21-8m5 8l17-7m-10 41l15-2m289 6l13 29m579-28l19 26m49-15l18 28m171-47l-3 27m-1512 1l-29-3m68-3l-31 0m58 18l-31 4m33 21l-30 9m68 3l-28 14m30-10l-27 14m34-70l-30 5m37 53l-27 17m51-25l-24 18m83-41l-15 14m32 14l-10 22m25-55l-8 13m18 27l-3 23m13-72l0 12m123 1l6-1m123-15l24-16m-4 4l26-14m625 47l17 28m7-37l17 28m-1178 26l-30 6m52-29l-30 8m57 8l-28 13m39-1l-27 16m99-15l-19 25m106-23l1 23m248-74l25-17m14 45l28-16m25 23l30-12m57 49l15 28m33-55l16 28m1-2l16 29m62-25l17 28m76-38l8 32m136-16l15 30m0-56l15 30m-1122-13l-31 0m66 5l-28 2m153 7l-22 22m46 11l-16 25m53-15l-10 26m16-48l-15 11m22-39l-14 18m22 9l-15 10m51-24l-9 13m43-30l-5 12m14-17l-5 11m130-23l10-8m78-3l27-16m42 56l28-15m-8-5l31-13m-23 12l31-12m-24 1l30-11m90 75l16 30m55-44l18 29m110-39l12 32m-984-16l-33-1m166 31l-26 7m81-19l-20 19m225-9l-5 1m60-8l2-3m55 1l14-9m181 41l15 27m135-26l24 25m62-46l17 31m-16 3l18 32m39-62l17 31m-1012 12l-35-1m912-4l33 14m-809 11l-33-1m83 5l-33 0m80 3l-30 1m139 0l-14 0m334-8l11-5m76 21l25-7m49-14l36-8m18 18l38 0m-869 79l-39 0m48-44l-37 0m187 44l-35-1m360-4l2-1m152 0l15-6m-643 45l-40 1m43-18l-39 0m30 63l-41-1m681 4l14-5m7-8l19-8m50 8l37-9m-107 57l18-6m-716 58l-44 0m61 19l-44-1m66-34l-43-1m520 1l1 0m201 31l20-8m-2-2l24-9m-728 38l-44 0m79 28l-44 2m291 4l-34 1m162-2l-5 0m211-9l11-4m-720 87l-47 2m109-18l-46 2m52-2l-46 1m450 16l-7 3m115 2l1 4m208-13l21-1m2-4l25-3m-13-13l29-6m6 27l38-5m-215 93l7 10m-410-7l-42 10m130 41l-37 15m144-66l-9 11m112-10l1 11m247 24l25 14m0-5l31 12m-827 38l-43 18m212-5l14 30m-1-16l-2 46m6-70l-4 24m29-16l-4 26m2-39l-8 17m11-11l-8 22m14-31l-10 18m19-18l-10 27m4-15l-18 34m34-53l-8 22m9-11l-17 29m28-26l-12 20m30-22l-2 24m1-28l-8 16m4-10l-15 21m10-5l-28 33m30-51l-41 19m593-21l34 16m-807 45l-41 22m157-62l3 21m-3-18l-1 2m18 2l15 21m-12-20l4 24m-2-22l4 6m-3 12l2 18m-6-18l-2 16m17-52l9 16m-6 7l11 13m-22-16l-1 27m2-5l-18 22m42-31l-8 11m30-38l-15 16m24 0l-18 38m25-45l-21 35m44-49l-25 14m25 0l-26 8m32 7l-22 17m38-10l-8 11m-10-45l-27 19m39-5l-21 15m18-14l-29 28m12-14l-47 20m50-39l-47 20m68-24l-32 17m33 4l-40 10m135-2l-28 23m219-23l3 24m63-25l6 24m32-25l9 24m24-19l12 25m43-24l21 24m-21-57l23 20m-527 9l-10 9m24 4l-18 7m23-5l-24 7m34-11l-19 8m11 18l-34 2m42-4l-29 4m37-13l-28 2m27-8l-33 4m33-17l-41 15m48-16l-38 8m61 3l-26 5m15 11l-37 2m50 15l-36 29m367-27l8 30m-646 13l-37 28m66-11l-37 29m217-100l-12-1m19-6l-8-6m28 27l-21 8m50-13l-18 6m2 14l-36 3m51-21l-21-1m44 22l-18-9m3-6l-48-6m500 28l16 33m-4-1l17 36m1-57l21 33m-5-29l27 32m13-27l34 32m-829 7l-37 29m72-16l-36 30m69-44l-36 30m55-34l-36 30m151-88l-19-12m16 25l-29-15m41 16l-18-11m21 14l-20-13m30 2l-14-13m2 15l-28-13m43 23l-19-1m26-19l-25-20m16 87l-33 32m47-79l-23-3m18-14l-29-32m52 95l-34 33m512-42l21 37m-602 8l-35 32m114-36l-34 33m43-22l-33 33m53-8l-32 34m67-59l-32 34m50-14l-29 36m48-45l-30 35m58-21l-29 36m47-26l-24 40m189-34l1 45m78-47l7 45m120-72l24 41m-412-1l-26 38m158-46l-2 45m19-45l-1 45"/>
<path stroke="#1c00e6" stroke-width="4" d="M0 0m2379 279l-14-29m35 21l-13-30m107 22l-2-31m-177 93l-21-24m31 11l-20-25m23 51l-19-21m46-2l-17-23m44 12l-16-24m51 20l-12-24m148 25l2-26m37 4l10-31m39 52l11-30m-401 122l-27-18m37 2l-25-20m62 11l-22-19m209 36l-9-14m122 33l-3-12m105-62l12-29m-4 63l6-24m39 14l11-30m0 43l11-27m-537 70l-28-18m193 47l-13-14m266 24l-2-12m190-44l12-29m17 49l12-28m17 35l12-29m-1087 77l-14-29m387 47l-29-15m367 6l-6-13m360-21l9-25m-6 21l8-26m17 16l11-29m28 50l11-29m-16 50l8-25m29 9l12-31m-1210 58l-17-28m32 20l-14-29m143 31l-3-32m546 89l-8-15m113-10l-3-12m91 53l-1-13m330-28l8-21m41-3l11-29m-12 32l11-28m3 33l11-28m65 48l11-30m-1448 91l-22-24m25 25l-22-24m83-22l-18-27m217 39l-6-30m251 80l-22-16m60 0l-18-16m356 29l-2-16m72 14l-1-15m19 5l0-13m515-29l12-29m32 75l15-21m-1570 54l-22-25m42 21l-20-25m325 13l-5-30m69 30l19-27m213 41l-18-14m108 42l-17-17m185-7l-4-21m63 22l-2-20m47 32l2-21m97 17l3-15m289 46l6-9m-1424 26l-25-21m387 9l-13-27m152 51l-25-16m67 16l-20-15m172-25l-17-15m36 54l-20-15m29 2l-18-15m39 18l-17-17m57-9l-16-18m21 22l-16-19m178 7l-3-25m40 25l0-25m42 23l3-23m-17 122l-7 15m24-5l-8 14m87-86l10-23m73 27l7-15m36 7l6-12m138 34l6-9m286-22l24-14m-1701 72l-24-22m78 20l-21-23m119 50l-23-12m294-46l-5-29m60 31l-27-18m97 37l-19-13m151 48l-22-14m28-3l-20-15m56-17l-19-17m50 16l-19-18m165 76l3 12m50 13l3 13m47-16l-5 14m26-6l-7 13m131-105l12-22m7 32l12-21m6 31l14-19m148 64l9-8m222 4l11-8m135-38l31-10m-32 37l29-8m-1788 19l-26-20m108 40l-23-21m79 48l-23-15m48 18l-23-8m68 43l-22 9m116-90l-22-17m62 12l-21-20m368 43l-22-12m44 23l-23-12m40 35l-25-11m37-18l-24-14m39-12l-22-17m124 84l12-2m-1-26l9 5m96 11l4 9m121 18l-11 4m171-75l20-16m-92 68l-17 6m27 3l-18 4m108-68l16-14m4 54l19-12m29 22l14-8m120-6l8-7m24 20l9-7m249-6l31-6m-1851 36l-27-18m71-16l-24-21m25 68l-27-17m129 10l-22-22m65 8l-24-9m37 40l-23 0m115 49l-17 21m42-31l-22 13m146-111l-20-20m138 62l-20-14m78 31l-20-13m129 3l-23-10m32-21l-23-10m35 42l-25-9m140 0l11-5m-2-1l12-4m6 35l13-8m228 10l-9 1m27 8l-11-1m679-23l30-6m-22 23l30-7m-1887 24l-29-15m44-4l-29-16m60-3l-26-19m76 33l-25-18m47 45l-24-20m40 4l-24-20m36-1l-23-21m23 32l-24-20m82 85l-25 8m46 5l-21 14m70-6l-14 23m21-34l-11 23m36 12l-10 27m18-26l-12 26m31-62l-13 24m35 3l-17 21m143-125l-23-13m156 25l-21-13m118 17l-20-9m113 40l-27-3m29 20l-26-1m103-54l12-10m248 54l-4-8m75-13l-14-3m44 12l-16-5m59 12l-18-5m24-6l-18-2m24-14l-19-3m110 28l25-3m-13-20l22-4m-13 51l21-1m13-31l16-3m15-2l13-5m355 28l26-3m9 0l32-5m-1864 31l-28-15m79-10l-25-19m68 69l-16 5m22-14l-18 5m81 12l-3 17m37 6l6 19m99-7l-18 20m66-34l-23 8m111-51l-23-9m199 10l-20-9m139-4l-23-2m27 16l-22-3m40-14l-25-2m31 15l-25 1m50 22l-24 2m129-45l11-16m135 32l4-15m26-2l-1-12m6 7l-1-10m22 17l-4-11m127 9l-16-8m144 41l24 2m12-19l18 0m9 35l14 0m6-39l13-2m95-4l11-3m183 23l17-1m77 1l31 3m0 24l32 3m-1880-6l-29-12m48-5l-28-15m145 77l14 14m44-8l10 18m-9-4l7 19m63-33l-25 13m179-58l-23-6m231 11l-19-10m119 35l-19-4m32-4l-19-4m27 11l-19-2m93 17l-21 8m98-90l10-18m159 58l1-20m114 7l-14-14m116 84l20 13m-86-79l-14-14m143 33l19 3m130-13l10-2m36 13l10-1m333-8l32-5m-21 17l33-5m-26 29l33 0m239-45l-2-22m63 29l1-19m41 21l3-20m1 2l4-23m-2373 105l-32-7m52-25l-30-11m282 59l13 14m27 3l-12 23m47-37l-26 12m42-8l-29 7m65-27l-23 8m84-22l-25-1m66-9l-23-5m204 9l-19-10m152 17l-16-5m131 43l-14 5m44-21l-17 14m22-14l-17 15m123-81l6-20m36 33l4-21m95 31l-4-20m26-2l-8-19m107 110l13 14m7-43l19 13m-13 14l13 10m281-60l10-1m2-6l11-1m-1 18l11 0m302 18l32 9m136-79l-6-21m275 14l7-21m8 16l9-23m22 50l10-19m28 20l15-21m-2531 98l-33-6m105-25l-30-10m31 36l-30-9m33-12l-30-11m31 49l-31-6m66-51l-19-16m208 65l15 5m15-2l-29 5m67-7l-29-3m41 19l-30-7m32-10l-31 1m63 22l-19-4m21-11l-21-1m295-43l-19-10m306 79l-8 3m92-12l-6 16m37-10l-3 18m41-4l1 15m46-27l3 21m5-19l4 20m42-19l6 17m29-17l8 14m149-51l11 5m-8 2l10 5m203 22l11 1m343 15l29 14m-69-69l-17-18m185 25l-3-7m200 28l8-4m54 5l7-5m-2213-2l2-16m47 50l16-9m34 2l12-15m135 6l-19-6m32 31l-21-8m130-32l-23-9m59 22l-22-12m325 35l-12-3m169 5l-4 6m245 13l5 8m721-19l29 15m-9-20l31 12m-116-74l-19-18m172 62l-5-8m124 22l9-4m14-7l9-4m29 28l8-3m1 0l8-4m0-29l8-3m27 13l7-4m-3 15l7-4m5 0l7-3m2-16l7-4m-8 37l6-4m16-6l6-5m26-12l7-5m3 6l5-6m27 12l6-6m142-6l22-10m-2518 70l-31-5m67-51l-16-22m-2 82l-31-3m66-26l-18-24m52 27l-9-24m93 9l12-16m28 7l-1-21m3 53l0-21m47-9l-23-17m47 59l-13-14m-8-8l-23-20m55 30l-13-11m69 20l-21-11m59 3l-22-10m45 13l-22-10m171 31l-19-11m230-12l-12-3m20 35l-11-3m419-8l4 6m295 2l10 4m33-7l10 4m193 45l29 15m303-73l10-5m15-2l11-4m23 10l10-4m20 9l8-4m11 2l8-5m25-15l8-4m-4 24l7-5m-3 17l6-6m1-15l6-5m82-15l5-5m-1 13l5-6m12 2l4-7m18 33l4-8m-2441 37l-33-4m77-12l-30-10m172 11l-19-24m-2 78l-30 1m82-69l-8-24m53 25l7-20m13 15l1-20m45 45l-9-23m7-14l-16-23m40 52l-13-19m18 14l-11-19m30 18l-14-17m18 9l-15-15m36 23l-17-15m123 34l-23-9m215 30l-19-8m203 5l-10-2m254 37l2 4m328-43l7 4m151 1l11 7m14-4l13 6m236-2l-27 0m191 2l11-6m-6 6l11-6m21-8l11-5m-12-11l11-6m-7 19l11-5m22 10l11-6m-1-6l11-6m13 7l11-5m-9 33l10-7m-4 7l10-7m9-18l10-5m-6 17l10-5m29 8l8-7m62-4l6-7m27 20l5-9m8-2l4-8m4 25l3-10m37-8l3-9m27 12l4-9m17-2l3-9m9 26l4-10m134 29l20 0m-2607 10l-32-3m37 22l-33-1m43-26l-31-6m74 22l-30-8m106 19l-29-6m32-19l-30-6m60 14l-30 0m56 16l-29-1m85 1l-21-16m36-23l-18-15m29 1l-15-18m29 17l-12-20m67 31l-12-23m83 40l-21-14m219 4l-21-9m42 22l-19-10m113 44l-17-7m133-2l-12-4m105-1l-6-1m75 14l-2 2m145 17l3 4m580 38l23 22m1-35l25 21m188-23l29 13m-26-15l30 14m-93-65l-21 0m127-18l11-7m114-4l11-7m11 12l10-8m6 23l9-9m-5 1l9-8m1-6l9-7m7 5l8-8m1 45l8-10m36 0l6-10m-5 20l5-10m2 3l6-10m-6 17l5-12m12-28l6-8m-4 22l5-10m17 7l5-9m7 26l4-11m7-12l5-10m-3 32l4-11m12-4l3-10m15 15l3-10m40 25l4-11m4-9l3-11m-2399 102l-33 2m92-9l-30-7m67-31l-29-9m39-1l-28-8m207-6l-15-21m94 22l-20-17m110 34l-23-10m675 42l3 5m99 26l4 5m208 7l9 9m117 5l17 17m162-38l24 22m30-18l23 23m135-58l29 12m-77 9l-22 0m130-57l12-8m-7 35l11-8m21-2l11-9m-8 13l11-9m1-14l11-7m-6 46l11-9m2-31l11-8m-4 46l10-11m2-29l11-8m-5 39l9-11m10 14l9-10m12-12l8-11m5 22l9-10m49-5l6-11m28 37l5-12m35-4l4-12m-4-11l4-11m35 12l4-12m0 54l5-12m1 7l4-13m-4 17l3-12m0 8l4-12m-3-19l3-12m17 3l4-11m21 15l4-11m109 65l8 1m-2377 20l-27-11m49-8l-28-9m76 36l-25-13m315 11l-23-13m192-22l-18-10m178 22l-13-6m283 38l2 4m287 30l9 10m183-9l18 25m208-17l24 21m97-48l-17 3m118-26l10-11m5 0l10-11m1-2l11-9m-8 5l11-10m4 13l10-10m0 33l9-11m64 8l9-12m29 7l6-13m37 8l4-14m27 5l4-13m4 9l4-12m11 13l5-13m-5 40l5-13m50 46l7 8m91-27l5 2m5-14l6 3m23-17l6 1m19 39l13 9m-3 2l16 11m-2349-22l-27-10m254-4l-23-12m71 35l-24-14m28 19l-24-15m70-19l-23-16m85 31l-18-24m101 17l-18-12m127 48l-13-9m142-11l-8-3m296 18l4 6m267 79l16 28m403-46l22 24m-21-104l-22-10m79 18l-15 4m59 38l-8 8m4-38l-13 8m42 29l-8 8m73-68l9-11m-11 81l-5 12m17-16l-6 13m35-70l8-12m-2-13l9-12m7 15l9-12m51 33l7-13m-7-11l7-13m-13 97l0 11m38-19l1 10m30-8l2 7m114-16l3 3m-2228 36l-30 5m488-59l-15-27m96 8l-13-19m198 71l-8-4m386 51l10 17m212 3l17 28m121-44l18 27m104-3l20 25m52-39l21 24m24-91l-17-10m167 13l-7 8m90 17l-3 8m341 28l14 21m21-67l13 16m-2256 80l-26 19m251-127l-25-15m52 45l-28-14m87-6l-24-20m37 0l-23-22m38 60l-24-20m66-24l-17-26m32 15l-16-27m13 77l-19-23m37-24l-13-28m30 46l-11-28m22 10l-10-27m23 53l-8-27m31 0l-5-27m97 82l11-21m-5 21l10-20m-23-9l-2-18m3 19l-2-17m212 57l0 1m370 61l14 29m224-29l16 28m112-43l20 25m52-98l-21-15m71 31l-14-5m321 42l-2 5m124-24l2 6m93 40l12 24m-2138 8l-26 20m205-57l-29-9m86 12l-31-7m60-7l-30-10m50-9l-27-16m35 24l-29-12m33 31l-28-14m37-30l-26-17m64 40l-24-17m31 45l-25-11m44-26l-19-19m108 21l-2-20m69 33l14-18m11 23l18-14m-4 18l18-13m-7-19l1-12m86 50l1-6m26 3l4-6m839 46l21 24m5-2l21 24m60-11l22 25m-19-40l-7 19m59-16l-4 19m113-10l-1 21m1-89l-3 5m131 63l5 26m80-69l6 19m8 2l9 26m-1965 6l-29 12m118-39l-29-6m66-5l-30-6m37 23l-30-4m31-1l-31-3m84-29l-30-8m30 29l-31-3m87 32l-28 1m43-62l-27-11m236 79l19 4m-3-58l21-7m1 8l17-8m-12 47l16-1m286 36l14 29m584-31l20 25m47-12l18 27m150-47l-3 26m-1538-28l-30-4m67 1l-32-1m59 23l-32 4m35 26l-30 9m70 8l-28 14m31-10l-28 15m32-80l-30 5m40 65l-26 16m53-23l-25 17m93-44l-16 13m38 23l-9 21m26-63l-7 13m22 37l-2 24m15-84l-1 11m130-11l5-1m142-30l25-17m-3 7l27-14m615 89l18 27m6-36l16 28m-1224 4l-29 7m51-28l-30 9m59 12l-29 13m41 2l-27 16m107-6l-18 24m125-24l0 24m273-115l26-18m16 47l29-16m26 27l31-11m41 88l16 29m33-56l16 29m1-2l16 29m63-26l18 29m66-35l9 32m142-18l16 30m-1-56l15 29m-1168-42l-32 0m70 7l-27 1m158 28l-22 22m52 14l-17 24m60-13l-11 27m12-64l-15 12m23-33l-14 18m21 1l-14 10m56-21l-10 12m48-30l-4 12m13-18l-5 10m145-41l10-7m95-12l27-17m43 58l29-16m-6-2l30-13m-22 13l30-12m-24 2l31-11m75 116l16 30m57-45l17 29m105-36l12 31m-1029-48l-33 0m173 38l-26 6m87-6l-21 20m241-28l-4 0m66-11l2-3m67-5l13-8m183 76l14 28m145-29l23 26m56-41l16 30m-14 5l17 31m39-62l16 31m-1063-20l-35-1m980 11l32 14m-874-4l-34-2m84 7l-32 0m82 4l-30 0m155 0l-15 1m360-14l11-5m90 19l26-8m59-14l36-9m20 27l37 0m-945 79l-38 1m49-45l-37-1m189 44l-35 0m397-5l3-1m164-5l14-5m-697 51l-39 1m43-19l-38 0m27 62l-40-1m735 0l15-6m11-10l18-8m69 7l38-10m-127 61l18-7m-778 65l-43 0m60 18l-44 0m67-35l-42 0m563 1l2-1m219 24l21-8m1-3l24-9m-796 47l-44 0m79 30l-44 1m301 4l-35 1m192-3l-4 0m226-13l10-4m-777 93l-47 2m110-18l-46 2m52-3l-46 2m489 17l-8 3m124 3l1 3m228-17l20-1m7-6l25-2m-9-17l28-5m16 27l39-5m-247 108l7 9m-459-6l-42 11m135 45l-37 15m172-70l-8 10m121-9l0 10m272 28l25 13m6-6l31 13m-901 43l-44 18m270 7l14 31m-17-1l-2 46m4-92l-3 24m28-14l-4 26m-2-48l-9 18m12-7l-8 22m12-35l-10 19m19-10l-9 28m-5-9l-17 35m43-66l-7 22m-1-4l-17 29m33-35l-11 21m39-19l-3 25m-4-37l-8 17m-3-6l-16 21m-2 7l-27 34m16-66l-40 19m667-24l35 16m-883 51l-41 23m201-64l4 20m-8-36l0 1m33 22l16 21m-24-17l5 24m-3-40l5 7m-6 23l2 17m-10-19l-3 17m29-53l10 16m-5 4l11 12m-34-1l-2 26m-14-9l-17 21m51-41l-8 10m23-32l-14 17m20 21l-19 37m23-47l-20 36m39-71l-26 13m25-5l-27 8m37 16l-21 16m51-15l-9 12m-28-38l-27 18m45-8l-21 15m10-1l-29 27m-6-21l-46 19m49-38l-47 19m83-26l-31 17m24-3l-41 11m148 10l-29 24m251-23l2 24m67-25l6 24m35-25l10 23m26-17l13 24m51-24l22 24m-20-61l22 21m-559-3l-9 8m15 3l-18 7m17-5l-23 8m38-11l-19 8m-4 12l-35 2m48-2l-30 4m39-15l-27 2m21-6l-34 4m26-6l-42 14m52-22l-38 8m73 0l-25 4m3 9l-37 1m51 43l-37 29m412-26l8 29m-691 12l-38 28m67-10l-38 28m243-129l-11-2m22-10l-9-6m16 41l-22 7m54-14l-17 6m-17 11l-35 2m65-24l-22 0m48 13l-19-10m-26-2l-48-5m564 66l15 32m-2 3l18 35m4-59l22 34m0-31l27 33m20-28l35 32m-901 4l-36 30m72-16l-36 30m69-44l-35 31m54-35l-36 30m168-130l-19-13m6 23l-29-15m52 20l-19-11m20 12l-20-13m36 2l-15-13m-11 15l-28-13m52 35l-19 0m20-39l-25-19m8 138l-34 33m58-115l-22-2m11-44l-29-32m47 160l-34 32m567-37l21 37m-658 3l-34 32m114-35l-33 32m43-21l-34 33m55-7l-32 35m67-60l-31 35m52-13l-30 37m48-47l-31 36m60-21l-30 37m53-23l-23 41m213-30l2 46m83-48l6 46m138-77l24 42m-462-5l-27 39m183-40l-1 45m19-45l-1 45"/>
<path stroke="#e6001c" stroke-width="4" d="M0 0m2544 331l6-31m-154 44l-16-27m87 19l-8-27m120 55l2-25m-249 57l-24-21m362 31l5-24m52 46l7-25m30 28l11-28m-483 54l-26-18m65 41l-16-17m75-6l-15-14m233 30l-3-12m18-3l-2-12m140 1l6-24m49 44l8-25m43 31l11-30m-980 79l-7-32m402-7l-24-16m232 37l-8-14m327-5l6-20m73 41l8-24m21 16l12-30m44 51l12-30m-1184 58l-18-27m125 23l-10-31m343 17l-29-15m49 19l-24-16m293 52l-6-14m339 10l2-11m80 21l3-11m58-31l12-30m24 65l10-23m10 14l11-28m8 31l10-30m-1322 50l-20-26m23 44l-19-26m248 46l7-31m202 14l-27-16m364 14l-5-15m58 8l-3-14m78 28l0-14m13 4l0-13m163 4l2-11m250 39l6-14m20-7l11-23m4 14l12-28m-1453 110l-24-22m36 10l-23-24m28 10l-23-23m492 29l-28-15m44 20l-24-16m159 4l-17-15m181 37l-10-20m33 25l-8-22m26 20l-8-22m26 15l-5-21m29 23l-1-21m44-3l0-17m28 16l1-17m34 43l4-18m134 24l3-12m339-28l11-19m-8 37l11-12m45 3l23-21m-11 31l24-21m-11 33l27-19m-1600 66l-24-22m171 16l-20-23m191 25l-14-27m50 40l-5-30m131 20l-28-15m29 5l-29-15m32 37l-26-17m37-27l-28-15m38 19l-26-14m177 38l-19-15m64 2l-18-16m97 41l-15-23m22-1l-13-22m51 9l-12-21m20 39l-10-24m87 37l-1 16m12-8l-2 16m9-29l-5 15m27-33l3-24m5 57l-5 15m65-17l7-25m11 25l10-22m76 16l8-15m208-1l6-9m194 27l12-8m44-3l30-13m-28 23l31-10m-1652 39l-26-20m99 39l-22-22m150 22l-25-9m300-2l-22-23m51 17l-24-17m92 6l-20-13m155 3l-19-16m20 54l-22-15m33-2l-20-16m25 28l-22-16m52 28l9 3m27-41l6 9m200-10l-6 15m33-5l-9 14m29 3l-11 12m66-12l-14 10m27-5l-15 9m15-22l15-19m20 38l16-17m80-27l7-10m111 18l7-8m84 26l8-8m-1491 58l-27-19m51 13l-24-21m125 13l-21-21m121 48l-22 12m28-30l-24 3m75 10l-25 1m216-5l-19-19m50-13l-19-23m123 69l-20-13m37-13l-21-12m113 6l-22-14m32 3l-23-13m38 50l-26-10m48-26l9 1m-5 28l11-2m3-20l9 2m223-14l-5 11m127 13l-15 7m127 14l17-10m95-31l7-9m14 52l9-7m255-7l25-8m-1687 28l-27-19m264 16l-19 16m152 19l-24-9m270-11l-19-13m119 17l-23-11m29-1l-24-10m27 8l-23-11m63 47l12-10m-5-8l12-7m104 27l8-6m11-34l7 1m58 32l2-3m252-5l-18 1m42-16l20-10m-18-2l18-11m404 21l28-5m-22 0l29-7m-1752 92l-29-14m121-3l-25-18m82 38l-20 6m32-45l-23-21m34 23l-22-21m48 52l-12 16m63-26l-11 25m20-31l-11 26m23-49l-12 25m31 6l-12 27m50-51l-19 18m28 3l-18 20m45-30l-22 13m59-28l-24-2m421 7l-26-6m51 41l10-15m117 12l8-11m21-31l5-5m174 36l-11-6m19 10l-12-7m94-1l-18-4m137-22l14-7m369 47l30-1m-1793 47l-30-12m41 20l-30-12m42-27l-28-16m75 38l-27-16m39-1l-27-16m36 32l-27-16m40 17l-24-20m181 3l-7 23m39-36l-10 28m37-1l-16 23m33-26l-17 22m58-11l-21 14m34-4l-23 11m192-46l-21-12m130 13l-21-9m176 37l-23 2m92-6l11-17m126 16l5-14m117 2l-8-12m153 29l23 5m8-15l20 1m-5 7l18 2m14 0l15-1m28-8l12-2m3-8l12-2m348 2l33-2m-1821 45l-30-11m107-3l-28-15m31 44l-19-11m29 9l-7-1m8-3l-11-2m131-7l2 21m64-5l-15 22m51-45l-23 15m26-21l-23 16m43-2l-22 21m38-27l-20 17m32-24l-21 15m28 7l-22 13m58-17l-23 7m53 9l-24 0m324-25l-19-6m104 2l-22 3m86 1l10-18m2 37l8-19m1 26l8-20m77 10l8-19m2-8l5-17m1 26l7-17m22 14l3-17m193 35l-15-14m133 34l13 4m-11-37l15 1m37 18l12 0m-3-31l12-1m400 38l32 3m240 3l-7-26m227 23l7-25m-2305 55l-30-11m74 15l-30-11m40 18l-9-13m239 20l-27 10m48-49l-25 14m46 25l-30 4m32-38l-28 11m42 21l-22 5m23-22l-22 7m59-21l-23 6m57-12l-24-1m137 32l-22-10m49-9l-21-11m381 21l-13 16m41-17l-11 20m12-34l7-20m22 41l7-20m71 37l2 23m5-57l-1-21m47 51l6 22m4-48l-5-20m171 27l14 7m61-25l12 1m20 20l10 0m68 18l10 0m361 1l31 9m130-11l-8-17m31-7l-10-23m11 34l-7-18m123-2l-2-14m105 4l2-17m41 26l4-15m55 42l7-10m9 4l10-15m-2393 71l-31-8m37-21l-30-10m53 15l-30-9m38-4l-30-10m37 32l-30-10m37 32l-30-9m54-10l-15-18m71 2l16 2m116 14l-25-6m37 4l-28-3m37 25l-26-12m133 5l-21-4m280-18l-19-10m230 19l-12 0m30 3l-11 2m249-13l3 18m8-2l4 14m92-33l9 12m1 14l8 8m47-49l11 8m182-2l10 1m715 35l8-3m239-10l21-14m-2485 54l-32-7m38 3l-31-7m97 6l-30-9m39 20l-31-7m38-4l-15-22m18 13l-11-20m42 32l16-8m90 15l3-20m48 25l-14-23m98 24l-14-8m22 6l-15-8m36-16l-20-5m131 15l-23-9m46 27l-22-9m189-3l-18-10m172-12l-12-2m160 20l-2 7m55 1l1 8m48-11l2 9m10 12l2 7m6-35l2 10m18 8l4 8m229 1l7 4m313-41l24 8m187 12l-20-10m36-4l-15-11m186 33l10-4m28 9l10-3m64-18l8-4m-2 13l8-4m90-14l6-4m20 21l5-5m-2317 32l-31-7m35 43l-31-8m63-22l-30-9m43 44l-30-8m64-6l-31-5m75-23l15-12m-2 17l14-13m75 40l-1-22m30 22l-7-24m16 14l-10-24m36 34l-18-22m50-8l-25-17m40 36l-15-12m26-9l-16-10m22 21l-18-10m84 5l-22-9m135 30l-21-11m56-15l-21-10m629 49l4 5m28-38l5 5m211 26l8 5m411-30l29 14m-16-12l29 14m-22-23l-25-5m215 38l10-5m68-33l9-3m4 1l9-4m7 4l9-3m6 8l8-3m35 26l6-5m13 16l5-7m16-11l5-6m3 26l5-7m-4-24l6-5m-2 16l5-6m-4-19l6-5m4 36l5-7m4-9l5-6m51-4l4-7m17 29l4-8m98 23l20-4m-2507 33l-33-1m45-18l-31-6m87 18l-30-8m61-6l-30-5m41 6l-31-5m67 43l-30-2m38-22l-14-24m20 37l-20-23m26 10l-8-24m61 52l-17-25m21 21l-15-26m50-11l-3-23m9 54l-13-27m35 13l-15-26m26 29l-10-21m56 16l-13-19m62 41l-19-16m488-21l-9-1m350 2l4 5m11 26l4 5m31 1l5 4m89 1l7 5m285-17l24 21m-8-36l23 22m103-14l30 13m60-9l29 14m-28-45l29 14m11 5l-11-4m85 1l11-5m-2 27l11-7m20-32l11-4m82 26l10-5m-2-13l9-5m-2 41l8-8m-6-24l9-5m20 27l8-6m23 21l7-8m2-5l7-7m27 2l5-8m37-3l4-8m16 20l4-9m-4 18l4-9m24-25l4-8m55 16l4-9m86 5l15-2m-4 29l20-1m-2451 50l-29-10m132-25l-30 0m56 43l-29-5m69-13l-23-11m64-6l-11-22m29 52l-12-23m29 24l-13-22m40 23l-12-22m46-17l-18-17m116 24l-21-13m433 17l-8-2m156-9l2 4m79 14l2 4m225-2l6 5m88 1l8 7m50-7l12 8m280-18l27 18m85-28l-25 1m73 37l10-8m13-32l11-6m31 7l12-5m4-1l11-6m-10 9l11-7m-7 48l11-8m39-34l11-6m56 33l8-9m24-17l8-8m49 53l4-11m22-16l5-10m54 20l4-11m7 9l4-11m22 2l3-11m-1 36l2-12m-2315 62l-32 5m108-27l-29-9m50 31l-28-10m133-6l-21-17m89 16l-16-21m19-5l-13-22m50 31l-16-20m756 26l2 4m126 18l4 6m367-23l22 24m18-28l24 22m99-6l24 22m175-12l11-9m-3-20l11-9m-9 36l11-9m33-4l10-10m-10-14l10-9m6 18l11-9m-8 24l10-10m90-12l8-10m12 36l6-12m15 4l6-12m9 28l6-12m35-12l5-12m-3 30l4-12m23-13l4-12m20 36l4-12m3 0l4-12m19 7l3-12m9 10l4-12m152 27l19 8m-2441 22l-32 2m89 0l-29-9m64 5l-28-9m42 6l-28-11m43 24l-28-9m378 13l-22-13m35 25l-22-15m52 25l-19-19m30-11l-21-13m1160 21l23 23m121-20l28 16m28-25l-17 3m19 3l-16 4m26-30l10-10m-9 36l11-9m-5-5l11-9m8 39l9-11m6 17l10-11m26-9l10-11m12 3l10-11m-1-8l9-11m-5 29l9-11m1 14l9-11m-1 9l9-11m-5 4l9-11m-6 27l8-12m28 15l7-13m3-6l7-12m-3 2l8-11m40 23l6-13m22 24l5-13m24 35l5-13m44-16l5-12m30 18l7 7m25-29l8 5m-2237 85l-31 8m52-8l-31-2m32-1l-31-3m70-14l-27-10m47 13l-27-11m116-3l-23-15m303 2l-20-18m98 40l-18-14m493 2l4 6m72 26l7 11m458-33l20 26m31-5l25 21m121-16l-21-15m33 13l-19-9m87 6l-9 6m14-34l-11 7m19-10l-12 8m32-8l10-10m32 44l-7 11m19-25l8-12m5 1l9-12m-8 28l8-12m6-11l8-13m21 3l9-12m-8 27l8-13m32 1l6-13m13 30l7-13m2 5l6-13m0 23l7-13m19 7l7-12m50-6l6 11m153 33l16 19m10-41l18 17m-2284 48l-30 11m320-25l-26-12m73 24l-24-19m35 5l-23-20m33 38l-22-22m38 2l-22-22m62 16l-17-26m26 46l-17-26m17 20l-17-26m42 27l-12-29m23 21l-10-29m239 37l-8-4m91 20l-1 0m72-45l3 5m185 39l7 21m305-42l18 27m273-48l23 22m48-17l-17-9m156 34l-5 7m41-14l-4 8m59-27l-3 10m74 8l0 6m-1992 17l-31 8m68 1l-30-1m54 22l-30 0m214-9l-25-13m56 25l-28-12m66 19l-28-13m37-22l-25-19m35 58l-27-17m29-6l-25-19m63 27l-22-22m37 10l-22-22m81 38l-12-26m20 3l-9-27m10 41l-10-27m30 19l-4-28m6 46l0-28m30 22l1-26m10 12l0-24m92 50l-3-9m229-32l5 7m173 34l14 29m15-38l12 30m285-37l15 29m89-21l20 25m269-33l-6 4m9 16l-5 4m47-13l-4 5m72-26l-3 6m260 4l12 21m-2017 38l-28 16m62-10l-29 2m148-1l-28-9m63-28l-29-11m39 52l-31-6m93 6l-30-9m53 3l-28-12m53 8l-25-13m38-21l-17-24m69 42l-8-21m15 2l-3-26m6 64l-4-17m22 6l6-20m71-2l6-14m33 55l3-7m187-8l15 1m123-17l17 27m196-12l12 30m454-30l-9 23m18-29l-8 19m25-4l-8 26m108-45l-4 9m67 17l0 25m46-54l-2 11m13 16l3 27m85-72l0 10m15 15l6 26m-1734 8l-27-10m70 17l-31-6m59-10l-31-7m53 26l-31-2m61-14l-30-8m41 29l-30-1m43 2l-29 0m46 0l-27 0m40 15l-25 1m52-27l-16-6m90 0l17-10m43 1l11-8m167 34l23-13m361 10l11 30m32-33l11 30m372-41l18 27m186-35l-2 26m-1482 54l-31 2m56-31l-31 2m75 19l-29 12m46-13l-29 9m30 0l-27 15m61-12l-23 19m32-18l-20 21m23-32l-20 19m31-8l-16 22m26-20l-14 23m27-62l-15 4m55 6l8 14m15 16l10 19m17-25l13 12m-2-24l14 8m1-14l12 5m29 7l6-3m46 1l16-11m13 5l21-15m2 6l25-14m5 34l27-16m587 13l18 27m-2-17l18 28m-1-43l17 28m-1144 7l-29 1m60 9l-30 5m87 4l-26 18m83-15l-19 25m23-34l-18 25m27-11l-14 28m16-56l-15 26m82-33l1 24m2 5l-2 21m51-39l5 12m-2-24l8 11m28-2l3 3m411-11l15 29m106-13l12 31m155-48l15 29m-1084 23l-34 1m51 40l-28-2m29-45l-31-1m114 7l-28 11m51 5l-26 14m88-25l-17 26m28-21l-16 27m19-11l-15 26m122-20l-9 6m213 2l28-14m125-30l11 30m193-10l14 31m62-9l13 32m-955 10l-34-2m254-5l-18 16m308-19l24-13m73-15l31-4m51 12l17 28m-7-7l23 24m28-20l23 25m110-33l17 31m2-35l17 31m-919 16l-35-2m823 17l35 6m-26-26l32 15m-30-5l34 11m-13-31l30 19m-843 38l-36 1m82-3l-35 0m417 4l2-1m317-13l36-4m-764 78l-38 1m380 16l-3 0m273-10l22-9m-20 12l22-9m-18 53l26-9m-714 48l-42-1m92-1l-41-1m53-12l-40 0m217 13l-36 0m-147 30l-42 0m202 50l-40 1m489 10l16-6m-294 72l-8 0m319-30l23-9m-2 33l31-11m-728 64l-46 0m55-19l-46 0m51-12l-45 0m708 27l22-6m0 36l26-3m-18 35l27 2m-726 0l-46 6m201 39l-44 10m303-8l-5 10m36-10l-2 10m159-12l10 9m87-9l26 9m-685 37l-45 13m81-12l-44 15m60-56l-45 12m60 31l-45 13m80-16l-45 13m76-11l-44 13m201-14l-36 14m135-16l-4 14m34-14l-2 14m194-11l14 14m81-15l42 9m-782 4l-45 14m69 15l-43 18m70-14l-43 18m91-12l14 7m3-24l14 18m-13-15l10 26m3-18l2 24m-2-31l-4 14m12-18l4 38m-2-31l-11 26m12-33l10 21m-1-14l4 36m-1-41l-10 23m16-33l-6 19m14-17l-19 26m20-9l2 28m-1-38l-26 31m27-40l-25 34m44-33l-27 39m33-38l-22 39m43-33l-21 17m468-10l16 19m30-43l28 16m-746 39l-42 20m54-3l-41 22m42-25l-42 21m118-46l17 22m-1-25l14 27m-9-18l9 21m-7-22l-1 17m5-28l5 22m-2-17l3 39m0-41l15 11m-8-9l-6 28m20-31l4 11m1-9l-3 29m4-14l-9 18m17-11l-2 12m4-40l-8 21m21-7l-11 15m13-4l-11 18m41-42l-11 17m15 23l-20 13m23-15l-4 11m10-18l-22 2m38-27l-25 21m28-22l-24 24m27-26l-10 20m17 18l-17 4m19-28l-31 14m32-9l-31 23m38-46l-9 16m10-6l-19 10m19-10l-13 21m15-14l-27 13m40-3l-20 15m24-21l-37 22m38-13l-35 2m46 8l-41 13m43-14l-52 25m222-30l-3 24m263-37l27 22m-779 33l-41 23m104-24l-40 24m215-23l-11-2m38-15l-14 3m31 11l-24 0m33-5l-26 7m52-18l-36 6m47 19l-27-2m31-21l-25 11m78 6l-35 29m99-26l-7 29m228-30l11 29m58-18l22 31m-19-54l23 28m30-14l40 25m-766 3l-39 26m223-11l-3-3m9-4l-23-4m26 15l-19 0m23 3l-14-3m21-26l-30 7m35 29l-19-13m38 18l-33-5m35-39l-42-11m45 12l-30-6m36 16l-18-12m21 44l-26-11m29-1l-22-10m29-7l-41 1m41 13l-21-5m32-11l-25 5m58 10l-34 32m133-38l-5 34m292-49l25 32m-527 15l-13-10m17 26l-27-23m31 33l-14-12m14-16l-21-12m28 6l-20-25m29 45l-9-9m10 16l-9-9m10-2l-21-16m40 17l-10-9m12 7l-28-18m30 19l-38-16m42 14l-23-11m196 20l-6 39m234-37l14 39m-574 1l-34 32m44-49l-35 32m46-31l-34 32m45-15l-33 33m35-41l-34 32m111-9l-33 33m148-46l-31 35m81-27l-27 38m235-41l5 44m38-45l9 44m4-47l10 44m-5-48l11 44m26-57l17 42m-424 18l-25 40m88-41l-27 38m127-40l-6 46m125-56l3 46"/>
<path stroke="#800080" stroke-width="4" d="M0 0m2550 300l6-31m-176 48l-16-27m95 19l-9-26m131 56l2-25m-275 61l-23-21m390 28l5-25m54 46l8-25m33 25l10-29m-519 65l-26-17m75 41l-16-17m76-3l-15-15m245 33l-2-12m18-3l-2-12m148-11l6-24m51 43l8-25m46 26l11-30m-998 77l-6-32m384 9l-25-17m249 40l-8-15m341-10l7-21m74 38l9-24m24 10l11-30m45 51l12-31m-1214 62l-19-28m134 20l-9-30m323 32l-29-15m54 18l-25-16m312 54l-6-14m347 13l1-11m82 21l2-10m68-51l12-30m22 72l9-23m12 9l11-29m7 30l11-29m-1353 53l-21-25m25 43l-19-26m274 41l6-32m169 30l-28-16m387 15l-6-15m61 9l-4-13m82 27l-1-14m14 5l-1-13m166 6l2-11m254 36l7-13m24-17l11-23m5 9l11-29m-1488 117l-24-22m37 8l-22-23m27 10l-24-23m488 37l-28-15m48 19l-25-16m167 5l-17-15m188 32l-11-20m36 23l-8-22m26 20l-7-21m28 15l-5-21m33 23l-1-22m45 2l1-18m28 17l0-16m38 41l4-18m133 30l4-13m346-34l10-19m-7 44l11-13m57-5l22-22m-9 32l25-20m-9 34l27-18m-1651 62l-24-22m175 15l-20-22m197 20l-15-26m60 36l-5-29m108 34l-29-15m29 5l-30-14m36 34l-25-16m34-26l-28-14m40 19l-26-15m184 38l-18-15m64 1l-17-16m99 34l-16-22m25-1l-13-21m52 9l-12-21m22 36l-10-25m96 78l0 16m10-8l-2 15m6-29l-4 16m34-73l4-24m-4 96l-5 16m77-58l7-25m14 28l10-23m74 24l8-15m206 5l6-8m200 27l12-8m62-8l30-12m-27 25l30-9m-1708 28l-26-20m103 37l-22-22m147 35l-24-9m302-16l-22-24m49 24l-24-17m96 10l-21-14m157 1l-19-16m17 55l-22-14m35-4l-21-17m24 29l-21-16m82 47l8 4m25-36l5 8m189-3l-5 15m29-6l-9 13m27 2l-11 12m63-14l-14 11m26-7l-15 10m45-51l15-20m21 41l15-17m72-20l7-10m111 20l6-9m86 27l8-8m-1526 47l-26-19m53 11l-24-22m128 14l-22-21m121 81l-21 11m25-38l-24 3m74 8l-25 0m222-24l-20-19m51-17l-18-23m121 79l-21-12m37-13l-21-11m112 3l-22-13m31 3l-23-13m35 53l-25-11m82-14l8 1m-2 25l10-3m2-15l10 2m208-5l-5 11m117 9l-16 8m160-4l17-10m85-30l8-8m15 53l9-8m271-7l25-7m-1739 16l-27-19m272 51l-20 16m148-6l-23-10m274-14l-20-13m116 19l-23-11m28 0l-23-10m27 7l-24-11m99 48l11-10m-4-5l11-8m101 29l9-6m9-27l6 0m54 29l2-2m232-2l-18 2m80-28l20-10m-20-3l18-12m414 28l28-5m-21-2l29-7m-1810 85l-30-13m126-8l-26-18m88 62l-20 5m29-71l-22-22m34 24l-23-21m59 89l-12 16m64-17l-12 25m21-30l-11 26m22-50l-13 26m32 7l-12 26m43-59l-20 19m30 4l-17 20m40-37l-21 13m56-43l-25-3m420 4l-27-6m88 32l11-15m114 16l7-12m19-24l4-5m159 35l-12-6m19 9l-12-7m88 2l-18-5m169-24l14-7m385 53l31-2m-1854 37l-31-12m42 20l-29-13m43-30l-28-16m76 38l-27-15m39-2l-27-16m36 32l-27-16m43 13l-25-20m199 46l-7 22m36-30l-11 27m32-5l-17 23m33-27l-17 22m54-19l-22 15m33-8l-22 11m193-69l-22-13m131 17l-21-9m174 48l-24 3m127-26l10-17m121 19l6-14m103 4l-9-12m185 46l22 6m6-20l20 2m-7 7l17 2m12-3l15-1m25-9l12-2m3-8l11-2m370 2l32-2m-1883 36l-30-12m109-6l-27-15m39 48l-20-11m42 19l-8-1m5-4l-10-2m143 16l2 20m47-3l-15 22m43-52l-24 15m27-20l-23 17m44 2l-22 21m40-31l-21 16m32-25l-21 16m27 4l-22 12m57-22l-24 7m53 2l-25 1m330-32l-20-6m102 11l-21 4m117-21l9-19m1 37l9-20m0 26l8-19m77 10l7-18m0-7l5-17m3 26l7-17m18 14l2-17m176 38l-14-13m160 51l12 4m-8-40l15 1m34 17l11 0m-2-32l12-1m420 42l33 4m200-27l-7-26m241 24l6-24m-2341 68l-29-11m73 15l-29-12m60 17l-9-13m221 43l-27 9m50-44l-24 14m40 15l-29 4m33-31l-28 12m48 14l-21 5m22-20l-23 6m59-21l-24 5m57-18l-24-1m139 23l-22-10m50-10l-21-11m389 48l-13 15m43-12l-11 20m30-74l6-21m23 42l6-21m67 81l2 22m2-100l-1-20m54 93l6 23m-7-91l-5-20m190 54l13 6m60-30l12 2m18 18l11 1m67 17l10 1m382 9l31 9m91-37l-8-17m29-13l-9-23m13 39l-8-19m129 3l-1-14m108 1l1-18m44 29l3-16m59 48l8-10m11-1l10-16m-2434 79l-31-9m38-22l-30-11m53 17l-30-9m38-5l-30-10m37 32l-30-10m37 33l-30-9m69-19l-15-18m102 22l17 1m74 7l-26-5m35 6l-29-3m40 16l-25-13m137 14l-22-4m283-24l-19-10m237 29l-12-1m31 6l-11 2m263 3l3 18m9-6l5 14m96-35l9 12m0 10l8 9m50-50l11 8m181-9l10 0m713 32l9-4m251-20l21-14m-2538 61l-32-6m39 2l-32-7m99 4l-30-9m38 22l-31-6m54-20l-15-23m22 16l-11-20m69 44l17-8m76 3l4-21m30 23l-15-23m99 39l-14-7m21 5l-16-7m32-14l-21-4m129 10l-23-9m47 27l-23-10m194-3l-17-10m177-4l-12-3m170 30l-2 6m58 3l1 8m49-10l2 9m10 10l3 7m5-32l3 10m19 6l3 7m233-2l7 3m330-36l25 8m142-6l-19-10m40-5l-15-12m211 41l10-3m28 9l9-3m63-19l8-3m-2 12l8-4m88-14l7-5m18 21l6-6m-2354 31l-31-8m35 43l-31-8m64-23l-30-8m43 44l-30-8m63-3l-30-5m120-30l15-13m-3 17l15-14m59 32l-2-22m25 20l-6-24m12 14l-11-23m29 35l-18-21m43-4l-25-17m50 41l-16-12m26-7l-16-9m20 20l-18-10m80 6l-23-10m137 29l-21-11m56-14l-21-10m654 64l4 5m29-38l5 6m214 25l8 4m432-20l29 15m-16-13l30 13m-77-41l-25-4m250 37l10-6m67-30l10-3m3 0l8-4m8 5l8-3m6 8l9-3m32 24l7-6m11 15l5-6m16-11l4-7m4 26l4-7m-2-22l5-6m-2 16l5-7m-3-17l5-5m4 34l4-6m5-9l5-6m50-5l5-7m16 28l4-8m114 27l20-4m-2560 36l-33-1m47-23l-32-7m89 17l-30-7m61-4l-31-6m41 7l-30-5m67 46l-30-2m54-44l-14-25m14 39l-19-23m37 9l-9-24m53 51l-17-25m23 20l-15-25m62-9l-4-24m0 51l-12-28m32 15l-16-26m32 34l-10-21m53 18l-12-19m55 44l-19-16m498-6l-9-2m363 9l4 4m11 27l4 4m32 1l5 4m91 2l6 4m303 0l25 20m-10-34l24 22m109-23l30 12m59-7l29 14m-28-45l30 13m-30-12l-11-4m107 0l11-6m-2 26l11-6m20-30l11-5m81 26l9-6m-2-12l10-5m-4 38l8-7m-5-22l9-5m19 26l8-7m22 20l7-7m2-5l7-7m25 1l5-8m36-3l4-8m16 19l4-8m-4 17l3-9m25-24l3-8m56 15l3-9m98 12l15-2m1 30l19 0m-2499 40l-30-9m132-16l-30 0m57 38l-28-5m74-19l-24-11m77-17l-12-21m29 50l-11-23m27 25l-13-23m41 24l-12-23m40-11l-17-17m112 28l-22-13m447 28l-8-2m166-3l1 3m80 15l3 5m228-2l7 4m89 4l9 7m53-6l12 8m295-8l26 19m34-46l-24 1m107 28l11-9m13-29l12-6m31 8l12-6m3-1l12-6m-11 8l11-6m-7 46l10-9m40-31l11-6m53 30l9-8m23-17l7-7m46 49l5-12m22-14l5-10m53 19l5-10m6 8l3-11m22 2l3-10m-2 34l3-11m-2350 78l-33 5m112-41l-28-9m50 30l-28-10m140-13l-21-16m94 11l-16-20m22-7l-13-23m47 34l-17-20m775 50l3 5m127 19l3 6m386-5l21 24m21-30l23 22m100-6l23 22m163-43l11-9m-3-20l11-8m-9 35l12-8m31-6l11-9m-11-14l10-10m7 19l10-9m-8 23l11-9m87-13l8-11m10 35l6-12m15 4l6-12m9 28l7-12m33-12l5-11m-4 29l5-13m22-12l3-12m21 36l5-12m2 0l3-12m19 7l4-12m9 10l3-12m168 47l20 8m-2493 16l-33 2m93-11l-28-10m64 6l-29-9m43 4l-27-10m42 25l-28-9m384 9l-22-13m35 23l-21-14m54 20l-20-18m29-6l-21-13m1204 57l23 22m126-26l28 17m-17-39l-18 4m21 3l-16 4m52-44l10-9m-8 36l11-9m-5-5l10-9m7 37l10-11m6 17l9-11m27-9l9-11m13 3l9-11m-1-8l10-11m-6 29l10-11m0 14l9-12m-1 10l9-12m-5 5l9-12m-7 27l8-13m27 15l7-13m3-5l8-12m-3 3l8-12m38 22l6-12m21 23l5-13m24 35l6-12m43-16l4-13m33 38l7 7m26-31l9 6m-2277 87l-32 8m53-18l-30-2m31-2l-30-3m73-21l-28-11m48 13l-26-11m119-7l-22-16m305 0l-20-18m100 44l-18-13m515 21l4 6m75 31l6 11m472-18l19 25m37-9l24 21m76-52l-20-14m34 18l-19-9m97 21l-8 6m11-33l-11 7m18-9l-11 8m53-26l10-11m15 66l-7 10m34-47l8-12m6 1l8-12m-8 28l7-13m7-11l7-12m23 3l8-12m-8 26l7-12m31 0l7-13m13 30l6-13m2 5l7-13m0 23l6-12m20 7l6-13m50 18l6 12m163 40l16 19m12-43l17 18m-2331 41l-31 10m325-47l-26-12m75 17l-24-19m36 4l-23-19m34 35l-23-21m39 1l-21-22m66 12l-17-25m26 45l-18-26m18 20l-16-27m46 25l-11-28m24 20l-11-29m242 62l-9-3m99 23l-2 1m77-41l4 5m188 55l8 21m315-36l19 26m277-52l24 23m7-49l-18-8m169 49l-5 7m42-13l-5 8m61-25l-3 11m77 3l1 7m-2024 18l-30 9m68-9l-30-1m54 23l-30-1m219-21l-26-13m54 26l-27-12m65 18l-29-14m41-27l-24-19m32 60l-27-16m31-9l-26-18m67 23l-22-23m37 11l-22-23m91 35l-12-26m23 2l-10-27m10 41l-10-27m36 18l-4-27m10 45l-1-27m32 23l0-26m10 14l1-25m88 66l-3-9m237-16l4 6m183 57l15 29m12-37l13 30m287-38l15 28m94-24l21 25m242-54l-5 4m9 16l-6 4m49-12l-5 4m74-24l-3 6m275 19l12 22m-2057 32l-28 17m61-25l-30 3m150-13l-28-10m62-29l-29-11m37 57l-31-5m94 2l-29-10m54 1l-28-11m56 6l-26-14m47-31l-17-24m78 45l-8-21m20-3l-3-26m5 73l-3-16m31 2l6-21m71 5l5-13m31 61l3-6m199-1l16 1m124 9l17 27m191-9l12 30m433-37l-10 23m20-33l-9 19m26 3l-7 25m111-61l-5 10m72 32l0 24m44-67l-2 10m18 33l2 26m83-88l-1 10m22 31l6 25m-1767-27l-28-11m67 22l-30-5m58-12l-30-7m52 31l-32-2m63-20l-29-9m40 37l-30-2m44 4l-29-1m48 1l-28-1m43 17l-26 1m62-34l-17-7m124-3l17-10m37 3l12-9m178 30l23-14m349 54l11 31m32-34l11 31m379-45l18 27m166-36l-1 26m-1512 30l-30 1m55-30l-32 3m78 28l-29 12m46-16l-30 10m33 5l-27 15m65-8l-22 18m34-15l-19 21m22-34l-20 19m35-5l-17 23m29-20l-14 24m26-82l-14 3m77 17l7 14m18 21l10 19m20-32l13 11m-1-27l14 8m-1-17l11 4m24 0l6-2m56-8l16-12m18 2l22-15m5 7l24-14m8 32l28-15m577 55l18 28m-2-17l17 29m-1-44l17 28m-1190-20l-29 2m59 12l-29 6m90 16l-25 18m89-8l-18 25m23-34l-18 25m31-8l-14 27m15-57l-14 26m97-35l2 23m-2 3l-1 20m57-47l5 12m1-25l9 12m22-11l4 3m422 15l15 30m103-12l12 31m158-50l14 30m-1132-6l-34 2m57 36l-29-2m27-44l-31-2m117 20l-27 11m52 8l-26 14m97-13l-18 26m30-20l-16 26m20-11l-15 26m128-40l-8 7m249-19l29-13m107 13l11 30m196-9l14 31m61-8l14 31m-1003-23l-34-1m270 12l-18 15m350-47l23-13m81-6l30-4m38 44l16 28m0-11l22 24m29-19l24 26m103-28l17 30m2-34l17 30m-971-16l-35-1m893 24l36 6m-30-17l32 15m-28-9l34 11m-17-23l29 19m-908 20l-35 1m82-4l-34-1m453 4l1 0m352-17l36-4m-838 83l-38 1m415 15l-4 0m299-19l22-9m-20 12l23-9m-15 53l25-8m-781 55l-42-2m93 0l-41 0m54-12l-41 0m222 13l-37 0m-152 30l-41 0m203 51l-40 0m545 4l16-7m-318 79l-9 0m351-39l23-9m6 31l30-11m-804 75l-46-1m55-18l-45 0m51-12l-46 0m776 21l22-7m4 40l27-4m-18 41l28 1m-800 5l-47 5m204 44l-44 11m342-9l-6 10m40-10l-3 11m172-14l9 10m104-10l26 8m-756 42l-45 13m82-10l-45 15m60-59l-44 12m59 32l-45 12m80-15l-44 13m76-11l-44 13m209-13l-35 14m166-16l-5 14m37-14l-1 14m209-11l14 14m109-20l43 9m-870 9l-44 14m70 19l-44 17m71-13l-43 19m148-24l13 7m4-13l14 17m-17-6l9 27m-4-21l2 24m-8-41l-3 15m19 5l5 38m-18-43l-10 25m32-37l11 21m-8 1l5 36m-16-54l-10 23m20-37l-6 19m1-10l-19 25m41-6l3 28m-30-35l-27 31m29-37l-25 34m42-28l-28 39m39-38l-21 40m43-56l-21 18m505-9l16 19m42-46l28 16m-816 43l-42 20m55-1l-42 22m42-26l-41 22m176-46l16 22m-3-20l15 27m-15-24l9 20m-17-25l0 17m10-23l5 23m-4-1l2 39m13-69l15 12m-29 7l-6 27m30-47l5 11m-7 9l-3 28m-2-24l-9 17m24-16l-3 12m-1-31l-8 21m18-13l-10 15m12-1l-11 19m41-44l-12 18m7 18l-20 13m39-17l-5 11m-7-27l-22 1m35-7l-25 22m29-20l-24 25m41-31l-10 20m10 2l-16 4m4-18l-30 13m31 1l-30 22m59-52l-10 16m1-12l-19 9m25 2l-13 20m1-21l-27 14m47-2l-20 15m7-14l-37 23m40-34l-35 2m40 19l-41 13m32-2l-53 26m272-32l-4 24m294-39l27 23m-847 33l-42 22m106-22l-40 25m244-50l-11-1m35-11l-13 3m20 8l-23 0m30 2l-27 7m43-19l-36 5m56 12l-27-1m33-9l-26 10m69 25l-35 29m127-26l-8 30m247-31l12 29m68-16l21 30m-17-56l23 27m47-16l40 26m-845 3l-39 26m259-40l-2-3m-12-5l-23-3m30 18l-19-1m28 1l-14-4m5-15l-30 7m46 9l-19-13m24 26l-34-6m27-44l-42-11m57 17l-29-6m47 10l-17-12m12 45l-25-12m32 1l-23-9m11 3l-42 1m62 7l-22-4m29-2l-25 4m49 38l-34 32m162-36l-6 34m323-51l26 31m-566-26l-13-9m3 12l-26-23m43 44l-14-13m7-15l-20-12m28-7l-20-24m40 60l-9-9m10 16l-9-9m-2-9l-21-16m51 24l-10-9m-6-2l-28-18m20 21l-39-17m58 20l-23-11m213 70l-6 39m254-37l13 38m-621-5l-35 32m44-49l-34 31m46-30l-35 31m47-13l-33 34m34-43l-35 31m113-7l-33 34m150-45l-31 35m85-24l-27 38m267-35l6 44m41-45l10 44m4-47l11 44m-5-48l11 43m32-58l18 42m-467 16l-25 40m86-43l-27 39m148-33l-6 47m134-57l3 47"/>
<path stroke="#1c00e6" stroke-width="4" d="M0 0m2556 269l5-31m-197 52l-16-27m102 20l-8-27m141 58l3-25m-301 65l-24-21m419 24l4-24m58 45l7-24m36 20l11-28m-556 76l-26-18m85 42l-17-17m78-1l-16-14m259 35l-3-12m19-3l-2-12m156-23l6-24m53 42l8-25m49 21l11-29m-1015 74l-7-32m366 24l-24-16m265 41l-8-14m356-17l6-20m77 34l8-24m27 4l12-29m45 49l12-30m-1245 64l-18-27m143 17l-10-31m304 48l-30-14m59 16l-24-16m330 56l-6-15m354 17l2-11m82 22l3-11m77-70l12-30m19 79l10-22m13 2l11-28m7 29l10-30m-1384 58l-20-26m26 43l-20-26m300 35l7-31m134 45l-27-16m408 16l-5-16m62 12l-3-14m84 27l0-14m13 6l0-14m168 9l1-11m260 34l6-14m29-26l12-24m4 4l12-28m-1524 123l-24-23m39 8l-23-24m26 11l-23-23m483 45l-28-15m51 18l-24-15m174 5l-17-14m194 26l-10-21m38 22l-8-22m27 21l-8-22m31 16l-5-21m37 22l-1-21m47 5l0-17m28 18l1-17m41 40l4-18m133 35l3-12m353-41l11-19m-7 50l11-12m68-15l23-21m-7 33l24-21m-6 37l27-19m-1702 59l-24-22m179 15l-21-23m203 17l-14-27m69 34l-4-30m83 49l-28-14m27 5l-29-15m40 33l-26-17m32-23l-28-15m42 19l-26-14m192 37l-19-15m66 0l-18-16m101 28l-15-23m27 1l-13-22m53 10l-13-21m25 32l-10-24m106 118l-1 16m9-9l-2 16m4-29l-5 15m43-112l3-24m-12 136l-5 15m89-98l6-24m18 29l10-22m72 31l8-15m204 12l6-9m206 28l13-8m79-12l30-13m-27 29l31-10m-1765 18l-26-20m107 35l-21-21m144 47l-25-9m305-31l-21-23m46 30l-24-17m99 13l-20-13m158-2l-19-16m14 57l-22-15m36-6l-20-16m23 29l-22-16m112 67l9 3m21-31l6 9m178 3l-6 15m26-8l-9 14m25 0l-10 12m59-15l-14 10m25-7l-14 9m74-80l15-19m21 43l16-17m63-13l8-10m109 21l7-8m87 27l8-7m-1560 35l-27-20m56 9l-24-21m130 14l-21-20m121 112l-22 12m23-47l-23 2m72 6l-24 1m226-44l-19-19m52-21l-19-23m119 90l-20-13m36-11l-21-12m111 2l-23-14m31 4l-22-13m32 55l-26-10m116-3l9 1m-1 21l11-2m1-11l9 1m194 5l-4 12m105 5l-15 7m192-21l16-10m77-28l7-9m17 54l9-7m287-7l24-8m-1790 5l-26-19m278 86l-19 16m144-32l-24-9m278-18l-19-14m112 22l-23-11m28 1l-24-10m27 6l-23-12m133 50l12-9m-5-4l12-7m98 30l8-5m7-22l7 1m49 26l3-3m211 3l-18 1m118-39l20-9m-22-6l18-11m424 34l28-5m-20-4l29-7m-1869 79l-29-14m129-12l-25-18m93 85l-20 6m27-99l-23-21m34 24l-22-21m69 126l-12 16m64-8l-11 25m21-29l-11 27m20-51l-12 25m32 8l-12 27m35-67l-19 18m32 6l-18 20m37-44l-22 13m53-59l-24-2m417 0l-26-6m125 23l10-15m111 19l8-11m15-18l5-4m142 33l-11-7m18 9l-12-7m82 4l-17-4m200-27l13-8m403 59l30-1m-1915 26l-30-12m43 19l-30-12m45-34l-28-15m77 38l-28-16m40-2l-27-16m36 32l-28-16m46 9l-24-21m216 89l-7 23m32-26l-10 28m25-10l-16 23m32-28l-17 22m49-26l-21 14m32-11l-23 11m194-93l-21-12m131 20l-21-9m171 60l-23 2m160-45l11-17m116 22l5-14m89 6l-8-12m215 64l23 5m3-23l20 1m-10 8l18 2m9-6l14-1m23-10l12-2m2-8l12-2m390 2l33-3m-1946 27l-30-11m112-10l-28-16m47 53l-19-12m53 30l-7-1m2-5l-11-3m156 39l2 21m30-2l-15 23m34-60l-23 14m27-17l-23 16m45 7l-22 20m41-35l-20 17m31-26l-21 15m26 1l-22 13m55-28l-23 7m51-4l-24 0m334-38l-19-5m100 20l-22 3m148-43l10-18m0 35l8-19m0 26l8-20m76 12l8-19m-3-5l5-17m5 26l7-17m13 14l3-17m159 42l-15-14m187 69l13 4m-6-43l16 1m29 16l12-1m-2-32l12-1m441 47l32 3m161-56l-7-26m254 26l7-25m-2377 82l-30-11m74 14l-30-11m81 15l-8-13m202 65l-27 10m53-40l-25 14m36 5l-30 4m35-23l-29 11m56 8l-22 6m21-20l-22 7m57-23l-23 6m56-25l-25-2m142 15l-22-10m51-11l-21-11m397 74l-13 16m45-8l-11 20m47-115l7-20m22 41l7-20m62 123l2 23m-1-143l0-21m60 137l6 22m-18-133l-5-20m208 80l14 7m58-35l12 1m17 18l10 0m67 18l10 0m403 18l32 9m51-63l-8-17m28-19l-10-23m15 43l-7-18m135 7l-2-14m111-3l2-17m45 30l4-15m63 53l7-11m14-6l9-15m-2474 85l-31-8m39-25l-31-10m54 18l-31-9m39-6l-30-10m37 32l-30-9m37 33l-30-9m84-28l-15-18m134 41l16 2m32 0l-25-6m31 9l-28-2m43 5l-26-12m141 22l-21-4m285-30l-19-10m244 38l-12 0m32 8l-11 2m277 19l3 18m11-10l4 15m101-38l9 13m-1 6l8 8m53-50l11 8m180-17l10 1m712 27l8-3m264-31l20-14m-2590 69l-31-7m38 2l-31-7m100 2l-30-9m37 25l-30-7m69-36l-15-22m26 18l-11-20m97 56l16-7m64-11l3-20m12 20l-14-23m99 55l-14-8m19 6l-15-8m26-10l-20-5m126 6l-22-9m46 26l-22-9m199-4l-18-10m183 3l-12-2m180 38l-3 7m62 4l0 8m51-9l1 9m12 8l2 7m6-29l2 9m20 4l4 8m236-7l8 4m347-32l24 8m99-24l-20-10m45-7l-15-11m236 49l10-4m27 10l10-4m61-18l9-4m-3 12l8-4m87-15l6-4m18 19l5-5m-2390 28l-31-7m35 42l-30-7m64-24l-29-9m42 45l-30-7m63-1l-31-5m166-38l15-12m-3 15l14-13m43 23l-1-22m20 18l-7-24m8 15l-10-24m21 38l-19-22m37 1l-26-16m60 45l-15-11m25-5l-16-10m18 20l-18-10m75 6l-22-9m138 27l-21-12m56-12l-21-10m679 79l4 5m30-37l5 5m217 24l8 5m453-10l29 14m-15-14l29 14m-131-59l-26-5m286 36l10-5m67-28l9-3m2-1l9-4m7 6l9-3m6 8l8-4m31 22l6-5m10 14l5-7m15-11l5-6m3 25l5-7m-2-21l6-5m-3 14l4-6m-2-16l6-6m2 34l5-7m5-8l5-6m50-6l4-7m16 27l4-8m130 31l19-3m-2612 38l-33-1m48-29l-31-6m90 16l-29-8m59-2l-30-5m41 7l-31-5m68 49l-31-2m71-67l-14-24m9 40l-20-22m48 7l-8-24m44 50l-17-25m25 20l-14-26m72-7l-3-23m-9 46l-13-27m29 16l-15-26m37 39l-9-22m50 21l-13-19m49 47l-19-15m508 7l-10-1m377 14l4 5m11 26l3 5m34 0l5 5m92 1l7 5m321 15l24 21m-10-33l23 22m116-33l30 13m58-6l30 14m-28-46l29 14m-70-30l-11-4m129-2l11-5m-2 25l11-7m20-28l11-4m79 24l10-5m-2-12l9-5m-5 36l8-8m-4-19l10-5m17 24l8-6m21 19l7-8m2-4l7-7m23 0l6-7m34-4l5-8m15 19l4-9m-5 17l4-9m24-23l4-8m55 14l4-9m109 19l15-1m5 31l20-1m-2549 32l-29-10m131-6l-30 0m59 33l-29-5m79-25l-23-11m88-27l-11-22m29 49l-12-22m26 24l-12-22m41 23l-13-22m36-6l-18-17m108 32l-21-13m460 39l-8-1m175 1l2 4m81 16l2 4m233-2l6 5m92 6l8 7m57-5l12 8m309 3l27 18m-17-63l-25 0m143 19l10-8m15-27l11-7m32 9l11-5m4-2l11-6m-11 8l11-7m-8 44l11-8m40-29l11-5m51 27l8-9m22-15l8-8m43 45l4-11m23-13l4-10m54 19l4-11m5 8l4-10m21 2l3-11m-2 34l2-12m-2385 95l-32 5m116-55l-29-9m51 29l-28-10m147-19l-20-17m98 8l-16-21m25-9l-13-22m43 36l-16-20m794 75l2 4m128 21l4 6m403 13l22 24m22-32l24 23m99-7l24 23m150-75l11-9m-3-19l10-9m-7 36l11-9m31-6l10-10m-11-14l10-9m7 19l11-9m-8 23l10-10m85-14l7-10m9 33l5-13m16 5l6-11m10 27l6-12m32-11l5-12m-4 28l4-12m21-12l4-12m22 36l4-12m1 0l4-12m19 7l3-12m9 10l4-11m184 66l19 9m-2545 9l-32 2m97-23l-29-9m64 6l-28-10m44 4l-28-11m42 27l-28-9m390 5l-23-13m37 22l-22-15m56 17l-19-19m27 0l-21-13m1248 92l23 23m131-32l29 16m-64-51l-17 3m22 4l-16 5m78-58l10-10m-7 37l11-8m-6-6l11-10m6 36l9-10m6 16l10-10m26-10l10-11m12 3l10-11m-1-8l9-11m-5 29l9-11m0 13l9-11m-1 9l9-11m-5 4l8-11m-7 25l7-12m27 14l6-12m5-5l7-13m-2 4l9-11m35 21l7-13m19 23l5-13m25 36l5-13m42-16l5-12m35 57l7 7m28-32l8 5m-2317 90l-31 8m54-28l-31-2m32-3l-31-4m76-28l-27-10m49 12l-27-12m124-11l-23-15m308-3l-20-18m102 49l-17-14m536 41l5 6m76 36l7 11m484-4l20 26m41-14l25 21m31-87l-21-15m36 24l-19-10m108 37l-9 6m9-32l-11 7m18-8l-12 8m75-45l10-10m-2 86l-6 11m48-70l8-12m6 1l9-12m-10 27l8-12m6-11l8-13m23 4l9-12m-10 26l8-13m30 0l6-13m13 30l7-12m2 4l6-13m0 24l7-13m19 7l7-12m49 42l7 11m172 48l16 19m13-44l18 17m-2380 34l-30 11m329-70l-26-12m77 10l-24-19m37 4l-24-20m35 34l-22-22m40 1l-22-22m71 9l-17-26m25 45l-17-26m19 19l-17-26m52 23l-12-29m25 20l-10-29m243 88l-8-4m105 28l-1 0m82-36l3 4m193 72l7 21m327-31l18 27m283-56l23 22m-34-79l-17-9m181 65l-4 6m41-11l-4 7m62-21l-4 10m82 0l0 6m-2054 21l-31 8m69-18l-30-1m54 23l-29 0m222-34l-25-13m52 27l-28-12m64 16l-28-13m45-33l-25-19m30 63l-27-17m32-10l-25-19m70 19l-22-22m37 10l-22-22m101 31l-12-26m25 1l-9-27m9 41l-11-26m43 17l-5-28m14 46l0-28m32 25l1-27m10 16l0-24m85 81l-2-9m243-1l5 7m193 79l14 29m11-36l12 30m290-40l15 29m100-28l20 25m217-75l-6 5m9 15l-5 4m49-12l-4 5m75-23l-3 5m290 36l12 21m-2097 28l-27 16m58-38l-29 2m151-25l-29-9m62-31l-29-12m35 64l-31-6m96-2l-30-9m56-1l-28-12m58 4l-25-13m55-42l-18-25m88 49l-7-21m24-8l-3-26m5 83l-4-17m41-2l5-20m71 12l6-14m28 69l3-7m212 7l15 1m126 35l16 27m187-6l13 30m410-44l-9 24m20-38l-8 19m27 9l-8 26m114-77l-4 9m76 47l1 25m41-82l-2 11m22 48l3 27m79-105l0 11m28 45l6 26m-1801-64l-27-10m64 27l-31-6m59-13l-31-8m51 37l-31-3m65-26l-30-8m40 43l-30-1m45 4l-29 0m49 0l-27 0m44 18l-25 2m70-43l-16-6m157-7l18-10m31 4l11-8m190 24l24-13m336 98l11 30m32-33l12 30m385-48l19 28m146-38l-2 26m-1540 5l-31 2m54-29l-31 2m80 38l-28 13m44-19l-29 9m35 11l-27 15m70-5l-23 19m38-13l-20 22m22-37l-19 19m37-1l-16 22m31-18l-14 23m26-102l-15 4m99 27l8 13m20 27l10 20m23-41l13 12m0-31l14 8m-4-21l12 5m18-7l6-3m66-17l16-11m24-2l21-16m8 9l25-15m11 32l27-16m568 99l17 27m-2-15l18 28m-2-44l17 28m-1236-46l-29 1m59 17l-30 5m95 29l-26 19m97-2l-19 24m24-33l-18 25m35-6l-14 28m15-59l-15 26m114-38l1 24m-4-1l-2 21m64-56l6 12m4-25l8 11m18-19l3 3m434 42l14 29m101-10l12 30m160-50l15 29m-1181-33l-34 1m62 33l-28-2m24-44l-31-1m121 32l-28 11m54 11l-26 14m105-1l-17 25m31-19l-15 27m20-12l-14 26m134-59l-9 6m287-38l28-14m90 57l12 30m198-8l13 31m62-8l13 32m-1050-56l-35-2m287 29l-18 16m391-76l24-13m87 3l31-4m23 76l17 28m5-15l23 24m30-17l23 25m97-23l17 31m2-35l18 31m-1024-48l-34-2m963 32l35 6m-33-8l32 16m-26-14l34 10m-22-14l30 19m-973 2l-36 2m84-7l-35 0m489 4l2-1m386-20l37-4m-913 88l-38 1m449 14l-3 0m324-28l22-9m-19 12l22-9m-12 54l26-9m-849 62l-43-1m95 1l-41-1m54-11l-40-1m225 14l-36 0m-157 30l-42 0m205 51l-40 1m601-4l16-6m-343 85l-8 0m382-48l23-9m13 29l31-11m-881 85l-46 0m56-18l-46 0m51-12l-45 0m843 14l21-6m10 42l26-3m-16 45l27 2m-874 8l-46 6m206 49l-44 10m380-9l-5 10m42-9l-2 10m183-14l10 9m120-11l26 9m-827 46l-45 13m82-8l-44 15m60-62l-45 13m59 31l-45 13m81-15l-45 13m77-11l-45 14m219-13l-36 13m197-15l-4 14m40-14l-2 14m225-11l15 14m137-25l42 10m-956 13l-45 15m71 21l-43 18m71-12l-43 18m204-35l14 6m4-2l14 18m-22 3l10 26m-12-23l2 24m-13-50l-4 14m28 29l4 39m-32-57l-11 26m54-42l10 21m-13 16l4 36m-30-67l-10 23m24-41l-6 19m-12-4l-18 26m62-4l2 29m-59-33l-26 31m30-34l-25 33m39-22l-27 38m45-36l-22 39m44-77l-20 17m541-7l16 19m54-49l29 16m-887 47l-43 21m56 0l-41 21m42-25l-42 21m234-45l17 22m-5-15l14 28m-20-32l9 21m-26-29l-1 17m16-17l4 22m-6 16l3 40m25-97l15 11m-50 23l-7 28m42-64l4 11m-14 26l-3 29m-8-36l-9 18m30-22l-2 12m-7-22l-7 22m15-20l-11 15m12 3l-11 18m40-44l-11 17m-2 14l-19 13m53-19l-4 11m-25-37l-22 2m32 13l-25 21m30-16l-24 24m55-35l-9 20m3-14l-17 4m-9-9l-31 14m32 9l-31 23m80-59l-9 16m-9-19l-19 10m31 12l-13 21m-13-28l-28 13m55 0l-20 15m-10-6l-37 22m42-54l-35 1m34 31l-41 13m20 11l-52 25m320-33l-3 24m324-40l27 22m-916 33l-41 23m107-20l-40 24m273-75l-10-2m32-6l-14 3m11 5l-24 0m27 9l-26 7m33-21l-36 6m65 5l-27-2m34 3l-25 11m59 43l-35 29m154-25l-7 29m266-31l11 29m78-15l22 31m-16-60l23 28m64-18l39 25m-923 4l-38 27m295-70l-3-3m-32-5l-23-4m34 21l-20 0m34-3l-13-3m-12-5l-29 7m56-11l-20-13m10 33l-33-5m18-50l-42-11m70 22l-30-6m60 4l-18-11m5 44l-26-11m35 3l-22-10m-9 14l-41 1m81 2l-21-5m25 7l-25 5m40 65l-35 32m191-34l-5 34m354-54l25 32m-604-67l-13-10m-10-1l-27-23m56 54l-14-12m1-15l-21-12m29-19l-21-25m52 76l-9-10m10 17l-9-9m-14-16l-22-15m63 30l-10-8m-24-12l-28-19m9 23l-38-16m73 25l-23-11m230 120l-6 38m273-37l14 39m-670-12l-34 32m44-50l-35 32m46-31l-34 32m48-11l-33 33m32-45l-34 32m114-5l-33 33m152-43l-30 36m88-22l-27 39m300-30l5 44m46-45l9 44m6-47l10 44m-4-49l10 44m40-60l17 42m-509 14l-25 40m84-44l-27 38m169-24l-6 46m143-56l3 46"/>
<path stroke="#e6001c" stroke-width="4" d="M0 0m2467 318l-4-32m20 37l-5-30m54 34l4-31m-157 58l-18-25m167 12l-1-27m60 36l8-29m37 47l10-30m19 41l12-30m-353 56l-25-20m116 43l-12-16m208-2l-2-14m37-9l7-26m98 62l10-29m-478 78l-28-16m388-15l-2-12m170 18l12-29m-936 104l-9-31m391 9l-29-15m35 2l-29-15m37 40l-25-16m53-4l-22-16m116 30l-15-14m256 35l-3-12m130 8l0-12m51-6l2-14m25-10l8-25m-1051 104l-19-27m113 7l-11-30m39 20l-3-33m33 49l2-33m283 49l-28-15m43 24l-25-16m618-17l1-11m113 5l8-24m23 32l9-25m-1232 86l-20-26m213 3l-8-31m31 57l-5-31m9 7l11-31m1 55l6-32m218 51l-24-16m284-24l-10-15m230 48l1-14m20 6l1-13m360-14l9-23m52 22l12-30m45 59l16-27m-1480 50l-22-24m252 47l-16-27m65 6l12-30m1 58l13-29m144 29l-29-13m142 4l-19-14m86 22l-17-15m57 3l-15-17m158 19l-6-20m10-7l-5-17m128 19l-1-15m27 33l2-16m11 9l1-15m54 39l5-14m290 10l6-9m17 4l6-9m-1394 44l-24-23m347 18l-4-30m23 40l6-31m4 44l11-30m0 44l16-28m228 3l-20-13m63 10l-18-15m122 23l-15-21m21 27l-16-21m46 21l-15-22m17-1l-12-21m70 46l1 15m4-36l-8-24m86 41l-4 16m111-15l9-20m200 18l5-9m68 26l6-8m236-38l27-15m-14 30l29-15m-1635 62l-25-21m42 24l-23-22m111 6l-20-23m114 58l-24-11m30-24l-21-21m214 27l15-28m304 59l-22-15m41 15l-22-18m27 15l8 3m-2-13l-22-17m23 13l-22-17m40 19l6 7m4 8l8 6m4-24l7 8m-7-24l4 10m22 21l6 9m9-44l3 12m2 28l6 9m255-40l11-20m21 47l16-18m21 20l14-15m32 3l10-11m20-2l8-10m16 4l7-9m335 47l26-7m-1507 52l-24-6m40 10l-22 6m107-22l-24 4m268-33l-21-21m165 21l-20-13m47 45l-21-13m94 22l11-4m2 6l11-4m6 6l11-3m118-33l5 8m99-18l-5 11m38 7l-9 8m68-13l-14 8m108 23l21-13m-1209 31l-25-19m67 30l-26-17m53 36l-23-21m114 4l-21 9m112-17l-22 13m182-15l-20-18m44 45l-20-16m188 5l-20-11m130 17l-26-7m46-7l11-8m-2 29l12-10m41-1l12-6m7-10l11-4m253 5l-12 1m102-20l-17 4m47 1l22-11m-22 47l-18-2m35 7l23-7m-4 6l21-5m-9-37l16-9m50 34l12-7m250-22l13-5m-1577 74l-25-18m59 3l-25-19m32 29l-26-18m42 28l-23-21m34 35l-25 2m28-7l-27 2m58 4l-15 13m18-37l-22-20m24 31l-25 7m27-28l-23-18m37 11l-23-11m37 20l-21 4m25 17l-20 16m32-16l-17 21m34-7l-17 20m30-58l-12 25m21 13l-12 27m214-27l-23-11m101-23l-21-13m61 6l-20-13m193 11l-24-8m31 18l-25-5m31 8l-25-6m29 37l-25-2m51-9l11-14m-1-14l11-11m393 21l-17-3m41 28l-18-6m82 9l21-2m57-22l13-4m29 28l11-2m51-1l10-4m-1515 21l-31-12m125 9l-26-18m30 25l-27-16m40 10l-25-19m51 13l-25-2m98 8l2 21m7 17l1 21m12-40l-1 22m46-33l-17 19m65 0l-18 22m24-14l-18 21m33-48l-17 21m17-35l-18 20m369-7l-20-9m157 33l-24 3m34-8l-25 5m161-9l8-15m290-12l-17-8m72 13l20 0m23 11l15-1m111-19l11-3m45 13l11-3m80-3l13-4m112 6l33-1m-1754 59l-28-15m41 12l-27-16m49 9l-27-16m46 38l16 10m54-7l10 18m22-44l4 20m110-17l-23 17m47 1l-20 17m42-9l-22 12m467-6l-19-1m77-11l-22 8m191-10l3-19m19 10l1-18m22 4l-2-16m119 36l-12-16m72 7l-15-12m16 40l19 11m-16-13l18 12m9-41l20 8m50 23l13 2m308-13l16 2m54-17l31 2m32-7l33 0m274 29l-5-26m-2133 35l-31-9m101 42l-29-12m48-3l-13-11m109 30l16 9m0-10l15 12m167-11l-22 3m60-13l-24 2m49 13l-24-2m71-1l-23-7m139-22l-20-12m114 19l-19-8m121 10l-17-3m94 13l-15 3m144-26l7-20m19 48l5-21m72-9l-2-20m13 38l-4-20m24 20l-4-20m48 19l-9-19m53 11l16 17m-12-2l15 14m-6-37l18 14m-5-9l18 12m9-9l15 10m339 16l14 2m210-11l31 10m-28-32l33 0m-17 31l32 5m140-8l-5-16m222 26l3-9m164 6l19-19m-2374 43l-12-18m129 44l14-11m56-27l-25 8m30 20l-25-12m44 0l-28-3m96 8l-30-3m36 2l-31-2m41 10l-19-3m21-27l-21 2m61 25l-23-2m26-25l-24 0m172 32l-21-11m278-8l-14-3m100 12l-10 3m13-15l-11 5m121 4l-1 15m58-17l2 17m5-27l2 19m20-11l4 17m27-13l5 16m106-23l10 9m16-7l9 8m410-4l24 7m29-15l28 16m25 0l29 14m35-19l29 15m63-19l-10-18m48 4l-9-17m261 52l8-4m8-24l3-11m65 22l6-11m17-13l5-8m-2369 93l-32-6m48-7l-31-8m102 24l-31-7m48-2l-6-21m13-10l17-4m231 42l-26-16m67 1l-20-7m68-10l-23-7m227 5l-20-9m47 41l-19-9m209-19l-11-2m14 30l-10-2m319-13l4 8m80-9l7 6m82 8l7 4m383-34l30 13m-19-17l29 13m-1 1l30 13m-9-30l28 16m49 24l29 15m59-20l-5-5m121 7l10-4m88-8l9-3m-8-16l9-3m4 40l8-4m2 1l8-4m4-14l8-4m10 7l7-4m2 18l7-4m97-14l6-6m11 16l5-6m100 12l16-7m-8 4l19-8m-2376 49l-12-23m106 23l5-20m73 0l-15-23m27 54l-16-22m31 16l-21-20m34 34l-13-15m53-24l-17-11m43 28l-20-12m78 14l-22-10m35 21l-22-11m48-5l-22-11m142 9l-21-9m405 31l0 4m82-18l2 5m476-28l11 4m43-7l16 4m125-1l30 12m42-5l29 15m28 12l-25-2m149 5l11-5m8-12l11-4m-10 21l11-5m14 4l11-4m-3-21l11-4m-6 33l10-5m10-3l10-5m26 14l9-5m0-34l9-4m-1 13l9-4m-5 12l9-4m54 18l7-5m19 15l6-7m57-31l5-6m3 44l4-7m24-37l5-6m68 37l14-5m85 15l25-4m-2470 24l-30-8m49-1l-30-7m78 22l-31-2m95 10l-13-25m23 40l-19-24m26 8l-10-24m45 16l-4-22m27 11l-3-23m73 57l-13-20m81-10l-20-14m25 19l-19-15m39 5l-22-12m182 13l-21-10m919 13l9 6m64 3l13 9m13 16l18 13m56-42l24 21m20 8l27 17m39-31l29 15m194-38l11-5m3 32l11-6m48 4l11-6m22 2l10-6m19-6l9-5m-5 31l9-7m21 7l8-7m23-34l8-5m-3 17l7-6m109 9l3-9m14 36l3-10m0-21l4-8m18 12l3-9m22 30l4-10m7-11l3-9m1 3l4-9m-2380 77l-33-1m122-16l-29-7m70 37l-29-7m94-32l-27-2m34 15l-26-6m47 2l-20-14m42 9l-13-21m21 23l-11-22m24 27l-10-23m148 46l-21-15m838 20l4 5m50-18l6 5m70 4l7 6m62-39l9 6m65-5l13 8m25-11l16 11m152 14l23 23m47-48l29 14m64 13l30 13m72 0l11-8m18-17l11-7m8 25l11-8m-4-17l11-7m9 12l10-8m-4 3l10-8m17 30l10-9m-5 17l10-9m13-8l9-8m-2 16l8-9m-6 21l8-10m-3-15l8-8m-2 8l8-9m4 9l7-9m-3 20l7-10m40-4l6-9m20 5l5-9m19 37l4-11m24-30l4-9m5 28l4-10m104 3l12 2m79 24l21 5m-20-41l19 1m-4 8l26 4m-2500 49l-33 2m46-7l-31-5m43 30l-31-4m111-1l-28-9m101 17l-26-10m184 3l-20-17m70 24l-22-14m321 1l-17-8m278 11l0 3m843 9l27 18m-12-15l26 19m64-43l9-8m-1 14l11-8m21 18l11-9m-5-4l11-8m-5 7l10-10m-10 31l11-9m5-25l11-8m46-3l10-9m12 27l10-9m-1 26l9-11m26-5l8-10m28 32l6-12m-1 15l6-12m1 4l6-12m27 9l6-12m29 14l5-12m-1 1l5-12m12 20l5-12m5 6l4-12m14-6l3-12m38 26l4-12m23 24l10 5m129-20l24 9m-2439 37l-31-4m36 11l-31-5m38 25l-31-2m295-42l-19-18m141 39l-23-12m69 3l-22-12m596 17l3 5m754-18l27 18m-20 20l28 16m-18-47l28 17m-24-29l29 15m8 28l-17 2m55-17l10-10m0 3l10-10m21 1l10-10m-3 29l10-11m-7 24l9-11m17-6l10-10m10 21l9-12m2 14l8-12m-5-28l10-10m10 25l9-12m14 12l8-12m-2 1l9-11m3 52l7-13m34-3l5-13m-1 22l7-12m21 9l5-13m23 18l4-13m-3-26l5-13m27 42l5-12m10-4l4-13m2 28l9 9m31-26l9 7m149-5l23 14m-2417 24l-32 4m51 22l-32 6m159-3l-25-13m161 24l-25-11m145 9l-25-14m48-8l-23-16m193 24l-16-13m386 23l4 5m35 1l4 7m444-13l21 25m2-18l19 26m19-34l21 25m150-35l23 23m65-18l27 19m-20-39l29 16m-15-7l-23-11m36 37l-13 0m31-21l-13 3m31 0l-9 6m10 2l-9 6m48-42l10-10m-10 26l-11 9m37-14l9-11m10 16l8-12m-6-4l10-11m-10 41l7-13m2 3l8-12m-7 2l8-12m43 42l-5 13m18-51l8-12m62 49l2 11m44-39l5-13m35 15l5 9m116-9l4 3m18 16l11 11m-2260 21l-31 6m43 6l-31 7m294-32l-26-9m168 13l-20-23m53 26l-16-26m35 18l-12-28m72 62l-9-23m111-12l-11-9m37 51l-8-7m10-12l-10-7m11-15l-11-6m560 39l14 29m270-60l20 25m-20-10l20 25m116 2l22 23m23-29l-20-16m46-3l-19-14m68 17l-7 4m33 17l-6 5m19-6l-6 5m35-33l-7 7m85-21l-5 11m55-6l-3 10m75 7l0 7m136-17l2 4m35 14l10 16m19-31l13 16m1-21l13 19m-2199 30l-30 10m154 2l-25-12m64 9l-25-10m107 6l-26-14m66 9l-26-16m59 5l-26-17m39 62l-27-17m33-10l-25-19m25 29l-27-17m32 22l-26-17m37-1l-24-21m57 44l-23-21m25-11l-19-25m24 33l-20-24m50 44l-13-27m224-5l-8-6m165 43l8 4m24-32l5 7m686 16l21 24m82-43l-17-9m89 15l-6 4m119-21l-4 6m225 6l2 6m16 20l9 23m8-38l7 18m67-40l14 23m-2070 28l-30 2m49 10l-29 2m122-23l-26-10m104 14l-29-10m43 21l-29-10m42 33l-30-9m33 11l-30-9m51 8l-30-8m45-25l-28-15m36 19l-28-14m58 30l-27-13m38-2l-23-19m29 23l-24-17m48 16l-19-21m58 14l-9-24m58 43l10-21m27 35l18-12m1 17l16-8m477-28l11 30m143-28l15 29m210-17l21 25m132-34l-21 12m204 18l-1 23m195-57l3 18m-1836 32l-29 14m50-22l-29 0m48 40l-30 10m39-26l-29 0m93-18l-29-6m62 29l-31-2m68-10l-31-2m33-13l-31-6m44 8l-31-7m36 33l-31 0m54-5l-31-1m40 12l-30 1m44-5l-29 0m55-20l-26-7m62 12l-17-6m58-2l-1-9m17 12l11-5m-7 16l14-2m33-4l20-2m353-3l16 28m82-33l17 28m77 5l11 30m31-36l13 29m335-38l18 28m7-52l21 25m-1346 34l-30 1m68-11l-29-2m69 4l-31 1m90 8l-31 7m31 7l-30 9m34-37l-31 4m51 4l-29 9m66-7l-26 11m91-24l-6 6m78-1l19 6m67 23l8-6m13 10l13-10m12 9l20-14m1-24l19-15m-12 42l25-14m11-4l25-16m22 49l30-11m-12-31l10 26m139 8l16 29m365-28l18 28m-1136 21l-33 2m132 5l-28 12m39-50l-30 11m31 9l-28 14m91 4l-21 23m30-48l-20 24m50-27l-14 26m21 1l-11 29m30-65l-8 24m21 5l-7 23m40-45l3 22m30-35l10 15m2 13l1 10m24 8l-2 4m203-9l29-16m-27-23l30-13m-2 51l31-9m499-21l17 29m-4-33l17 29m-1144 35l-34-1m64 20l-25 0m44 0l-25 2m54 4l-26 5m33-23l-26 8m26-37l-28 9m86 18l-24 18m44-21l-20 22m35-9l-18 24m59-36l-12 28m117-48l-4 8m179 13l27-17m67 26l31-7m291-10l13 31m74-24l14 31m-1015 11l-33-2m348 11l-9 3m415-27l17 29m75-25l21 28m113-25l14 32m-964 8l-34-2m53 18l-32 1m860-10l30 20m-29-15l30 21m-865 20l-35-1m363 6l-5 0m57-2l-1 0m302 28l35-12m-22-2l36-11m-17 2l36-10m-22-2l36-6m-745 80l-38 0m135 12l-37 0m132 2l-32 1m322-2l6-2m38 0l9-4m-558 102l-42 0m283-18l-33 0m124-3l-6 0m152 5l4-1m46-4l7-3m42 8l12-4m-589 64l-43 0m52-14l-42 0m662-24l21-8m-679 61l-43 0m89 18l-43 0m290-14l-34 0m79-5l-20 0m66 2l-6 0m55 1l-2 0m294-2l42-12m-750 76l-45 0m49 19l-45 0m150-7l-43 1m87 3l-43 1m143-4l-37 0m417 1l16-6m-1-4l20-8m-11 1l22-9m3 27l31-11m-697 40l-45 0m704 0l26-8m-18 19l29-9m-702 59l-46 4m70-14l-46 3m237-4l-41 4m236-8l-3 3m97-2l4 3m91 0l12 1m-632 74l-46 9m56-13l-46 10m46-11l-46 10m748-9l30 8m-30-20l32 6m-797 56l-46 12m105-29l-45 13m103-41l-45 12m170-10l-44 10m60 33l-43 15m121-61l-38 10m247 33l1 14m67-12l5 14m23-17l8 14m81-36l19 12m40-29l41 5m-763 51l-44 15m48 14l-43 18m120-12l20 28m17-41l-7 28m11-22l-2 33m16-27l8 16m3-37l-6 48m31-32l-6 18m9-27l-13 15m16-1l-12 13m20-24l-19 40m53-36l-39 42m41-42l-28 22m28-26l-19 34m43-20l-19 20m44-26l-39 19m68-21l-37 18m168-18l-4 19m35-22l0 19m31-19l2 19m32-15l4 19m151-28l22 18m-11-50l26 15m-701 52l-42 20m52-3l-42 20m92-45l9 19m3-4l7 8m4-5l4 25m-3-49l8 16m6 7l-7 24m10-18l4 7m1-36l-5 13m7 13l10 13m-5-1l6 14m-4-25l-2 34m8-60l-4 21m8-11l-5 19m9-29l-4 7m21-1l-10 9m15-16l-14 24m22-5l-19 20m26-5l-5 8m35-38l-24 22m26-16l-16 13m16 8l-23 20m27-53l-13 9m18 12l-24 14m27-25l-45 28m46-28l-25 21m28-15l-11 5m24-15l-15 8m26 1l-30 18m44-10l-43 15m254-8l1 24m59-21l4 24m167-22l30 24m-757 16l-39 26m48-55l-40 23m47 18l-39 25m62-48l-40 24m62-9l-39 26m141-47l-5 0m75 7l-17 7m19 12l-17 1m25-16l-37 0m46-4l-31-9m32 9l-25 6m48 20l-30 6m31-25l-25-2m31-13l-54 12m55-8l-32 10m34-21l-35 28m38 10l-42-6m45-11l-35 5m37-11l-36-7m38 7l-44 4m45-6l-29 8m32-14l-42 2m49 17l-38 5m38 3l-48 12m221-17l-1 29m64-31l4 29m24-26l6 29m-593 15l-38 28m100-27l-37 28m40-34l-38 28m40-39l-38 27m44-10l-38 28m208-24l-12-9m15 6l-10-7m12-9l-13-6m16 15l-18-7m20 28l-23-11m31-5l-27-9m34-5l-26-4m28 26l-22-4m27-5l-31-6m36-17l-42 1m47 5l-35 0m39 35l-34-25m38 25l-35-9m43-21l-32 7m37-10l-21 5m27-10l-30-6m33 24l-35 31m296-29l4 34m26-38l7 34m25-32l8 34m58-34l17 33m-652 4l-36 30m64-23l-35 31m60-20l-35 31m54-40l-34 32m108-13l-34 32m62-56l-17-2m19 3l-12-21m38 2l-28-4m34 5l-19-15m269 33l0 39m182-50l17 37m4-21l24 38m-21-22l25 39m-11-55l29 37m-490 10l-33 33m54-39l-33 34m44-32l-32 34m48-30l-31 35m60-29l-31 35m80-46l-20 42m32-33l-15 44m46-48l-7 43m31-51l-5 42m59-25l0 45m9-60l2 43m1-25l2 45m16-49l1 45m9-51l2 44m16-44l5 44m40-71l8 41m-311 23l-27 39m120-53l-14 45m30-48l-8 45m54-33l-4 46m45-42l0 46"/>
<path stroke="#800080" stroke-width="4" d="M0 0m2463 286l-5-32m20 39l-4-31m62 34l4-32m-179 65l-19-26m185 11l-1-27m69 34l9-30m38 47l9-29m22 40l11-30m-389 66l-26-20m130 47l-13-16m219 0l-2-13m46-22l6-26m102 59l9-29m-515 91l-28-17m414-10l-2-12m184 1l12-30m-957 103l-9-32m371 26l-28-16m34 3l-29-15m41 39l-25-16m56-4l-21-16m122 32l-14-14m267 37l-2-12m132 8l0-11m53-9l3-13m30-22l8-25m-1078 102l-19-27m121 4l-11-31m47 18l-4-32m39 48l2-32m253 66l-28-16m46 24l-24-16m643-12l2-11m119-8l9-24m23 31l10-25m-1262 85l-20-26m225-2l-7-31m33 57l-5-31m25 7l10-31m-3 54l5-31m189 66l-25-17m299-22l-11-14m242 48l1-14m20 7l2-13m367-24l10-23m54 15l11-31m50 63l17-27m-1519 53l-22-24m258 44l-16-26m93 2l13-29m1 58l13-30m102 46l-29-14m152 4l-19-13m88 20l-18-15m60 1l-14-16m166 15l-5-20m10-4l-6-17m133 21l-1-16m30 33l2-16m10 10l2-15m57 40l4-15m292 16l5-9m18 4l6-9m-1424 30l-23-22m366 10l-4-31m33 40l6-30m9 44l11-29m5 45l16-28m192 18l-20-12m65 7l-18-15m125 17l-15-20m20 26l-17-20m48 19l-16-23m21 1l-13-22m84 83l1 14m-5-74l-7-24m89 81l-3 16m123-51l8-20m197 29l6-10m68 28l7-9m256-44l27-15m-12 30l29-14m-1689 55l-25-21m44 23l-23-23m114 6l-19-24m109 71l-24-12m33-33l-20-21m249 20l16-29m266 73l-22-16m41 13l-21-17m56 35l7 4m-31-34l-21-18m22 14l-22-16m68 42l7 7m5 7l8 6m3-22l6 8m-9-22l4 10m24 20l6 9m6-41l4 12m4 25l6 10m260-70l12-21m25 50l15-18m20 23l13-14m29 6l9-12m19 0l7-10m16 5l7-10m354 50l26-6m-1557 52l-24-6m42 22l-22 5m105-23l-24 4m271-58l-20-21m165 29l-21-13m47 45l-21-13m126 31l10-4m3 6l11-3m6 6l12-3m111-22l5 8m89-15l-5 11m34 4l-8 9m62-14l-14 9m143 1l22-13m-1256 25l-26-19m67 32l-27-17m57 32l-22-22m115 35l-20 9m110-13l-22 13m184-46l-21-19m45 48l-21-17m189 11l-21-12m125 22l-26-7m83-8l11-8m-1 27l11-10m42 3l13-6m5-8l11-3m230 9l-12 2m97-18l-18 4m87-14l22-12m-62 57l-19-2m77 2l23-6m-6 7l21-4m-14-42l16-10m46 37l12-7m251-20l13-6m-1615 62l-26-18m60 2l-24-19m30 30l-26-17m45 24l-24-21m33 58l-25 1m26-6l-26 1m69 16l-14 13m10-70l-22-20m21 58l-25 8m29-54l-22-17m36 17l-23-11m39 35l-22 5m27 28l-20 16m35-11l-16 22m33-9l-17 20m35-53l-13 25m22 15l-11 27m202-65l-23-10m103-26l-21-14m62 7l-21-13m190 16l-24-8m30 21l-25-6m31 8l-25-7m29 42l-24-3m86-20l11-13m-1-12l12-11m364 29l-17-4m40 26l-17-6m120 13l21-2m49-24l12-4m28 30l11-2m50-3l10-5m-1556 14l-30-12m129 3l-25-18m28 27l-27-17m42 8l-26-18m52 29l-26-1m126 30l1 20m7 18l0 21m11-39l-1 22m30-36l-17 18m64 4l-18 21m24-14l-18 21m34-48l-17 21m16-36l-18 20m367-36l-20-10m153 46l-24 3m33-6l-25 5m194-29l8-14m265-6l-18-7m110 20l19 1m19 9l15-1m107-21l10-4m46 14l11-3m82-4l13-3m132 8l32-1m-1814 45l-27-15m41 11l-28-15m50 8l-28-16m90 64l15 11m49 0l10 17m16-41l4 21m83-21l-24 17m51 1l-20 17m40-14l-22 12m470-19l-19 0m74-3l-21 8m215-37l2-19m18 11l1-18m19 6l-2-16m109 36l-12-15m69 10l-15-13m50 64l19 11m-17-12l18 12m11-45l20 8m43 17l13 2m311-13l17 2m68-17l32 2m33-9l32 0m237 3l-4-26m-2160 52l-32-9m104 39l-29-12m64-2l-13-11m138 50l16 10m-1-8l15 12m130-20l-23 3m59-14l-24 3m49 8l-24-1m72-7l-24-7m143-27l-20-11m115 22l-19-8m123 15l-17-3m96 19l-16 4m167-50l7-20m17 47l4-20m66-9l-3-20m12 38l-3-21m23 21l-3-21m42 21l-8-18m77 46l15 17m-12-5l14 15m-2-38l19 14m-6-11l17 12m7-11l15 11m338 7l14 2m227-3l31 10m-26-42l32 1m-17 35l33 5m102-29l-5-16m230 33l2-9m181-4l19-19m-2405 44l-12-18m155 51l14-11m17-8l-25 8m30 0l-24-13m40 10l-29-3m95 8l-30-3m35 3l-30-1m52 8l-19-3m19-22l-22 1m60 22l-23-3m25-22l-23 0m174 21l-21-10m285-1l-14-3m104 18l-10 4m12-14l-10 5m130 14l-1 15m61-15l2 17m5-25l2 20m22-14l3 18m29-15l5 16m111-30l10 10m15-9l10 8m424-5l23 7m34-6l29 15m25-1l29 15m35-19l29 15m24-52l-11-18m50 5l-8-18m277 66l7-3m4-32l4-11m67 22l6-10m16-11l5-9m-2406 96l-32-6m49-9l-31-9m102 26l-30-7m72-16l-6-21m36 7l17-3m188 29l-27-16m74 10l-21-7m66-10l-23-6m230 2l-20-8m48 40l-18-9m216-12l-10-2m14 30l-9-2m332-3l4 9m83-12l6 6m83 6l7 4m406-25l29 13m-19-17l30 14m-1 0l29 13m-10-27l29 15m49 24l28 15m26-40l-5-5m136 8l10-4m87-7l8-4m-7-15l9-3m3 39l8-4m2 1l8-4m4-14l8-4m9 7l8-3m1 17l7-4m96-16l5-5m11 15l5-7m111 12l16-7m-5 3l19-8m-2407 34l-12-24m123 27l5-20m53-3l-14-22m25 54l-17-22m27 18l-21-21m42 40l-14-15m50-20l-16-10m39 26l-20-12m76 16l-23-11m36 21l-22-11m48-5l-22-10m143 10l-20-9m425 44l0 4m84-17l1 6m486-30l11 5m48-8l16 4m139 7l30 13m41-3l28 15m-25-5l-25-2m185 2l11-4m8-12l11-4m-10 20l10-5m15 5l11-5m-3-20l10-4m-6 32l11-5m9-3l10-5m25 14l10-5m-1-33l10-4m-2 13l10-4m-6 12l10-4m51 17l7-6m18 14l5-6m57-31l6-5m1 42l4-8m25-35l5-6m77 38l14-6m96 17l25-3m-2525 19l-29-8m48 0l-30-8m77 28l-30-2m112-13l-13-24m17 40l-19-23m35 7l-9-24m50 18l-3-22m27 10l-3-24m63 61l-13-21m74-3l-19-14m25 18l-20-15m37 8l-21-11m182 14l-20-10m948 29l9 6m68 6l14 9m17 20l19 14m61-35l24 21m23 4l27 18m41-34l29 14m176-57l11-5m3 31l12-5m47 3l10-6m22 2l10-6m18-5l10-6m-6 30l9-7m20 7l8-8m23-31l7-6m-3 17l7-7m105 7l4-8m13 34l3-10m1-19l3-9m18 12l4-9m22 29l3-10m7-10l4-10m1 4l4-9m-2417 85l-33 0m126-23l-30-7m71 37l-29-7m96-27l-28-2m36 11l-26-6m53-6l-20-14m49 2l-13-20m23 21l-11-22m25 26l-10-23m137 54l-21-14m863 39l4 5m52-18l5 5m72 5l7 6m64-39l9 5m69-2l12 8m29-8l16 10m159 27l23 23m53-57l29 15m65 11l30 12m53-20l11-8m18-16l11-7m8 24l11-8m-4-16l11-7m8 11l11-7m-5 2l10-8m17 29l9-8m-4 16l9-8m13-8l9-9m-3 16l8-10m-6 21l8-10m-3-13l9-9m-3 8l8-9m3 9l7-10m-3 20l8-9m38-4l6-10m19 6l5-10m18 36l4-11m24-28l4-10m5 28l4-11m112 16l12 1m88 28l20 5m-21-45l19 0m3 12l26 4m-2559 47l-32 2m47-14l-31-6m43 32l-31-4m114-6l-29-9m104 16l-27-10m191-4l-20-16m68 26l-22-13m326 6l-16-8m294 22l0 2m870 25l26 19m-12-15l27 18m46-69l10-9m0 15l12-7m20 16l11-9m-5-3l11-9m-6 6l10-9m-9 31l10-10m6-23l11-9m45-3l10-9m12 27l10-9m-2 24l9-10m25-5l9-11m25 31l6-13m-1 16l6-13m1 5l6-12m27 9l5-12m29 14l5-12m-1 1l4-12m13 20l4-12m5 6l4-12m13-6l4-12m38 26l3-12m30 41l9 5m144-16l23 10m-2493 23l-31-5m36 11l-31-4m38 27l-32-2m308-58l-18-19m136 46l-23-12m70 3l-23-11m622 33l3 5m778-5l27 18m-19 18l29 16m-19-46l28 16m-23-30l29 16m-38 14l-17 2m82-29l10-11m0 4l10-11m21 2l11-10m-4 28l10-10m-8 23l10-11m17-5l11-11m8 20l8-12m2 14l9-12m-4-26l10-10m9 23l8-11m14 11l7-12m0 2l8-11m2 50l7-13m32-3l5-14m1 24l7-13m19 9l5-13m22 18l5-13m-3-26l5-12m27 42l5-13m9-4l4-12m7 49l9 9m31-28l8 7m164 2l23 15m-2472 13l-32 4m51 24l-31 6m165-22l-26-13m162 26l-24-11m144 6l-24-14m49-10l-23-15m200 26l-15-13m405 41l3 6m36 2l4 7m461 5l21 25m0-17l20 26m20-35l20 25m153-37l23 23m69-22l26 20m-17-43l29 15m-67-33l-23-11m46 48l-12 0m30-18l-12 3m34 3l-10 6m11 2l-9 6m67-58l10-10m-31 45l-11 10m57-35l9-12m9 16l7-13m-3-2l9-11m-12 39l8-12m2 3l9-12m-8 2l8-13m30 68l-6 13m32-76l8-12m56 72l2 11m47-63l5-13m35 37l4 9m116-15l4 3m25 24l12 11m-2303 16l-32 5m44 8l-31 7m299-48l-25-8m173-2l-20-23m57 23l-15-27m38 17l-13-27m76 66l-9-23m109 2l-11-9m40 53l-8-8m8-11l-10-6m10-15l-11-7m585 75l13 29m277-64l21 25m-21-10l20 25m118 0l23 24m-20-69l-19-16m46-1l-19-14m80 35l-7 4m34 18l-6 4m19-5l-6 4m34-30l-6 6m86-16l-6 10m58-6l-4 11m79 3l0 6m138-19l2 4m43 26l11 16m21-31l12 16m2-18l12 20m-2241 20l-30 10m159-20l-24-13m63 12l-26-9m107 1l-25-14m65 7l-26-16m59 4l-26-17m38 62l-27-16m35-13l-26-18m24 30l-27-16m33 21l-27-18m40-4l-24-20m58 43l-23-21m29-15l-19-25m23 34l-21-23m58 40l-12-27m228 16l-7-5m180 52l8 4m21-29l5 8m702 32l21 25m44-77l-16-9m99 28l-5 5m120-20l-3 6m230 6l1 6m24 37l8 23m7-43l7 19m74-36l14 24m-2114 6l-30 3m50 9l-30 2m126-35l-25-10m100 14l-29-10m43 21l-30-10m42 34l-30-9m33 11l-31-8m52 8l-31-9m48-31l-28-15m36 20l-28-14m59 31l-28-14m43-7l-24-20m29 26l-25-18m54 13l-19-22m68 12l-8-23m76 45l9-20m36 43l19-11m-2 20l16-9m472 11l12 30m146-29l15 28m216-20l20 25m91-47l-22 11m225 30l-2 23m200-62l3 18m-1868 28l-28 13m49-35l-29 0m47 50l-30 11m40-37l-29 1m93-25l-29-6m60 33l-31-3m68-9l-32-1m34-18l-31-5m44 6l-30-8m35 41l-32-1m55-5l-31 0m41 13l-31 1m46-6l-30 1m59-28l-26-6m71 12l-17-5m74-6l0-9m28 16l11-6m-4 20l13-2m40-4l20-3m349 28l16 28m83-33l17 27m71 8l12 31m32-38l14 30m339-40l18 27m10-54l21 24m-1397 11l-30 1m69-14l-29-1m67 6l-31 1m90 14l-30 7m31 9l-30 9m33-42l-31 5m53 8l-30 9m70-5l-25 11m110-29l-7 6m104-1l19 6m56 11l8-6m18 6l14-11m18 6l20-15m0-24l19-15m-6 43l25-14m11-6l26-16m26 54l30-11m-32 6l9 26m146 11l16 28m367-28l17 27m-1186-4l-33 1m137 16l-28 11m37-50l-29 10m32 13l-28 13m98 14l-20 24m30-48l-20 23m56-24l-14 27m24 3l-10 29m32-70l-9 25m23 3l-7 22m50-45l4 22m36-42l10 14m-7 9l2 10m20 2l-1 4m233-29l29-17m-26-19l30-12m-1 54l32-10m484 18l17 28m-4-32l18 28m-1196 6l-34 0m73 20l-26 0m45 2l-26 2m54 7l-25 4m32-19l-26 7m24-35l-28 9m90 27l-24 17m48-16l-21 23m38-8l-17 24m64-32l-13 27m126-67l-4 8m210-12l27-17m71 36l32-7m272 28l13 32m75-25l14 32m-1062-23l-34-2m373 16l-8 2m440 0l18 29m78-26l20 27m107-20l15 32m-1013-26l-35-2m56 21l-32 0m922 10l30 19m-29-13l29 20m-929-1l-35 0m393 6l-5 0m61-2l-2 0m339 16l34-11m-20-2l36-11m-17 3l35-10m-21 2l36-6m-819 86l-38 0m136 12l-37 1m137 2l-33 2m361-6l5-3m42-1l9-4m-609 106l-41 1m291-19l-34 0m152-3l-7 0m163 4l3-2m50-5l7-2m47 6l11-5m-643 69l-42 1m52-15l-42 1m725-33l20-8m-742 69l-44 1m90 17l-44 1m300-15l-34-1m93-4l-19 0m79 2l-5 0m58 1l-1 0m337-14l42-12m-837 88l-45 0m49 19l-45 0m152-6l-43 1m87 3l-42 1m148-5l-38-1m471-4l17-6m2-6l20-7m-9-1l23-8m11 24l31-10m-773 50l-46 1m776-9l25-8m-14 18l29-8m-777 71l-46 5m70-16l-45 3m241-3l-40 3m273-8l-3 3m104-2l3 2m100-1l12 1m-690 82l-46 9m56-12l-46 9m46-10l-45 10m823-11l30 9m-28-23l31 6m-874 62l-46 11m106-27l-45 13m103-42l-45 12m171-12l-43 11m60 37l-43 15m126-66l-39 9m287 38l1 15m71-13l5 15m26-18l7 14m93-38l20 12m61-36l40 6m-847 60l-45 15m50 17l-43 18m183-2l20 29m-10-42l-7 27m16-16l-1 34m25-45l8 16m-11-5l-6 47m31-61l-5 19m1-31l-13 15m17-3l-12 14m13 2l-18 40m32-34l-38 43m51-63l-27 21m36-13l-18 35m42-35l-19 21m24-28l-39 19m70-22l-38 19m202-18l-4 19m39-22l-1 19m34-19l1 19m35-15l4 19m169-29l23 18m-8-53l26 15m-769 57l-43 19m53-2l-43 20m144-46l9 19m1-15l6 7m2 13l3 26m2-59l8 16m-9 15l-7 25m21-36l5 8m-9-31l-5 13m22 13l10 13m-9 0l5 13m-11-4l-1 33m5-72l-4 21m7-13l-4 19m9-41l-3 7m14 1l-9 9m10-1l-13 24m16-9l-18 20m39-17l-4 9m15-25l-25 23m35-26l-17 14m10 14l-24 19m38-63l-14 9m8 17l-24 14m6-11l-45 29m66-36l-26 20m43-30l-12 5m21-12l-16 7m12 12l-30 17m31-12l-43 14m298 2l0 24m63-21l4 24m193-22l29 24m-825 18l-39 25m47-57l-41 24m49 19l-40 26m62-50l-40 24m63-7l-39 26m175-73l-4 0m62 14l-17 8m19 5l-17 0m5-16l-37 1m52-14l-31-9m38 24l-25 6m43 20l-30 5m36-32l-24-2m1 1l-53 11m76-9l-32 10m31-3l-34 28m30-24l-41-7m51 1l-34 6m35-24l-36-6m30 17l-44 4m60-2l-28 8m18-20l-41 2m52 20l-39 5m29 10l-48 12m268 0l-2 30m70-32l3 29m27-26l5 30m-636 13l-39 27m102-26l-38 28m40-34l-38 27m40-39l-38 28m44-10l-37 28m233-61l-13-9m18 8l-11-6m10-9l-12-6m10 14l-18-6m15 23l-24-11m28-3l-27-8m35-1l-26-3m32 25l-22-5m18-6l-32-6m26-10l-41 2m53 3l-35 0m40 10l-33-24m36 40l-36-8m47-6l-31 7m47-12l-22 4m19-20l-30-6m28 61l-35 31m335-26l3 35m30-39l7 33m26-31l9 34m66-35l18 34m-706 0l-37 29m66-21l-36 30m61-19l-36 30m56-38l-35 32m109-13l-34 32m79-90l-17-2m24-16l-13-20m23 18l-28-3m43-7l-18-16m287 88l1 38m198-51l17 37m11-20l24 39m-20-22l25 39m-7-57l28 37m-551 6l-33 33m54-38l-32 33m44-31l-33 33m50-28l-31 35m60-29l-31 35m91-39l-21 42m38-31l-14 43m53-48l-6 43m32-52l-5 43m64-23l1 44m10-61l2 42m1-22l2 45m15-49l1 44m10-51l3 44m18-44l5 44m43-74l9 41m-347 21l-26 39m132-47l-13 45m35-48l-8 45m58-32l-4 46m49-42l0 47"/>
<path stroke="#1c00e6" stroke-width="4" d="M0 0m2458 254l-4-33m20 41l-5-30m71 32l3-31m-201 70l-18-25m202 9l-1-27m79 31l8-29m39 47l10-30m23 40l12-30m-427 76l-25-20m142 51l-12-16m229 3l-2-14m54-34l7-25m104 55l10-28m-553 102l-28-16m440-6l-2-13m198-16l12-29m-978 100l-10-31m353 41l-29-15m34 3l-29-16m45 39l-25-15m60-5l-22-15m130 33l-15-14m280 39l-3-11m135 8l0-12m56-10l2-14m36-33l8-25m-1105 100l-18-26m128-1l-11-30m54 16l-3-33m44 49l2-33m223 83l-28-15m50 23l-25-15m670-8l1-12m127-20l8-24m25 30l9-25m-1291 84l-19-25m237-8l-8-31m36 57l-5-31m40 7l11-31m-9 54l6-32m158 81l-24-16m312-20l-10-15m253 49l1-14m21 8l1-13m376-34l9-23m56 7l12-30m55 66l16-27m-1557 56l-22-24m264 42l-16-27m122 0l12-30m2 58l13-29m60 61l-30-13m163 4l-19-14m89 19l-17-15m63 0l-15-17m176 12l-6-20m10-1l-5-17m137 22l0-15m32 32l2-16m10 11l1-15m60 40l5-14m292 21l6-9m18 4l7-9m-1454 17l-24-23m386 2l-4-30m43 40l6-31m14 46l11-30m10 47l17-28m155 34l-20-13m67 5l-19-15m129 12l-16-21m19 27l-16-21m48 17l-15-22m23 1l-12-21m97 118l1 15m-13-113l-8-25m94 122l-4 16m135-87l9-20m194 39l5-9m70 28l6-8m277-51l27-15m-10 31l29-15m-1743 49l-25-22m46 22l-23-22m118 4l-20-23m105 82l-24-11m37-43l-21-21m286 12l15-28m229 85l-23-15m43 11l-22-18m85 57l8 3m-60-55l-22-17m22 15l-22-17m97 66l6 7m7 6l8 6m1-20l7 9m-12-21l5 9m25 20l7 9m3-38l3 12m7 23l6 9m266-100l11-20m29 52l16-17m17 26l14-15m24 9l10-11m16 1l8-11m15 6l7-9m373 53l27-7m-1608 53l-23-6m43 33l-22 6m103-25l-24 4m275-83l-21-20m165 36l-20-14m46 46l-21-13m157 40l11-4m3 7l11-4m7 7l11-3m105-11l4 8m80-12l-5 11m31 2l-9 8m57-13l-13 8m178-20l21-13m-1303 19l-25-19m65 34l-26-16m61 26l-23-21m118 65l-21 9m109-9l-22 13m185-78l-20-18m44 49l-20-16m188 15l-20-11m119 26l-25-7m119-9l12-8m-2 25l12-10m43 7l12-6m4-5l11-4m207 15l-12 1m91-15l-17 3m126-29l21-11m-102 66l-18-1m118-3l23-7m-8 10l21-5m-19-47l16-9m42 39l12-7m252-19l13-5m-1654 49l-25-19m61 2l-25-19m29 32l-26-18m47 21l-23-21m31 80l-25 2m25-7l-27 2m82 27l-15 13m3-103l-21-20m17 86l-24 7m31-78l-23-18m36 24l-23-11m40 51l-21 4m28 40l-20 16m39-5l-17 21m33-10l-16 20m38-48l-12 26m23 16l-12 28m191-103l-23-11m105-29l-21-13m62 7l-20-13m186 21l-25-8m30 23l-25-5m31 6l-25-6m30 45l-25-2m122-31l11-14m0-9l11-11m336 36l-17-3m40 23l-18-6m159 17l21-1m40-27l13-4m26 32l12-2m48-6l11-4m-1597 6l-31-13m135-2l-26-18m27 28l-27-16m43 6l-25-19m51 47l-25-2m152 52l2 21m5 18l1 20m9-37l-1 22m14-40l-17 19m63 6l-18 22m24-15l-18 21m35-48l-17 21m15-37l-18 20m365-66l-19-9m148 58l-25 3m33-4l-26 5m228-48l8-15m239 2l-17-8m146 29l20 0m14 8l15-1m102-24l11-3m46 14l11-3m84-4l13-4m151 11l33 0m-1874 30l-28-16m41 12l-27-16m49 8l-27-16m132 91l16 10m43 7l10 18m10-38l4 20m55-24l-23 17m54 1l-20 17m38-19l-22 12m473-31l-18-1m71 6l-22 9m239-65l3-18m16 11l1-17m16 7l-2-16m99 37l-12-16m66 13l-16-12m85 87l19 10m-18-10l18 12m13-49l20 8m36 11l13 2m315-13l16 3m84-18l31 2m34-11l33-1m200-22l-5-26m-2187 69l-31-9m106 36l-30-13m81 0l-13-11m167 71l17 9m-3-5l15 12m92-29l-22 2m57-13l-23 2m48 5l-24-2m72-12l-23-8m146-30l-21-12m117 26l-19-8m125 20l-16-3m96 26l-15 3m189-73l7-20m14 47l5-21m58-8l-2-20m11 37l-4-20m24 20l-4-20m38 23l-9-19m101 82l16 17m-14-7l15 14m2-38l18 14m-7-13l18 12m4-12l15 10m337-1l14 2m244 5l31 9m-25-50l33 0m-17 40l32 4m65-49l-5-16m237 40l3-10m197-13l19-19m-2436 45l-12-17m181 57l15-11m-23 11l-26 8m32-21l-25-12m36 19l-28-2m93 7l-31-3m36 5l-31-2m64 7l-20-2m17-19l-21 2m58 17l-24-2m26-20l-24 0m177 11l-22-11m293 7l-13-3m107 25l-10 3m12-12l-11 5m140 24l-2 15m65-13l1 17m6-22l2 19m23-15l4 17m30-16l6 15m115-35l10 9m15-10l9 8m438-6l24 7m39 2l28 16m26-2l29 14m35-18l28 14m-15-84l-10-18m52 5l-9-17m293 80l8-4m0-39l3-11m70 23l6-11m15-9l5-8m-2443 98l-32-6m50-12l-30-8m102 27l-31-7m97-30l-7-22m60 26l17-4m144 17l-26-16m79 19l-20-7m63-9l-24-7m234 1l-20-9m50 40l-19-9m225-5l-11-1m16 29l-10-2m346 8l5 8m84-14l7 6m83 4l7 4m428-16l30 12m-19-15l29 13m-1 0l30 13m-11-25l28 16m49 23l29 15m-8-60l-5-5m151 9l10-4m85-7l9-3m-7-15l9-3m2 38l8-4m2 1l8-4m4-14l7-3m10 7l7-4m1 17l7-4m94-17l6-6m10 14l4-6m123 11l16-7m-2 2l19-7m-2438 17l-12-23m140 30l6-20m33-5l-15-23m23 55l-16-22m22 19l-21-20m49 45l-13-15m47-15l-17-11m36 25l-19-11m72 16l-22-10m36 20l-22-12m48-3l-23-11m146 12l-21-8m446 56l0 3m85-14l2 5m495-30l11 4m53-8l16 4m153 16l30 12m39 0l29 15m-79-22l-25-2m221 0l11-5m8-11l11-3m-11 18l11-5m15 5l10-4m-3-20l11-4m-6 31l10-5m9-3l10-5m25 14l9-6m0-31l9-4m-1 13l9-4m-5 12l9-4m49 15l7-5m16 13l6-7m57-29l5-6m0 40l4-7m26-34l5-6m86 38l13-5m108 19l25-4m-2579 15l-30-8m48 0l-30-7m77 33l-31-3m130-34l-13-25m11 42l-20-24m46 7l-10-24m57 20l-4-22m28 8l-4-23m54 63l-13-20m68 3l-20-14m25 17l-19-15m35 12l-22-12m184 16l-21-10m978 45l9 5m73 10l13 9m23 25l18 13m67-27l24 22m26 0l28 17m42-37l29 15m158-77l11-5m4 31l11-6m46 3l11-5m21 1l10-6m18-5l9-5m-6 28l9-6m19 5l8-7m22-30l8-5m-4 15l7-6m102 5l3-9m13 33l3-10m1-18l4-8m18 11l3-9m22 28l4-10m7-10l3-9m2 4l4-9m-2454 94l-32-1m128-29l-29-8m71 38l-29-7m97-22l-27-3m37 8l-26-6m59-14l-21-14m57-4l-12-21m24 20l-11-22m26 25l-11-23m127 63l-21-15m888 59l4 5m53-18l6 4m73 7l8 6m65-40l9 6m72 0l13 8m32-6l15 11m167 39l23 22m59-64l29 14m66 9l30 13m34-41l11-8m18-15l11-8m8 24l11-7m-4-16l10-7m9 11l10-8m-5 2l10-7m16 28l10-9m-5 17l10-9m12-8l9-8m-4 14l8-9m-6 20l8-9m-2-13l8-8m-3 7l8-9m2 8l7-9m-2 20l7-10m37-4l6-9m18 5l6-9m16 34l4-12m24-26l5-9m4 26l4-10m120 27l13 2m95 31l21 5m-23-50l18 1m11 15l26 3m-2617 46l-33 2m49-22l-32-5m44 33l-32-4m117-11l-28-8m105 14l-26-9m197-11l-20-17m66 30l-22-14m332 12l-17-8m311 32l-1 3m897 41l27 18m-12-15l26 19m30-97l9-8m3 16l11-8m20 15l11-9m-5-3l12-8m-8 5l11-10m-10 31l11-9m6-23l11-8m44-4l10-9m12 27l11-9m-4 23l9-11m25-5l8-10m23 28l6-12m-1 15l6-12m1 5l6-12m26 9l6-12m28 14l4-13m-1 2l5-12m12 20l5-12m4 6l4-12m13-6l3-11m38 25l4-12m35 58l10 4m157-10l24 9m-2548 9l-31-4m36 11l-31-5m37 30l-31-2m321-75l-19-18m132 52l-23-12m70 4l-22-12m647 50l3 4m802 9l27 18m-17 16l28 16m-19-46l28 17m-22-31l29 15m-84 1l-18 2m110-42l9-10m1 3l10-10m22 2l10-10m-4 28l10-11m-8 23l9-11m19-5l10-10m6 18l9-11m2 13l8-12m-2-24l10-10m7 22l9-12m12 11l8-12m0 3l9-12m0 49l6-13m31-4l5-13m3 24l7-12m17 8l4-14m23 19l4-13m-2-25l5-13m27 42l6-12m7-4l4-13m12 71l9 9m30-30l9 7m178 10l23 14m-2527 3l-32 4m52 26l-32 6m171-41l-25-12m163 27l-25-11m145 3l-25-15m51-10l-23-16m208 29l-16-14m424 61l4 5m36 4l4 6m478 24l20 24m0-15l19 26m21-36l21 25m155-39l23 22m72-24l27 19m-15-47l29 16m-119-60l-23-11m57 59l-13 0m31-15l-13 3m37 6l-9 6m11 2l-8 6m85-74l11-10m-53 65l-12 9m78-56l9-11m7 14l8-12m-2-1l10-11m-14 38l7-13m4 4l8-12m-8 1l8-12m16 93l-5 12m45-100l8-13m50 96l1 11m51-87l6-13m33 59l5 9m115-21l5 3m32 32l11 11m-2346 10l-31 6m44 9l-31 7m305-63l-26-9m179-16l-20-23m62 19l-16-26m41 16l-12-28m79 71l-9-23m107 16l-11-9m43 54l-9-7m7-10l-10-7m9-15l-11-6m609 110l14 30m284-69l20 26m-21-11l21 26m120-2l22 23m-61-108l-20-16m47 1l-19-14m92 53l-7 4m35 18l-6 5m19-6l-6 5m34-29l-7 7m87-13l-5 11m59-6l-3 10m82-1l-1 7m141-22l3 4m51 38l10 16m23-31l13 16m1-14l13 19m-2284 11l-31 10m166-43l-25-12m62 15l-25-10m107-3l-26-13m65 4l-26-17m59 4l-26-17m37 63l-27-17m36-14l-25-19m22 33l-26-17m32 20l-26-17m42-7l-23-21m58 43l-22-20m32-20l-19-25m21 36l-20-24m66 37l-13-27m234 38l-8-6m196 62l7 4m19-25l5 7m718 50l21 24m7-110l-17-9m111 42l-6 4m123-18l-4 6m235 6l2 6m30 54l9 22m5-46l8 18m80-30l13 23m-2157-14l-29 2m49 9l-29 2m130-47l-26-10m97 14l-29-10m42 21l-29-11m41 36l-31-9m33 12l-30-9m51 8l-30-8m50-38l-27-15m35 21l-29-14m60 31l-27-13m46-14l-23-19m27 27l-24-17m59 8l-19-21m79 10l-9-24m94 49l10-21m45 53l18-12m-4 23l15-8m469 49l11 31m150-32l15 29m221-24l21 25m48-61l-21 12m244 41l-1 23m204-67l3 18m-1899 23l-29 14m49-49l-29 0m46 61l-30 10m41-46l-29 0m93-31l-29-6m58 36l-30-2m66-8l-31-2m34-21l-31-6m45 4l-31-7m34 47l-31 0m55-5l-30-1m40 15l-30 1m46-6l-29 0m62-34l-26-7m80 14l-16-6m90-9l-1-8m40 18l12-5m-3 23l14-2m46-5l20-2m345 58l16 28m84-34l16 28m67 11l11 30m35-38l13 29m344-42l18 28m13-58l21 25m-1448-13l-30 1m70-16l-29-2m65 9l-31 1m91 20l-31 7m32 11l-30 9m32-46l-31 4m54 13l-29 9m74-3l-26 11m129-34l-6 7m129-2l20 6m44-1l8-6m24 1l13-10m25 1l20-14m-1-25l19-16m0 45l25-15m12-7l25-16m31 59l30-12m-53 44l10 26m152 13l16 29m368-30l18 28m-1237-31l-33 2m142 25l-28 12m36-52l-30 11m34 15l-28 14m106 24l-21 23m31-48l-20 24m62-21l-15 26m29 6l-11 29m34-74l-8 24m24 1l-7 23m61-46l3 22m43-50l9 15m-14 4l1 10m18-4l-2 5m264-51l28-16m-24-15l29-13m2 57l31-9m470 55l17 29m-3-33l17 29m-1247-23l-34-1m81 21l-25 0m44 4l-25 2m54 9l-26 5m32-17l-27 8m23-34l-28 9m94 35l-24 18m51-11l-20 22m41-6l-18 24m69-29l-12 28m134-87l-4 8m241-37l27-16m76 45l31-6m254 66l12 31m77-24l14 31m-1110-56l-33-2m398 20l-9 3m467 26l17 30m81-29l21 28m101-16l14 33m-1062-61l-34-2m58 23l-33 1m985 28l30 20m-30-13l30 21m-994-22l-36-1m424 7l-5 0m64-2l-1 0m374 5l35-12m-19-1l36-11m-18 4l36-10m-21 6l36-6m-893 92l-38 0m137 13l-37 0m141 4l-32 1m398-10l6-2m45-3l10-3m-660 110l-42 0m299-19l-33 0m178-3l-6 0m172 2l4-1m53-6l7-3m51 4l12-4m-697 74l-43 0m53-14l-43 0m788-41l21-9m-807 79l-43 0m89 18l-43 0m309-16l-35 0m109-4l-20 0m94 2l-6 0m63 1l-2 0m381-26l42-12m-924 100l-44 0m48 19l-45 0m154-5l-44 1m89 3l-43 1m153-7l-37 0m525-10l16-5m6-8l20-8m-6-1l22-9m20 23l31-11m-850 62l-45 0m846-17l26-8m-11 18l28-9m-851 85l-46 4m71-17l-46 3m247-3l-41 4m311-9l-3 3m110-3l4 3m108-3l12 0m-748 91l-46 9m56-12l-45 10m46-10l-46 10m899-12l30 8m-27-25l32 6m-952 67l-45 12m106-26l-45 13m103-43l-46 12m174-13l-44 10m61 42l-43 15m130-72l-38 10m326 43l1 14m75-12l6 14m27-18l8 14m105-40l19 12m82-42l41 5m-933 70l-44 15m51 20l-44 18m247 9l20 28m-37-43l-7 28m22-10l-2 33m35-62l9 15m-26 27l-6 48m32-90l-6 18m-6-34l-13 16m18-5l-12 13m7 29l-19 40m13-31l-39 42m63-84l-28 22m46 0l-19 34m42-48l-19 20m4-29l-39 19m71-22l-37 18m235-17l-3 19m41-22l0 18m35-18l2 18m37-14l3 19m189-30l22 19m-4-57l26 15m-838 61l-42 20m52-2l-42 20m195-47l9 19m-2-27l7 8m-2 31l4 25m6-68l8 16m-24 24l-6 24m32-52l4 7m-18-25l-5 13m37 13l10 13m-14 0l6 14m-18 15l-2 34m3-85l-4 20m7-14l-5 19m11-53l-4 7m9 3l-10 9m7 14l-14 25m12-14l-19 20m54-28l-5 8m-5-10l-24 22m42-34l-16 13m2 20l-23 20m47-74l-13 10m-3 21l-24 14m-15 4l-45 28m85-44l-25 21m56-46l-11 4m16-9l-15 8m-3 21l-30 18m18-16l-44 15m342 11l1 24m66-21l5 24m217-22l30 24m-894 19l-40 26m46-59l-40 23m49 22l-39 25m61-51l-40 25m64-6l-39 26m210-99l-5 0m50 22l-16 7m18-2l-18 1m-14-16l-37 0m58-23l-30-8m43 38l-25 5m38 20l-30 6m42-40l-25-1m-27 13l-54 12m98-11l-32 11m29 14l-35 28m24-59l-42-6m59 13l-35 5m34-35l-36-7m22 28l-43 4m75 2l-29 8m6-26l-42 2m55 23l-38 6m19 16l-48 13m314 17l-1 29m74-32l4 29m28-25l6 29m-681 11l-38 28m102-26l-37 28m39-35l-37 28m39-39l-38 27m45-9l-38 28m258-98l-12-10m19 12l-10-7m8-8l-13-6m5 14l-18-7m9 19l-23-11m24 0l-28-9m37 5l-26-4m36 24l-23-4m9-8l-31-7m16-1l-42 1m60 2l-36 0m43-14l-34-25m34 57l-35-9m51 10l-32 7m57-15l-21 5m10-31l-30-7m23 99l-35 31m373-22l4 34m33-40l8 34m27-31l8 34m76-35l17 33m-760-4l-36 30m66-21l-35 31m60-20l-35 31m56-37l-34 31m109-12l-35 32m97-124l-16-3m27-33l-12-21m7 36l-27-4m52-19l-19-15m307 141l0 39m215-53l16 38m19-19l24 38m-19-21l26 39m-5-59l29 37m-613 2l-33 34m55-39l-33 34m44-32l-32 34m51-27l-31 35m60-29l-31 35m101-32l-20 42m44-30l-15 44m62-49l-7 43m34-52l-4 42m69-21l0 45m12-64l1 43m2-20l3 45m13-50l2 45m11-52l2 44m21-44l5 44m47-77l8 40m-381 20l-27 39m146-41l-14 44m41-47l-8 45m62-31l-4 47m53-42l0 46"/>
</g>
</svg></div>
</div>
</body></html>
